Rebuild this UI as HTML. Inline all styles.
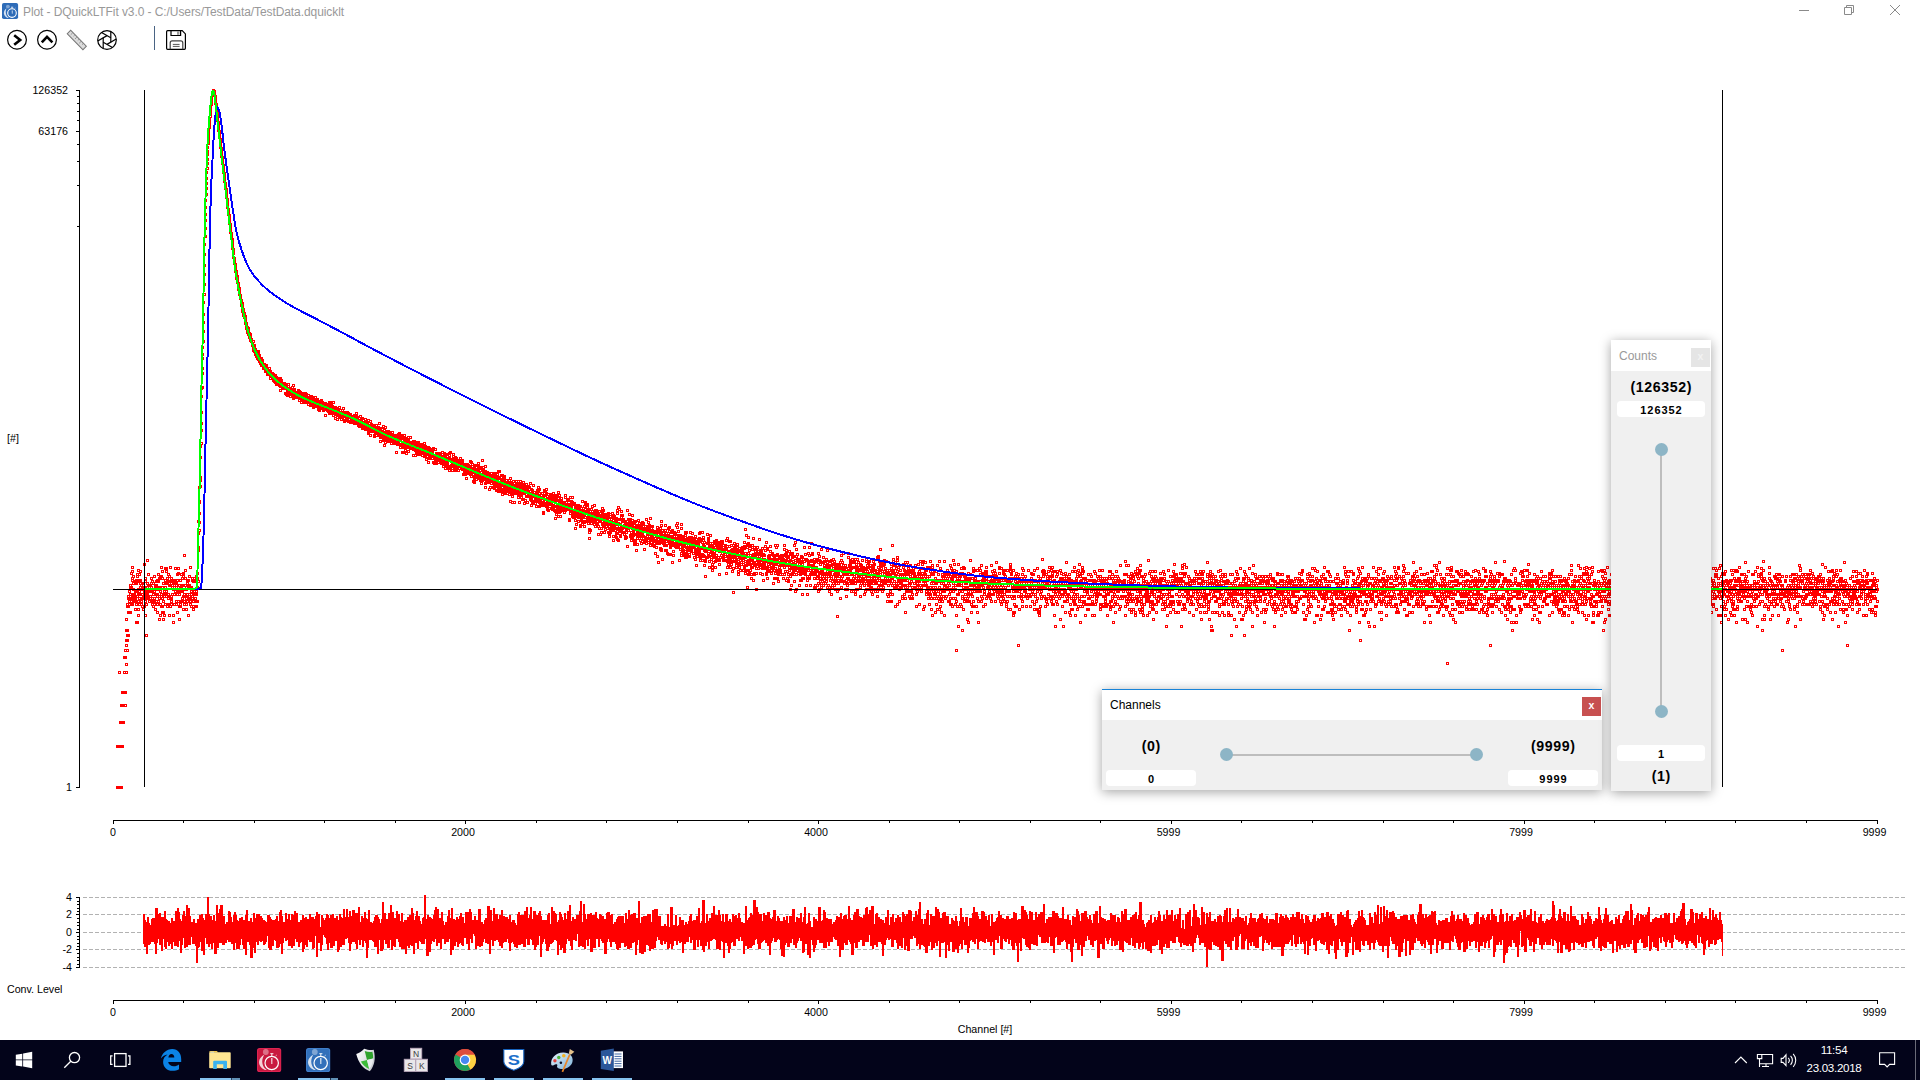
<!DOCTYPE html>
<html lang="en">
<head>
<meta charset="utf-8">
<title>Plot - DQuickLTFit v3.0</title>
<style>
*{box-sizing:border-box;margin:0;padding:0}
html,body{width:1920px;height:1080px;overflow:hidden;background:#fff}
body{position:relative;font-family:"Liberation Sans",sans-serif;color:#000}
.abs{position:absolute}
#title{left:23px;top:4px;font-size:12px;line-height:16px;color:#999;white-space:nowrap;letter-spacing:-0.08px}
#plot{left:0;top:0;width:1920px;height:1040px}
#plot text{font-family:"Liberation Sans",sans-serif;font-size:10.67px;fill:#000}
.panel{background:#f0f0f0;box-shadow:0 2px 11px rgba(0,0,0,.36)}
.ptitle{background:#fff;font-size:12px;white-space:nowrap}
.inp{background:#fff;border-radius:4px;font-weight:bold;font-size:11px;letter-spacing:.95px;text-indent:.95px;text-align:center;line-height:19.400px;height:16px;overflow:hidden}
.lab{font-weight:bold;font-size:14.200px;letter-spacing:.6px;text-indent:.6px;text-align:center;white-space:nowrap;line-height:17px}
.knob{width:13px;height:13px;border-radius:50%;background:#8db5c6}
#taskbar{left:0;top:1040px;width:1920px;height:40px;background:#03041a}
#taskbar .t{color:#fff;font-size:11.600px;letter-spacing:-.32px;white-space:nowrap;text-align:center;width:80px;left:1794px;line-height:14px}
.run{height:2px;background:#8fc1e8;top:38px}
</style>
</head>
<body>
<!-- window title bar -->
<svg class="abs" style="left:2px;top:3px" width="17" height="17" viewBox="0 0 17 17">
  <rect x="0" y="0" width="16.100" height="16.100" rx="1.800" fill="#2e6cb8"/>
  <circle cx="10" cy="10.100" r="4.300" fill="none" stroke="#fff" stroke-width="1.100"/>
  <path d="M9.800 7.400h.8l-.1 3.400h-.6z" fill="#fff"/>
  <path d="M9 4.200h2.200M10.100 4.200v1.600M12.600 5.800l.8-.7" stroke="#e8f0fa" stroke-width=".8" fill="none"/>
  <circle cx="5.900" cy="3.600" r="1.900" fill="#fff" opacity=".4"/>
  <path d="M4.600 5.300C.8 8 1.200 12 4.200 14.200C5.200 14.900 6.200 15.100 6.800 15C4.200 13.200 2.800 9.400 4.600 5.300Z" fill="#fff" opacity=".8"/>
</svg>
<div id="title" class="abs">Plot - DQuickLTFit v3.0 - C:/Users/TestData/TestData.dquicklt</div>
<svg class="abs" style="left:1790px;top:0" width="130" height="22" viewBox="0 0 130 22" fill="none" stroke="#8a8a8a" stroke-width="1">
  <path d="M9 10.5h10"/>
  <path d="M54.500 7.500h7v7h-7zM56.500 7.500v-2h7v7h-2"/>
  <path d="M100 5l10 10M110 5l-10 10"/>
</svg>

<!-- toolbar -->
<svg class="abs" style="left:0;top:22px" width="200" height="36" viewBox="0 22 200 36" fill="none">
  <circle cx="17" cy="39.8" r="9.4" stroke="#000" stroke-width="1.2"/>
  <path d="M14.2 35.2L20.2 39.9L14.2 44.8" stroke="#000" stroke-width="2.6"/>
  <circle cx="47" cy="39.8" r="9.4" stroke="#000" stroke-width="1.2"/>
  <path d="M41.8 42.4L47 36.9L52.4 42.4" stroke="#000" stroke-width="2.6"/>
  <g transform="translate(76.8 40) rotate(45.5)">
    <rect x="-11.2" y="-2.4" width="22.4" height="4.8" fill="#dcdcdc" stroke="#777" stroke-width="1"/>
    <path d="M-8 -2v2.6M-5 -2v1.6M-2 -2v2.6M1 -2v1.6M4 -2v2.6M7 -2v1.6" stroke="#888" stroke-width=".8"/>
  </g>
  <g stroke="#000" stroke-width="1.2">
    <circle cx="107" cy="40" r="9.300"/>
    <g transform="translate(107 40)"><path d="M3.800 2.200V-8.490" transform="rotate(0)"/><path d="M3.800 2.200V-8.490" transform="rotate(60)"/><path d="M3.800 2.200V-8.490" transform="rotate(120)"/><path d="M3.800 2.200V-8.490" transform="rotate(180)"/><path d="M3.800 2.200V-8.490" transform="rotate(240)"/><path d="M3.800 2.200V-8.490" transform="rotate(300)"/></g>
  </g>
  <path d="M154.5 26V50" stroke="#4a6484" stroke-width="1"/>
  <g stroke="#000" stroke-width="1.2">
    <path d="M167.6 30.7h14.6l3.2 3.2v14.4q0 1-1 1h-16.8q-1 0-1-1v-16.6q0-1 1-1z"/>
    <path d="M171 30.7v4.8h9.6v-4.8"/>
    <path d="M170.2 49.3v-6.4q0-2 2-2h8.6q2 0 2 2v6.4" stroke="#444"/>
    <path d="M172.8 44.4h6.8M172.8 46.4h6.8" stroke="#555" stroke-width="1"/>
  </g>
  <rect x="177" y="31.2" width="2.4" height="3.6" fill="#999"/>
</svg>

<!-- plot -->
<svg id="plot" class="abs" width="1920" height="1040" viewBox="0 0 1920 1040">
  <g shape-rendering="crispEdges" fill="none">
    <!-- scatter -->
    <g transform="translate(.5 .5)"><path stroke="#f00" stroke-width="1" d="M0 0m116 745h2v2h-2zm0 41h2v2h-2zm1 -41h2v2h-2zm0 41h2v2h-2zm1 -115h2v2h-2zm0 74h2v2h-2zm0 41h2v2h-2zm1 -65h2v2h-2zm0 24h2v2h-2zm0 41h2v2h-2zm1 -82h2v2h-2zm0 17h2v2h-2zm0 24h2v2h-2zm0 41h2v2h-2zm1 -95h2v2h-2zm0 13h2v2h-2zm0 17h2v2h-2zm0 24h2v2h-2zm1 -54h2v2h-2zm0 13h2v2h-2zm0 17h2v2h-2zm1 -65h2v2h-2zm0 15h2v2h-2zm0 20h2v2h-2zm1 -42h2v2h-2zm0 7h2v2h-2zm0 35h2v2h-2zm0 13h2v2h-2zm1 -86h2v2h-2zm0 11h2v2h-2zm0 10h2v2h-2zm0 5h2v2h-2zm0 19h2v2h-2zm0 8h2v2h-2zm1 -68h2v2h-2zm0 2h2v2h-2zm0 24h2v2h-2zm0 5h2v2h-2zm0 5h2v2h-2zm0 10h2v2h-2zm1 -54h2v2h-2zm0 2h2v2h-2zm0 8h2v2h-2zm0 6h2v2h-2zm0 23h2v2h-2zm1 -44h2v2h-2zm0 7h2v2h-2zm0 3h2v2h-2zm0 3h2v2h-2zm0 8h2v2h-2zm1 -27h2v2h-2zm0 2h2v2h-2zm0 7h2v2h-2zm0 2h2v2h-2zm0 2h2v2h-2zm0 14h2v2h-2zm1 -39h2v2h-2zm0 14h2v2h-2zm0 11h2v2h-2zm0 3h2v2h-2zm0 3h2v2h-2zm1 -37h2v2h-2zm0 4h2v2h-2zm0 7h2v2h-2zm0 2h2v2h-2zm0 24h2v2h-2zm1 -28h2v2h-2zm0 7h2v2h-2zm0 6h2v2h-2zm0 5h2v2h-2zm0 2h2v2h-2zm1 -2h2v2h-2zm0 2h2v2h-2zm0 2h2v2h-2zm0 3h2v2h-2zm1 -20h2v2h-2zm0 2h2v2h-2zm0 8h2v2h-2zm0 7h2v2h-2zm0 3h2v2h-2zm0 8h2v2h-2zm1 -29h2v2h-2zm0 1h2v2h-2zm0 2h2v2h-2zm0 8h2v2h-2zm0 13h2v2h-2zm0 18h2v2h-2zm1 -48h2v2h-2zm0 2h2v2h-2zm0 4h2v2h-2zm0 16h2v2h-2zm0 26h2v2h-2zm1 -52h2v2h-2zm0 19h2v2h-2zm0 5h2v2h-2zm0 7h2v2h-2zm0 8h2v2h-2zm0 6h2v2h-2zm1 -41h2v2h-2zm0 7h2v2h-2zm0 10h2v2h-2zm0 3h2v2h-2zm0 4h2v2h-2zm0 6h2v2h-2zm1 -33h2v2h-2zm0 9h2v2h-2zm0 3h2v2h-2zm0 4h2v2h-2zm0 2h2v2h-2zm1 -4h2v2h-2zm0 4h2v2h-2zm0 9h2v2h-2zm0 3h2v2h-2zm0 3h2v2h-2zm1 -21h2v2h-2zm0 4h2v2h-2zm0 7h2v2h-2zm0 4h2v2h-2zm0 8h2v2h-2zm1 -23h2v2h-2zm0 2h2v2h-2zm0 2h2v2h-2zm0 9h2v2h-2zm0 13h2v2h-2zm1 -45h2v2h-2zm0 23h2v2h-2zm0 4h2v2h-2zm0 3h2v2h-2zm0 2h2v2h-2zm0 10h2v2h-2zm1 -28h2v2h-2zm0 3h2v2h-2zm0 6h2v2h-2zm0 4h2v2h-2zm0 10h2v2h-2zm0 14h2v2h-2zm1 -21h2v2h-2zm0 2h2v2h-2zm0 2h2v2h-2zm0 6h2v2h-2zm0 31h2v2h-2zm1 -75h2v2h-2zm0 23h2v2h-2zm0 4h2v2h-2zm0 7h2v2h-2zm0 2h2v2h-2zm0 2h2v2h-2zm1 -24h2v2h-2zm0 11h2v2h-2zm0 4h2v2h-2zm0 2h2v2h-2zm0 7h2v2h-2zm1 -13h2v2h-2zm0 2h2v2h-2zm0 4h2v2h-2zm0 10h2v2h-2zm1 -16h2v2h-2zm0 6h2v2h-2zm0 5h2v2h-2zm0 2h2v2h-2zm1 -20h2v2h-2zm0 5h2v2h-2zm0 4h2v2h-2zm0 2h2v2h-2zm0 2h2v2h-2zm0 10h2v2h-2zm1 -20h2v2h-2zm0 17h2v2h-2zm0 3h2v2h-2zm0 3h2v2h-2zm1 -21h2v2h-2zm0 11h2v2h-2zm0 7h2v2h-2zm0 5h2v2h-2zm1 -30h2v2h-2zm0 15h2v2h-2zm0 7h2v2h-2zm0 3h2v2h-2zm0 3h2v2h-2zm1 -19h2v2h-2zm0 2h2v2h-2zm0 2h2v2h-2zm0 20h2v2h-2zm1 -28h2v2h-2zm0 4h2v2h-2zm0 2h2v2h-2zm0 2h2v2h-2zm0 5h2v2h-2zm0 7h2v2h-2zm1 -21h2v2h-2zm0 14h2v2h-2zm0 2h2v2h-2zm0 8h2v2h-2zm0 8h2v2h-2zm1 -38h2v2h-2zm0 7h2v2h-2zm0 6h2v2h-2zm0 14h2v2h-2zm1 -23h2v2h-2zm0 9h2v2h-2zm0 2h2v2h-2zm0 7h2v2h-2zm0 2h2v2h-2zm0 21h2v2h-2zm1 -43h2v2h-2zm0 2h2v2h-2zm0 11h2v2h-2zm0 2h2v2h-2zm0 13h2v2h-2zm0 11h2v2h-2zm1 -48h2v2h-2zm0 9h2v2h-2zm0 18h2v2h-2zm0 2h2v2h-2zm0 10h2v2h-2zm1 -35h2v2h-2zm0 7h2v2h-2zm0 9h2v2h-2zm0 11h2v2h-2zm0 8h2v2h-2zm0 6h2v2h-2zm1 -29h2v2h-2zm0 18h2v2h-2zm0 11h2v2h-2zm0 7h2v2h-2zm1 -28h2v2h-2zm0 3h2v2h-2zm0 2h2v2h-2zm0 19h2v2h-2zm1 -47h2v2h-2zm0 12h2v2h-2zm0 3h2v2h-2zm0 4h2v2h-2zm0 7h2v2h-2zm0 10h2v2h-2zm1 -36h2v2h-2zm0 3h2v2h-2zm0 12h2v2h-2zm0 8h2v2h-2zm0 5h2v2h-2zm1 -18h2v2h-2zm0 5h2v2h-2zm0 21h2v2h-2zm0 2h2v2h-2zm1 -32h2v2h-2zm0 7h2v2h-2zm0 13h2v2h-2zm0 2h2v2h-2zm0 2h2v2h-2zm0 6h2v2h-2zm1 -28h2v2h-2zm0 5h2v2h-2zm0 2h2v2h-2zm0 2h2v2h-2zm0 11h2v2h-2zm0 19h2v2h-2zm1 -48h2v2h-2zm0 18h2v2h-2zm0 13h2v2h-2zm0 8h2v2h-2zm1 -28h2v2h-2zm0 5h2v2h-2zm0 13h2v2h-2zm0 2h2v2h-2zm0 3h2v2h-2zm0 3h2v2h-2zm1 -24h2v2h-2zm0 1h2v2h-2zm0 4h2v2h-2zm0 2h2v2h-2zm0 7h2v2h-2zm1 -13h2v2h-2zm0 8h2v2h-2zm0 26h2v2h-2zm0 7h2v2h-2zm1 -39h2v2h-2zm0 2h2v2h-2zm0 2h2v2h-2zm0 7h2v2h-2zm0 10h2v2h-2zm1 -36h2v2h-2zm0 12h2v2h-2zm0 1h2v2h-2zm0 2h2v2h-2zm0 8h2v2h-2zm1 -8h2v2h-2zm0 2h2v2h-2zm0 2h2v2h-2zm0 14h2v2h-2zm0 3h2v2h-2zm1 -30h2v2h-2zm0 6h2v2h-2zm0 11h2v2h-2zm0 3h2v2h-2zm0 18h2v2h-2zm1 -44h2v2h-2zm0 5h2v2h-2zm0 16h2v2h-2zm0 2h2v2h-2zm0 10h2v2h-2zm1 -16h2v2h-2zm0 9h2v2h-2zm0 12h2v2h-2zm0 13h2v2h-2zm1 -39h2v2h-2zm0 7h2v2h-2zm0 14h2v2h-2zm0 3h2v2h-2zm0 2h2v2h-2zm1 -32h2v2h-2zm0 11h2v2h-2zm0 2h2v2h-2zm0 2h2v2h-2zm0 2h2v2h-2zm0 10h2v2h-2zm1 -23h2v2h-2zm0 7h2v2h-2zm0 6h2v2h-2zm0 7h2v2h-2zm1 -25h2v2h-2zm0 1h2v2h-2zm0 2h2v2h-2zm0 13h2v2h-2zm0 7h2v2h-2zm0 13h2v2h-2zm1 -54h2v2h-2zm0 39h2v2h-2zm0 2h2v2h-2zm0 5h2v2h-2zm0 3h2v2h-2zm1 -34h2v2h-2zm0 8h2v2h-2zm0 7h2v2h-2zm0 11h2v2h-2zm1 -9h2v2h-2zm0 2h2v2h-2zm0 7h2v2h-2zm0 2h2v2h-2zm0 6h2v2h-2zm0 5h2v2h-2zm1 -28h2v2h-2zm0 2h2v2h-2zm0 2h2v2h-2zm0 9h2v2h-2zm0 7h2v2h-2zm1 -21h2v2h-2zm0 5h2v2h-2zm0 2h2v2h-2zm0 11h2v2h-2zm0 17h2v2h-2zm1 -39h2v2h-2zm0 9h2v2h-2zm0 2h2v2h-2zm0 7h2v2h-2zm0 2h2v2h-2zm0 2h2v2h-2zm1 -31h2v2h-2zm0 20h2v2h-2zm0 11h2v2h-2zm0 3h2v2h-2zm0 3h2v2h-2zm1 -17h2v2h-2zm0 4h2v2h-2zm0 3h2v2h-2zm0 12h2v2h-2zm1 -28h2v2h-2zm0 2h2v2h-2zm0 16h2v2h-2zm0 2h2v2h-2zm1 -17h2v2h-2zm0 13h2v2h-2zm0 7h2v2h-2zm0 5h2v2h-2zm0 3h2v2h-2zm1 -31h2v2h-2zm0 2h2v2h-2zm0 11h2v2h-2zm0 3h2v2h-2zm1 -14h2v2h-2zm0 1h2v2h-2zm0 13h2v2h-2zm0 4h2v2h-2zm0 8h2v2h-2zm1 -30h2v2h-2zm0 13h2v2h-2zm0 2h2v2h-2zm0 3h2v2h-2zm0 7h2v2h-2zm0 5h2v2h-2zm1 -33h2v2h-2zm0 5h2v2h-2zm0 9h2v2h-2zm0 14h2v2h-2zm1 -80h2v2h-2zm0 12h2v2h-2zm0 14h2v2h-2zm0 1h2v2h-2zm0 2h2v2h-2zm0 31h2v2h-2zm1 -94h2v2h-2zm0 14h2v2h-2zm0 1h2v2h-2zm0 11h2v2h-2zm0 9h2v2h-2zm0 8h2v2h-2zm1 -84h2v2h-2zm0 11h2v2h-2zm0 20h2v2h-2zm0 3h2v2h-2zm0 6h2v2h-2zm1 -98h2v2h-2zm0 8h2v2h-2zm0 16h2v2h-2zm0 11h2v2h-2zm0 7h2v2h-2zm0 13h2v2h-2zm1 -96h2v2h-2zm0 7h2v2h-2zm0 4h2v2h-2zm0 10h2v2h-2zm0 5h2v2h-2zm0 14h2v2h-2zm1 -85h2v2h-2zm0 12h2v2h-2zm0 8h2v2h-2zm0 9h2v2h-2zm0 10h2v2h-2zm1 -97h2v2h-2zm0 10h2v2h-2zm0 11h2v2h-2zm0 9h2v2h-2zm0 10h2v2h-2zm0 10h2v2h-2zm1 -94h2v2h-2zm0 7h2v2h-2zm0 7h2v2h-2zm0 6h2v2h-2zm0 8h2v2h-2zm0 8h2v2h-2zm1 -64h2v2h-2zm0 6h2v2h-2zm0 5h2v2h-2zm0 5h2v2h-2zm0 6h2v2h-2zm1 -47h2v2h-2zm0 4h2v2h-2zm0 3h2v2h-2zm0 5h2v2h-2zm0 4h2v2h-2zm0 5h2v2h-2zm1 -38h2v2h-2zm0 2h2v2h-2zm0 2h2v2h-2zm0 3h2v2h-2zm0 3h2v2h-2zm0 3h2v2h-2zm1 -25h2v2h-2zm0 2h2v2h-2zm0 2h2v2h-2zm0 2h2v2h-2zm0 3h2v2h-2zm1 -21h2v2h-2zm0 2h2v2h-2zm0 2h2v2h-2zm0 2h2v2h-2zm0 1h2v2h-2zm0 3h2v2h-2zm1 -19h2v2h-2zm0 1h2v2h-2zm0 1h2v2h-2zm0 2h2v2h-2zm0 2h2v2h-2zm0 1h2v2h-2zm1 -12h2v2h-2zm0 1h2v2h-2zm0 1h2v2h-2zm0 1h2v2h-2zm1 -5h2v2h-2zm0 1h2v2h-2zm1 0h2v2h-2zm0 1h2v2h-2zm0 1h2v2h-2zm0 2h2v2h-2zm1 1h2v2h-2zm0 1h2v2h-2zm0 2h2v2h-2zm0 1h2v2h-2zm0 1h2v2h-2zm0 2h2v2h-2zm1 1h2v2h-2zm0 2h2v2h-2zm0 1h2v2h-2zm0 2h2v2h-2zm0 1h2v2h-2zm1 3h2v2h-2zm0 1h2v2h-2zm0 1h2v2h-2zm0 2h2v2h-2zm0 1h2v2h-2zm0 2h2v2h-2zm1 2h2v2h-2zm0 2h2v2h-2zm0 1h2v2h-2zm0 2h2v2h-2zm0 1h2v2h-2zm0 2h2v2h-2zm1 1h2v2h-2zm0 2h2v2h-2zm0 1h2v2h-2zm0 2h2v2h-2zm0 1h2v2h-2zm1 2h2v2h-2zm0 2h2v2h-2zm0 1h2v2h-2zm0 1h2v2h-2zm0 3h2v2h-2zm0 1h2v2h-2zm1 1h2v2h-2zm0 2h2v2h-2zm0 2h2v2h-2zm0 2h2v2h-2zm0 2h2v2h-2zm1 1h2v2h-2zm0 2h2v2h-2zm0 2h2v2h-2zm0 1h2v2h-2zm0 1h2v2h-2zm1 2h2v2h-2zm0 1h2v2h-2zm0 2h2v2h-2zm0 1h2v2h-2zm0 1h2v2h-2zm0 2h2v2h-2zm1 1h2v2h-2zm0 2h2v2h-2zm0 1h2v2h-2zm0 1h2v2h-2zm0 2h2v2h-2zm0 2h2v2h-2zm1 2h2v2h-2zm0 3h2v2h-2zm0 1h2v2h-2zm0 1h2v2h-2zm1 1h2v2h-2zm0 2h2v2h-2zm0 2h2v2h-2zm0 2h2v2h-2zm0 2h2v2h-2zm1 2h2v2h-2zm0 1h2v2h-2zm0 2h2v2h-2zm0 2h2v2h-2zm0 1h2v2h-2zm0 2h2v2h-2zm1 2h2v2h-2zm0 1h2v2h-2zm0 1h2v2h-2zm0 2h2v2h-2zm0 1h2v2h-2zm1 1h2v2h-2zm0 2h2v2h-2zm0 2h2v2h-2zm0 1h2v2h-2zm0 1h2v2h-2zm0 2h2v2h-2zm1 1h2v2h-2zm0 2h2v2h-2zm0 2h2v2h-2zm0 1h2v2h-2zm0 3h2v2h-2zm1 1h2v2h-2zm0 1h2v2h-2zm0 2h2v2h-2zm0 1h2v2h-2zm0 1h2v2h-2zm1 1h2v2h-2zm0 3h2v2h-2zm0 1h2v2h-2zm0 1h2v2h-2zm0 3h2v2h-2zm0 1h2v2h-2zm1 1h2v2h-2zm0 1h2v2h-2zm0 2h2v2h-2zm0 1h2v2h-2zm0 4h2v2h-2zm1 1h2v2h-2zm0 3h2v2h-2zm0 2h2v2h-2zm1 1h2v2h-2zm0 2h2v2h-2zm0 2h2v2h-2zm0 3h2v2h-2zm1 0h2v2h-2zm0 2h2v2h-2zm0 1h2v2h-2zm0 3h2v2h-2zm0 1h2v2h-2zm1 -2h2v2h-2zm0 2h2v2h-2zm0 1h2v2h-2zm0 1h2v2h-2zm0 2h2v2h-2zm1 1h2v2h-2zm0 1h2v2h-2zm0 1h2v2h-2zm0 3h2v2h-2zm0 1h2v2h-2zm1 -1h2v2h-2zm0 1h2v2h-2zm0 1h2v2h-2zm0 1h2v2h-2zm0 1h2v2h-2zm0 2h2v2h-2zm1 1h2v2h-2zm0 1h2v2h-2zm0 1h2v2h-2zm0 1h2v2h-2zm1 2h2v2h-2zm0 2h2v2h-2zm0 2h2v2h-2zm0 1h2v2h-2zm1 -2h2v2h-2zm0 1h2v2h-2zm0 1h2v2h-2zm0 3h2v2h-2zm0 3h2v2h-2zm1 -2h2v2h-2zm0 1h2v2h-2zm0 4h2v2h-2zm0 1h2v2h-2zm1 -2h2v2h-2zm0 1h2v2h-2zm0 2h2v2h-2zm0 1h2v2h-2zm1 -1h2v2h-2zm0 3h2v2h-2zm0 1h2v2h-2zm0 2h2v2h-2zm0 1h2v2h-2zm1 0h2v2h-2zm0 1h2v2h-2zm0 1h2v2h-2zm0 3h2v2h-2zm1 -1h2v2h-2zm0 1h2v2h-2zm0 1h2v2h-2zm0 1h2v2h-2zm0 2h2v2h-2zm1 -4h2v2h-2zm0 3h2v2h-2zm0 1h2v2h-2zm0 2h2v2h-2zm1 -1h2v2h-2zm0 1h2v2h-2zm0 1h2v2h-2zm0 1h2v2h-2zm0 1h2v2h-2zm1 -3h2v2h-2zm0 2h2v2h-2zm0 2h2v2h-2zm0 1h2v2h-2zm0 1h2v2h-2zm1 -1h2v2h-2zm0 1h2v2h-2zm0 1h2v2h-2zm1 2h2v2h-2zm0 1h2v2h-2zm0 1h2v2h-2zm1 -4h2v2h-2zm0 4h2v2h-2zm0 1h2v2h-2zm0 1h2v2h-2zm0 3h2v2h-2zm1 -5h2v2h-2zm0 2h2v2h-2zm0 1h2v2h-2zm0 1h2v2h-2zm0 2h2v2h-2zm1 -2h2v2h-2zm0 1h2v2h-2zm0 1h2v2h-2zm0 3h2v2h-2zm1 -3h2v2h-2zm0 3h2v2h-2zm0 1h2v2h-2zm0 1h2v2h-2zm1 -4h2v2h-2zm0 2h2v2h-2zm0 1h2v2h-2zm0 3h2v2h-2zm1 -7h2v2h-2zm0 2h2v2h-2zm0 3h2v2h-2zm0 3h2v2h-2zm1 -4h2v2h-2zm0 2h2v2h-2zm0 1h2v2h-2zm0 1h2v2h-2zm0 2h2v2h-2zm1 -3h2v2h-2zm0 2h2v2h-2zm0 1h2v2h-2zm0 1h2v2h-2zm0 1h2v2h-2zm1 -5h2v2h-2zm0 3h2v2h-2zm0 1h2v2h-2zm0 3h2v2h-2zm1 -5h2v2h-2zm0 3h2v2h-2zm0 1h2v2h-2zm1 1h2v2h-2zm0 1h2v2h-2zm0 2h2v2h-2zm1 -4h2v2h-2zm0 3h2v2h-2zm0 1h2v2h-2zm1 -3h2v2h-2zm0 2h2v2h-2zm0 1h2v2h-2zm0 1h2v2h-2zm0 2h2v2h-2zm1 -6h2v2h-2zm0 2h2v2h-2zm0 4h2v2h-2zm1 -3h2v2h-2zm0 2h2v2h-2zm0 4h2v2h-2zm1 -3h2v2h-2zm0 1h2v2h-2zm0 1h2v2h-2zm0 1h2v2h-2zm1 -6h2v2h-2zm0 3h2v2h-2zm0 2h2v2h-2zm0 1h2v2h-2zm1 -3h2v2h-2zm0 2h2v2h-2zm0 2h2v2h-2zm0 3h2v2h-2zm1 -5h2v2h-2zm0 1h2v2h-2zm0 2h2v2h-2zm1 -3h2v2h-2zm0 1h2v2h-2zm0 1h2v2h-2zm0 2h2v2h-2zm1 -3h2v2h-2zm0 1h2v2h-2zm0 1h2v2h-2zm0 4h2v2h-2zm1 -5h2v2h-2zm0 2h2v2h-2zm0 2h2v2h-2zm0 1h2v2h-2zm0 1h2v2h-2zm1 -6h2v2h-2zm0 3h2v2h-2zm0 1h2v2h-2zm0 2h2v2h-2zm0 1h2v2h-2zm1 -5h2v2h-2zm0 1h2v2h-2zm0 2h2v2h-2zm0 1h2v2h-2zm0 3h2v2h-2zm1 -4h2v2h-2zm0 1h2v2h-2zm0 1h2v2h-2zm0 2h2v2h-2zm1 -6h2v2h-2zm0 3h2v2h-2zm0 1h2v2h-2zm0 1h2v2h-2zm1 -5h2v2h-2zm0 2h2v2h-2zm0 1h2v2h-2zm0 4h2v2h-2zm1 -7h2v2h-2zm0 2h2v2h-2zm0 3h2v2h-2zm0 1h2v2h-2zm0 2h2v2h-2zm0 4h2v2h-2zm1 -10h2v2h-2zm0 1h2v2h-2zm0 2h2v2h-2zm0 2h2v2h-2zm1 -2h2v2h-2zm0 2h2v2h-2zm0 1h2v2h-2zm0 1h2v2h-2zm0 1h2v2h-2zm1 -5h2v2h-2zm0 2h2v2h-2zm0 2h2v2h-2zm0 1h2v2h-2zm1 -5h2v2h-2zm0 3h2v2h-2zm0 1h2v2h-2zm0 1h2v2h-2zm1 -4h2v2h-2zm0 3h2v2h-2zm0 1h2v2h-2zm0 5h2v2h-2zm1 -9h2v2h-2zm0 3h2v2h-2zm0 1h2v2h-2zm0 5h2v2h-2zm0 1h2v2h-2zm1 -6h2v2h-2zm0 1h2v2h-2zm0 1h2v2h-2zm0 2h2v2h-2zm0 3h2v2h-2zm1 -11h2v2h-2zm0 2h2v2h-2zm0 5h2v2h-2zm1 -3h2v2h-2zm0 1h2v2h-2zm0 3h2v2h-2zm0 1h2v2h-2zm1 -4h2v2h-2zm0 1h2v2h-2zm0 1h2v2h-2zm0 5h2v2h-2zm1 -7h2v2h-2zm0 1h2v2h-2zm0 2h2v2h-2zm0 1h2v2h-2zm0 1h2v2h-2zm1 -7h2v2h-2zm0 4h2v2h-2zm0 2h2v2h-2zm0 1h2v2h-2zm0 1h2v2h-2zm1 -10h2v2h-2zm0 5h2v2h-2zm0 2h2v2h-2zm0 3h2v2h-2zm0 2h2v2h-2zm0 1h2v2h-2zm1 -9h2v2h-2zm0 2h2v2h-2zm0 1h2v2h-2zm0 1h2v2h-2zm0 1h2v2h-2zm1 -2h2v2h-2zm0 2h2v2h-2zm0 1h2v2h-2zm1 -3h2v2h-2zm0 1h2v2h-2zm0 1h2v2h-2zm0 1h2v2h-2zm0 2h2v2h-2zm1 -5h2v2h-2zm0 2h2v2h-2zm0 2h2v2h-2zm1 -6h2v2h-2zm0 2h2v2h-2zm0 2h2v2h-2zm0 2h2v2h-2zm0 1h2v2h-2zm1 -6h2v2h-2zm0 3h2v2h-2zm0 1h2v2h-2zm0 1h2v2h-2zm0 4h2v2h-2zm1 -8h2v2h-2zm0 3h2v2h-2zm0 1h2v2h-2zm0 1h2v2h-2zm1 -3h2v2h-2zm0 2h2v2h-2zm0 1h2v2h-2zm0 1h2v2h-2zm0 4h2v2h-2zm1 -9h2v2h-2zm0 1h2v2h-2zm0 3h2v2h-2zm0 2h2v2h-2zm1 -4h2v2h-2zm0 2h2v2h-2zm0 1h2v2h-2zm0 1h2v2h-2zm0 2h2v2h-2zm1 -6h2v2h-2zm0 3h2v2h-2zm0 2h2v2h-2zm0 1h2v2h-2zm0 1h2v2h-2zm1 -9h2v2h-2zm0 2h2v2h-2zm0 3h2v2h-2zm0 1h2v2h-2zm0 1h2v2h-2zm1 -6h2v2h-2zm0 4h2v2h-2zm0 1h2v2h-2zm0 2h2v2h-2zm0 1h2v2h-2zm1 -5h2v2h-2zm0 1h2v2h-2zm1 -3h2v2h-2zm0 4h2v2h-2zm0 1h2v2h-2zm0 2h2v2h-2zm0 2h2v2h-2zm1 -5h2v2h-2zm0 1h2v2h-2zm0 1h2v2h-2zm0 1h2v2h-2zm1 -4h2v2h-2zm0 2h2v2h-2zm0 1h2v2h-2zm0 3h2v2h-2zm0 1h2v2h-2zm1 -9h2v2h-2zm0 2h2v2h-2zm0 2h2v2h-2zm0 2h2v2h-2zm0 1h2v2h-2zm1 -6h2v2h-2zm0 4h2v2h-2zm0 1h2v2h-2zm0 1h2v2h-2zm1 -4h2v2h-2zm0 3h2v2h-2zm0 1h2v2h-2zm0 1h2v2h-2zm0 2h2v2h-2zm0 1h2v2h-2zm1 -8h2v2h-2zm0 1h2v2h-2zm0 2h2v2h-2zm0 1h2v2h-2zm1 -6h2v2h-2zm0 2h2v2h-2zm0 5h2v2h-2zm1 -4h2v2h-2zm0 1h2v2h-2zm0 2h2v2h-2zm0 3h2v2h-2zm1 -7h2v2h-2zm0 1h2v2h-2zm0 1h2v2h-2zm0 2h2v2h-2zm0 2h2v2h-2zm0 1h2v2h-2zm1 -5h2v2h-2zm0 1h2v2h-2zm0 2h2v2h-2zm0 4h2v2h-2zm0 1h2v2h-2zm1 -7h2v2h-2zm0 1h2v2h-2zm0 2h2v2h-2zm0 2h2v2h-2zm0 3h2v2h-2zm1 -9h2v2h-2zm0 3h2v2h-2zm0 1h2v2h-2zm0 1h2v2h-2zm1 -6h2v2h-2zm0 4h2v2h-2zm0 1h2v2h-2zm0 2h2v2h-2zm0 1h2v2h-2zm1 -6h2v2h-2zm0 2h2v2h-2zm0 1h2v2h-2zm0 1h2v2h-2zm0 1h2v2h-2zm1 -4h2v2h-2zm0 2h2v2h-2zm0 2h2v2h-2zm0 3h2v2h-2zm1 -7h2v2h-2zm0 1h2v2h-2zm0 1h2v2h-2zm0 4h2v2h-2zm1 -6h2v2h-2zm0 3h2v2h-2zm0 1h2v2h-2zm0 8h2v2h-2zm1 -11h2v2h-2zm0 2h2v2h-2zm0 1h2v2h-2zm0 1h2v2h-2zm0 1h2v2h-2zm1 -2h2v2h-2zm0 1h2v2h-2zm0 2h2v2h-2zm1 -6h2v2h-2zm0 1h2v2h-2zm0 4h2v2h-2zm0 1h2v2h-2zm0 1h2v2h-2zm1 -9h2v2h-2zm0 5h2v2h-2zm0 2h2v2h-2zm0 1h2v2h-2zm0 2h2v2h-2zm0 1h2v2h-2zm1 -11h2v2h-2zm0 2h2v2h-2zm0 2h2v2h-2zm0 2h2v2h-2zm0 5h2v2h-2zm1 -10h2v2h-2zm0 4h2v2h-2zm0 1h2v2h-2zm0 4h2v2h-2zm0 1h2v2h-2zm1 -7h2v2h-2zm0 1h2v2h-2zm0 1h2v2h-2zm0 2h2v2h-2zm1 -8h2v2h-2zm0 6h2v2h-2zm0 2h2v2h-2zm0 1h2v2h-2zm0 4h2v2h-2zm1 -8h2v2h-2zm0 2h2v2h-2zm0 1h2v2h-2zm0 1h2v2h-2zm0 1h2v2h-2zm1 -5h2v2h-2zm0 2h2v2h-2zm0 2h2v2h-2zm0 3h2v2h-2zm0 2h2v2h-2zm0 2h2v2h-2zm1 -10h2v2h-2zm0 3h2v2h-2zm0 1h2v2h-2zm0 1h2v2h-2zm1 -5h2v2h-2zm0 1h2v2h-2zm0 1h2v2h-2zm0 2h2v2h-2zm0 2h2v2h-2zm0 5h2v2h-2zm1 -10h2v2h-2zm0 1h2v2h-2zm0 3h2v2h-2zm0 2h2v2h-2zm1 -8h2v2h-2zm0 5h2v2h-2zm0 1h2v2h-2zm0 3h2v2h-2zm1 -6h2v2h-2zm0 3h2v2h-2zm0 2h2v2h-2zm0 1h2v2h-2zm0 1h2v2h-2zm1 -4h2v2h-2zm0 1h2v2h-2zm0 3h2v2h-2zm0 2h2v2h-2zm1 -9h2v2h-2zm0 2h2v2h-2zm0 1h2v2h-2zm1 -5h2v2h-2zm0 4h2v2h-2zm0 2h2v2h-2zm0 1h2v2h-2zm0 1h2v2h-2zm1 -4h2v2h-2zm0 4h2v2h-2zm0 2h2v2h-2zm0 2h2v2h-2zm0 1h2v2h-2zm1 -9h2v2h-2zm0 1h2v2h-2zm0 3h2v2h-2zm1 -4h2v2h-2zm0 1h2v2h-2zm0 3h2v2h-2zm0 2h2v2h-2zm1 -6h2v2h-2zm0 2h2v2h-2zm0 4h2v2h-2zm0 1h2v2h-2zm0 1h2v2h-2zm1 -7h2v2h-2zm0 2h2v2h-2zm0 2h2v2h-2zm0 4h2v2h-2zm1 -7h2v2h-2zm0 1h2v2h-2zm0 1h2v2h-2zm0 1h2v2h-2zm1 -3h2v2h-2zm0 1h2v2h-2zm0 2h2v2h-2zm0 4h2v2h-2zm0 1h2v2h-2zm1 -6h2v2h-2zm0 1h2v2h-2zm0 1h2v2h-2zm0 3h2v2h-2zm1 -5h2v2h-2zm0 1h2v2h-2zm0 1h2v2h-2zm0 2h2v2h-2zm1 -1h2v2h-2zm0 1h2v2h-2zm0 1h2v2h-2zm0 1h2v2h-2zm1 -7h2v2h-2zm0 4h2v2h-2zm0 2h2v2h-2zm0 2h2v2h-2zm1 -7h2v2h-2zm0 1h2v2h-2zm0 1h2v2h-2zm0 1h2v2h-2zm0 3h2v2h-2zm1 -9h2v2h-2zm0 3h2v2h-2zm0 1h2v2h-2zm0 1h2v2h-2zm1 -1h2v2h-2zm0 1h2v2h-2zm0 3h2v2h-2zm0 2h2v2h-2zm1 -3h2v2h-2zm0 1h2v2h-2zm0 1h2v2h-2zm0 1h2v2h-2zm0 2h2v2h-2zm1 -7h2v2h-2zm0 3h2v2h-2zm0 1h2v2h-2zm0 2h2v2h-2zm0 2h2v2h-2zm1 -10h2v2h-2zm0 5h2v2h-2zm0 2h2v2h-2zm0 1h2v2h-2zm0 1h2v2h-2zm1 -7h2v2h-2zm0 1h2v2h-2zm0 1h2v2h-2zm0 1h2v2h-2zm1 -3h2v2h-2zm0 4h2v2h-2zm0 1h2v2h-2zm0 1h2v2h-2zm0 4h2v2h-2zm1 -5h2v2h-2zm0 1h2v2h-2zm0 1h2v2h-2zm0 2h2v2h-2zm1 -4h2v2h-2zm0 1h2v2h-2zm0 1h2v2h-2zm0 3h2v2h-2zm1 -9h2v2h-2zm0 3h2v2h-2zm0 1h2v2h-2zm0 5h2v2h-2zm0 1h2v2h-2zm1 -6h2v2h-2zm0 1h2v2h-2zm0 2h2v2h-2zm0 1h2v2h-2zm0 1h2v2h-2zm1 -6h2v2h-2zm0 2h2v2h-2zm0 1h2v2h-2zm0 1h2v2h-2zm1 -6h2v2h-2zm0 7h2v2h-2zm0 1h2v2h-2zm0 1h2v2h-2zm0 3h2v2h-2zm0 1h2v2h-2zm1 -8h2v2h-2zm0 2h2v2h-2zm0 1h2v2h-2zm0 3h2v2h-2zm1 -10h2v2h-2zm0 5h2v2h-2zm0 3h2v2h-2zm0 2h2v2h-2zm0 4h2v2h-2zm1 -11h2v2h-2zm0 1h2v2h-2zm0 1h2v2h-2zm0 1h2v2h-2zm0 2h2v2h-2zm0 1h2v2h-2zm1 -5h2v2h-2zm0 1h2v2h-2zm0 2h2v2h-2zm0 3h2v2h-2zm1 -5h2v2h-2zm0 1h2v2h-2zm0 2h2v2h-2zm0 2h2v2h-2zm1 -6h2v2h-2zm0 1h2v2h-2zm0 1h2v2h-2zm0 8h2v2h-2zm0 1h2v2h-2zm1 -9h2v2h-2zm0 1h2v2h-2zm0 1h2v2h-2zm0 3h2v2h-2zm0 1h2v2h-2zm1 -8h2v2h-2zm0 3h2v2h-2zm0 3h2v2h-2zm0 2h2v2h-2zm0 2h2v2h-2zm1 -8h2v2h-2zm0 1h2v2h-2zm0 2h2v2h-2zm1 -3h2v2h-2zm0 1h2v2h-2zm0 3h2v2h-2zm0 2h2v2h-2zm0 2h2v2h-2zm1 -12h2v2h-2zm0 6h2v2h-2zm0 1h2v2h-2zm0 4h2v2h-2zm0 1h2v2h-2zm1 -7h2v2h-2zm0 5h2v2h-2zm0 1h2v2h-2zm0 1h2v2h-2zm0 2h2v2h-2zm0 4h2v2h-2zm1 -9h2v2h-2zm0 1h2v2h-2zm0 1h2v2h-2zm0 2h2v2h-2zm1 -7h2v2h-2zm0 4h2v2h-2zm0 1h2v2h-2zm1 -8h2v2h-2zm0 7h2v2h-2zm0 3h2v2h-2zm0 2h2v2h-2zm0 1h2v2h-2zm0 1h2v2h-2zm1 -10h2v2h-2zm0 3h2v2h-2zm0 2h2v2h-2zm0 10h2v2h-2zm1 -18h2v2h-2zm0 7h2v2h-2zm0 4h2v2h-2zm0 4h2v2h-2zm1 -11h2v2h-2zm0 4h2v2h-2zm0 1h2v2h-2zm0 1h2v2h-2zm0 1h2v2h-2zm0 2h2v2h-2zm1 -9h2v2h-2zm0 2h2v2h-2zm0 3h2v2h-2zm0 1h2v2h-2zm0 4h2v2h-2zm1 -10h2v2h-2zm0 2h2v2h-2zm0 1h2v2h-2zm0 3h2v2h-2zm0 4h2v2h-2zm1 -8h2v2h-2zm0 1h2v2h-2zm0 3h2v2h-2zm0 1h2v2h-2zm0 3h2v2h-2zm1 -9h2v2h-2zm0 2h2v2h-2zm0 3h2v2h-2zm0 4h2v2h-2zm1 -6h2v2h-2zm0 1h2v2h-2zm0 2h2v2h-2zm0 1h2v2h-2zm0 4h2v2h-2zm1 -11h2v2h-2zm0 3h2v2h-2zm0 1h2v2h-2zm0 1h2v2h-2zm0 2h2v2h-2zm0 1h2v2h-2zm1 -4h2v2h-2zm0 1h2v2h-2zm0 1h2v2h-2zm0 1h2v2h-2zm1 -3h2v2h-2zm0 1h2v2h-2zm0 1h2v2h-2zm0 2h2v2h-2zm0 3h2v2h-2zm1 -8h2v2h-2zm0 2h2v2h-2zm0 2h2v2h-2zm0 2h2v2h-2zm0 1h2v2h-2zm1 -6h2v2h-2zm0 2h2v2h-2zm0 1h2v2h-2zm0 4h2v2h-2zm0 9h2v2h-2zm1 -15h2v2h-2zm0 2h2v2h-2zm0 3h2v2h-2zm0 2h2v2h-2zm1 -10h2v2h-2zm0 5h2v2h-2zm0 1h2v2h-2zm0 1h2v2h-2zm0 2h2v2h-2zm1 -10h2v2h-2zm0 3h2v2h-2zm0 2h2v2h-2zm0 6h2v2h-2zm1 -7h2v2h-2zm0 2h2v2h-2zm0 3h2v2h-2zm0 2h2v2h-2zm0 1h2v2h-2zm0 2h2v2h-2zm1 -12h2v2h-2zm0 2h2v2h-2zm0 1h2v2h-2zm0 6h2v2h-2zm1 -8h2v2h-2zm0 2h2v2h-2zm0 4h2v2h-2zm0 2h2v2h-2zm0 8h2v2h-2zm1 -9h2v2h-2zm0 1h2v2h-2zm0 1h2v2h-2zm0 2h2v2h-2zm0 5h2v2h-2zm1 -17h2v2h-2zm0 4h2v2h-2zm0 4h2v2h-2zm0 2h2v2h-2zm0 2h2v2h-2zm1 -9h2v2h-2zm0 3h2v2h-2zm0 7h2v2h-2zm0 2h2v2h-2zm1 -12h2v2h-2zm0 3h2v2h-2zm0 1h2v2h-2zm0 1h2v2h-2zm0 2h2v2h-2zm0 8h2v2h-2zm1 -13h2v2h-2zm0 3h2v2h-2zm0 2h2v2h-2zm0 2h2v2h-2zm1 -10h2v2h-2zm0 3h2v2h-2zm0 4h2v2h-2zm0 3h2v2h-2zm0 4h2v2h-2zm1 -7h2v2h-2zm0 1h2v2h-2zm1 -8h2v2h-2zm0 5h2v2h-2zm0 1h2v2h-2zm0 5h2v2h-2zm1 -3h2v2h-2zm0 1h2v2h-2zm0 1h2v2h-2zm0 1h2v2h-2zm1 -5h2v2h-2zm0 1h2v2h-2zm0 1h2v2h-2zm0 1h2v2h-2zm0 1h2v2h-2zm1 -6h2v2h-2zm0 1h2v2h-2zm0 2h2v2h-2zm0 4h2v2h-2zm0 1h2v2h-2zm0 6h2v2h-2zm1 -14h2v2h-2zm0 3h2v2h-2zm0 1h2v2h-2zm0 1h2v2h-2zm0 2h2v2h-2zm1 -2h2v2h-2zm0 1h2v2h-2zm0 2h2v2h-2zm0 1h2v2h-2zm0 5h2v2h-2zm1 -11h2v2h-2zm0 5h2v2h-2zm0 1h2v2h-2zm0 2h2v2h-2zm0 1h2v2h-2zm1 -11h2v2h-2zm0 2h2v2h-2zm0 1h2v2h-2zm0 5h2v2h-2zm0 4h2v2h-2zm1 -12h2v2h-2zm0 3h2v2h-2zm0 1h2v2h-2zm0 5h2v2h-2zm0 1h2v2h-2zm1 -8h2v2h-2zm0 3h2v2h-2zm0 1h2v2h-2zm0 1h2v2h-2zm0 4h2v2h-2zm0 1h2v2h-2zm1 -7h2v2h-2zm0 1h2v2h-2zm0 1h2v2h-2zm0 1h2v2h-2zm0 2h2v2h-2zm1 -8h2v2h-2zm0 2h2v2h-2zm0 1h2v2h-2zm0 4h2v2h-2zm0 1h2v2h-2zm1 -8h2v2h-2zm0 1h2v2h-2zm0 2h2v2h-2zm0 5h2v2h-2zm0 3h2v2h-2zm1 -7h2v2h-2zm0 1h2v2h-2zm0 3h2v2h-2zm1 -9h2v2h-2zm0 7h2v2h-2zm0 2h2v2h-2zm0 2h2v2h-2zm0 2h2v2h-2zm1 -10h2v2h-2zm0 2h2v2h-2zm0 3h2v2h-2zm0 1h2v2h-2zm0 2h2v2h-2zm0 1h2v2h-2zm1 -8h2v2h-2zm0 2h2v2h-2zm0 2h2v2h-2zm0 1h2v2h-2zm0 1h2v2h-2zm0 6h2v2h-2zm1 -10h2v2h-2zm0 1h2v2h-2zm0 1h2v2h-2zm0 3h2v2h-2zm0 2h2v2h-2zm1 -9h2v2h-2zm0 2h2v2h-2zm0 3h2v2h-2zm0 6h2v2h-2zm0 4h2v2h-2zm1 -14h2v2h-2zm0 6h2v2h-2zm0 1h2v2h-2zm0 1h2v2h-2zm0 1h2v2h-2zm1 -6h2v2h-2zm0 3h2v2h-2zm0 2h2v2h-2zm0 2h2v2h-2zm1 -9h2v2h-2zm0 1h2v2h-2zm0 1h2v2h-2zm0 1h2v2h-2zm0 2h2v2h-2zm1 -5h2v2h-2zm0 3h2v2h-2zm0 3h2v2h-2zm0 1h2v2h-2zm0 2h2v2h-2zm1 -10h2v2h-2zm0 8h2v2h-2zm0 6h2v2h-2zm1 -7h2v2h-2zm0 2h2v2h-2zm0 1h2v2h-2zm0 4h2v2h-2zm0 1h2v2h-2zm1 -14h2v2h-2zm0 6h2v2h-2zm0 4h2v2h-2zm0 3h2v2h-2zm1 -9h2v2h-2zm0 3h2v2h-2zm0 6h2v2h-2zm0 1h2v2h-2zm1 -10h2v2h-2zm0 1h2v2h-2zm0 1h2v2h-2zm0 1h2v2h-2zm0 1h2v2h-2zm0 1h2v2h-2zm1 -3h2v2h-2zm0 1h2v2h-2zm0 1h2v2h-2zm0 1h2v2h-2zm0 1h2v2h-2zm0 3h2v2h-2zm1 -8h2v2h-2zm0 2h2v2h-2zm0 3h2v2h-2zm1 -6h2v2h-2zm0 1h2v2h-2zm0 1h2v2h-2zm0 2h2v2h-2zm0 2h2v2h-2zm1 -3h2v2h-2zm0 1h2v2h-2zm0 3h2v2h-2zm0 2h2v2h-2zm0 1h2v2h-2zm1 -11h2v2h-2zm0 5h2v2h-2zm0 1h2v2h-2zm0 1h2v2h-2zm0 4h2v2h-2zm1 -7h2v2h-2zm0 1h2v2h-2zm0 1h2v2h-2zm0 3h2v2h-2zm0 2h2v2h-2zm0 3h2v2h-2zm1 -13h2v2h-2zm0 2h2v2h-2zm0 1h2v2h-2zm0 3h2v2h-2zm0 1h2v2h-2zm1 -6h2v2h-2zm0 2h2v2h-2zm0 7h2v2h-2zm0 1h2v2h-2zm0 4h2v2h-2zm1 -14h2v2h-2zm0 4h2v2h-2zm0 6h2v2h-2zm0 1h2v2h-2zm1 -6h2v2h-2zm0 2h2v2h-2zm0 2h2v2h-2zm0 2h2v2h-2zm0 1h2v2h-2zm0 1h2v2h-2zm1 -9h2v2h-2zm0 1h2v2h-2zm0 1h2v2h-2zm0 8h2v2h-2zm1 -15h2v2h-2zm0 2h2v2h-2zm0 3h2v2h-2zm0 9h2v2h-2zm0 3h2v2h-2zm1 -18h2v2h-2zm0 7h2v2h-2zm0 1h2v2h-2zm0 6h2v2h-2zm0 1h2v2h-2zm1 -8h2v2h-2zm0 2h2v2h-2zm0 4h2v2h-2zm0 1h2v2h-2zm1 -7h2v2h-2zm0 2h2v2h-2zm0 3h2v2h-2zm0 6h2v2h-2zm1 -16h2v2h-2zm0 2h2v2h-2zm0 2h2v2h-2zm0 1h2v2h-2zm0 6h2v2h-2zm1 -3h2v2h-2zm0 3h2v2h-2zm0 2h2v2h-2zm0 1h2v2h-2zm0 1h2v2h-2zm1 -12h2v2h-2zm0 4h2v2h-2zm0 6h2v2h-2zm0 1h2v2h-2zm0 2h2v2h-2zm1 -12h2v2h-2zm0 1h2v2h-2zm0 2h2v2h-2zm0 2h2v2h-2zm0 2h2v2h-2zm0 4h2v2h-2zm1 -7h2v2h-2zm0 3h2v2h-2zm0 2h2v2h-2zm0 1h2v2h-2zm1 -8h2v2h-2zm0 1h2v2h-2zm0 1h2v2h-2zm0 3h2v2h-2zm0 5h2v2h-2zm1 -10h2v2h-2zm0 2h2v2h-2zm0 2h2v2h-2zm0 1h2v2h-2zm0 3h2v2h-2zm1 -10h2v2h-2zm0 2h2v2h-2zm0 3h2v2h-2zm0 1h2v2h-2zm0 2h2v2h-2zm1 -5h2v2h-2zm0 2h2v2h-2zm0 1h2v2h-2zm0 2h2v2h-2zm0 2h2v2h-2zm1 -8h2v2h-2zm0 2h2v2h-2zm0 2h2v2h-2zm0 3h2v2h-2zm0 2h2v2h-2zm1 -5h2v2h-2zm0 1h2v2h-2zm0 3h2v2h-2zm0 1h2v2h-2zm0 5h2v2h-2zm1 -10h2v2h-2zm0 5h2v2h-2zm0 2h2v2h-2zm0 3h2v2h-2zm1 -10h2v2h-2zm0 4h2v2h-2zm0 3h2v2h-2zm0 2h2v2h-2zm0 1h2v2h-2zm1 -7h2v2h-2zm0 2h2v2h-2zm0 1h2v2h-2zm0 3h2v2h-2zm0 5h2v2h-2zm1 -14h2v2h-2zm0 1h2v2h-2zm0 1h2v2h-2zm0 4h2v2h-2zm0 1h2v2h-2zm1 -6h2v2h-2zm0 3h2v2h-2zm0 2h2v2h-2zm0 1h2v2h-2zm0 1h2v2h-2zm1 -6h2v2h-2zm0 5h2v2h-2zm0 1h2v2h-2zm0 1h2v2h-2zm1 -12h2v2h-2zm0 6h2v2h-2zm0 2h2v2h-2zm0 2h2v2h-2zm0 3h2v2h-2zm1 -12h2v2h-2zm0 7h2v2h-2zm0 1h2v2h-2zm0 1h2v2h-2zm0 2h2v2h-2zm0 3h2v2h-2zm1 -12h2v2h-2zm0 4h2v2h-2zm0 1h2v2h-2zm0 3h2v2h-2zm1 -4h2v2h-2zm0 3h2v2h-2zm0 3h2v2h-2zm0 2h2v2h-2zm0 5h2v2h-2zm1 -15h2v2h-2zm0 5h2v2h-2zm0 6h2v2h-2zm0 3h2v2h-2zm0 2h2v2h-2zm1 -17h2v2h-2zm0 6h2v2h-2zm0 1h2v2h-2zm0 2h2v2h-2zm0 1h2v2h-2zm1 -8h2v2h-2zm0 3h2v2h-2zm0 3h2v2h-2zm0 1h2v2h-2zm0 5h2v2h-2zm1 -14h2v2h-2zm0 4h2v2h-2zm0 3h2v2h-2zm0 2h2v2h-2zm0 1h2v2h-2zm0 1h2v2h-2zm1 -13h2v2h-2zm0 2h2v2h-2zm0 2h2v2h-2zm0 2h2v2h-2zm0 6h2v2h-2zm1 -7h2v2h-2zm0 4h2v2h-2zm0 1h2v2h-2zm0 5h2v2h-2zm1 -11h2v2h-2zm0 3h2v2h-2zm0 4h2v2h-2zm0 4h2v2h-2zm0 2h2v2h-2zm1 -13h2v2h-2zm0 1h2v2h-2zm0 9h2v2h-2zm0 3h2v2h-2zm0 3h2v2h-2zm1 -23h2v2h-2zm0 15h2v2h-2zm0 1h2v2h-2zm0 2h2v2h-2zm0 2h2v2h-2zm1 -13h2v2h-2zm0 3h2v2h-2zm0 1h2v2h-2zm0 3h2v2h-2zm0 5h2v2h-2zm1 -8h2v2h-2zm0 1h2v2h-2zm0 3h2v2h-2zm0 2h2v2h-2zm1 -11h2v2h-2zm0 5h2v2h-2zm0 3h2v2h-2zm0 4h2v2h-2zm0 5h2v2h-2zm0 4h2v2h-2zm1 -14h2v2h-2zm0 3h2v2h-2zm0 3h2v2h-2zm0 1h2v2h-2zm0 2h2v2h-2zm1 -10h2v2h-2zm0 5h2v2h-2zm0 4h2v2h-2zm0 1h2v2h-2zm1 -8h2v2h-2zm0 1h2v2h-2zm0 2h2v2h-2zm0 3h2v2h-2zm0 1h2v2h-2zm0 1h2v2h-2zm1 -9h2v2h-2zm0 1h2v2h-2zm0 4h2v2h-2zm0 4h2v2h-2zm0 7h2v2h-2zm1 -13h2v2h-2zm0 2h2v2h-2zm0 9h2v2h-2zm1 -14h2v2h-2zm0 4h2v2h-2zm0 1h2v2h-2zm0 1h2v2h-2zm0 4h2v2h-2zm1 -7h2v2h-2zm0 1h2v2h-2zm0 1h2v2h-2zm0 1h2v2h-2zm0 1h2v2h-2zm1 -1h2v2h-2zm0 4h2v2h-2zm0 4h2v2h-2zm1 -14h2v2h-2zm0 4h2v2h-2zm0 6h2v2h-2zm0 2h2v2h-2zm0 3h2v2h-2zm1 -15h2v2h-2zm0 3h2v2h-2zm0 4h2v2h-2zm0 3h2v2h-2zm0 1h2v2h-2zm0 1h2v2h-2zm1 -9h2v2h-2zm0 2h2v2h-2zm0 6h2v2h-2zm0 1h2v2h-2zm0 5h2v2h-2zm1 -16h2v2h-2zm0 5h2v2h-2zm0 4h2v2h-2zm0 2h2v2h-2zm0 1h2v2h-2zm0 4h2v2h-2zm1 -19h2v2h-2zm0 6h2v2h-2zm0 6h2v2h-2zm0 4h2v2h-2zm0 4h2v2h-2zm1 -20h2v2h-2zm0 7h2v2h-2zm0 2h2v2h-2zm0 7h2v2h-2zm0 1h2v2h-2zm1 -4h2v2h-2zm0 1h2v2h-2zm0 2h2v2h-2zm0 2h2v2h-2zm1 -14h2v2h-2zm0 7h2v2h-2zm0 1h2v2h-2zm0 8h2v2h-2zm1 -16h2v2h-2zm0 4h2v2h-2zm0 11h2v2h-2zm0 4h2v2h-2zm1 -17h2v2h-2zm0 3h2v2h-2zm0 1h2v2h-2zm0 4h2v2h-2zm0 4h2v2h-2zm0 2h2v2h-2zm1 -15h2v2h-2zm0 1h2v2h-2zm0 8h2v2h-2zm0 3h2v2h-2zm0 3h2v2h-2zm0 2h2v2h-2zm1 -10h2v2h-2zm0 1h2v2h-2zm0 2h2v2h-2zm0 4h2v2h-2zm0 2h2v2h-2zm1 -12h2v2h-2zm0 2h2v2h-2zm0 2h2v2h-2zm0 3h2v2h-2zm0 1h2v2h-2zm1 -4h2v2h-2zm0 1h2v2h-2zm0 1h2v2h-2zm0 2h2v2h-2zm0 1h2v2h-2zm0 4h2v2h-2zm1 -11h2v2h-2zm0 1h2v2h-2zm0 1h2v2h-2zm0 4h2v2h-2zm0 2h2v2h-2zm1 -10h2v2h-2zm0 5h2v2h-2zm0 2h2v2h-2zm0 5h2v2h-2zm0 2h2v2h-2zm1 -16h2v2h-2zm0 4h2v2h-2zm0 4h2v2h-2zm0 5h2v2h-2zm0 10h2v2h-2zm1 -19h2v2h-2zm0 3h2v2h-2zm0 4h2v2h-2zm0 3h2v2h-2zm1 -8h2v2h-2zm0 3h2v2h-2zm0 1h2v2h-2zm0 5h2v2h-2zm0 3h2v2h-2zm0 6h2v2h-2zm1 -21h2v2h-2zm0 5h2v2h-2zm0 1h2v2h-2zm0 2h2v2h-2zm0 1h2v2h-2zm0 1h2v2h-2zm1 -6h2v2h-2zm0 1h2v2h-2zm0 1h2v2h-2zm0 2h2v2h-2zm0 13h2v2h-2zm1 -17h2v2h-2zm0 3h2v2h-2zm0 1h2v2h-2zm0 4h2v2h-2zm1 -12h2v2h-2zm0 3h2v2h-2zm0 4h2v2h-2zm0 2h2v2h-2zm0 1h2v2h-2zm0 1h2v2h-2zm1 -8h2v2h-2zm0 2h2v2h-2zm0 1h2v2h-2zm0 3h2v2h-2zm0 2h2v2h-2zm1 -11h2v2h-2zm0 2h2v2h-2zm0 3h2v2h-2zm0 4h2v2h-2zm0 4h2v2h-2zm0 3h2v2h-2zm1 -13h2v2h-2zm0 1h2v2h-2zm0 3h2v2h-2zm0 4h2v2h-2zm0 1h2v2h-2zm0 9h2v2h-2zm1 -21h2v2h-2zm0 3h2v2h-2zm0 1h2v2h-2zm0 4h2v2h-2zm0 5h2v2h-2zm1 -8h2v2h-2zm0 2h2v2h-2zm0 4h2v2h-2zm0 1h2v2h-2zm0 2h2v2h-2zm0 2h2v2h-2zm1 -12h2v2h-2zm0 1h2v2h-2zm0 2h2v2h-2zm0 1h2v2h-2zm0 1h2v2h-2zm0 9h2v2h-2zm1 -17h2v2h-2zm0 2h2v2h-2zm0 6h2v2h-2zm0 2h2v2h-2zm0 7h2v2h-2zm1 -13h2v2h-2zm0 2h2v2h-2zm0 4h2v2h-2zm0 1h2v2h-2zm0 10h2v2h-2zm1 -17h2v2h-2zm0 1h2v2h-2zm0 1h2v2h-2zm0 4h2v2h-2zm0 8h2v2h-2zm1 -16h2v2h-2zm0 7h2v2h-2zm0 1h2v2h-2zm0 4h2v2h-2zm1 -7h2v2h-2zm0 1h2v2h-2zm0 1h2v2h-2zm0 5h2v2h-2zm0 6h2v2h-2zm1 -16h2v2h-2zm0 1h2v2h-2zm0 4h2v2h-2zm0 1h2v2h-2zm0 1h2v2h-2zm0 3h2v2h-2zm1 -9h2v2h-2zm0 7h2v2h-2zm0 2h2v2h-2zm1 -13h2v2h-2zm0 10h2v2h-2zm0 2h2v2h-2zm0 3h2v2h-2zm0 1h2v2h-2zm1 -10h2v2h-2zm0 4h2v2h-2zm0 5h2v2h-2zm0 2h2v2h-2zm0 5h2v2h-2zm1 -15h2v2h-2zm0 2h2v2h-2zm0 4h2v2h-2zm0 5h2v2h-2zm0 2h2v2h-2zm1 -18h2v2h-2zm0 10h2v2h-2zm0 1h2v2h-2zm0 5h2v2h-2zm0 1h2v2h-2zm0 1h2v2h-2zm1 -11h2v2h-2zm0 4h2v2h-2zm0 5h2v2h-2zm1 -7h2v2h-2zm0 4h2v2h-2zm0 1h2v2h-2zm0 4h2v2h-2zm1 -10h2v2h-2zm0 4h2v2h-2zm0 1h2v2h-2zm0 1h2v2h-2zm0 7h2v2h-2zm1 -16h2v2h-2zm0 6h2v2h-2zm0 2h2v2h-2zm0 2h2v2h-2zm0 1h2v2h-2zm1 -14h2v2h-2zm0 3h2v2h-2zm0 6h2v2h-2zm0 2h2v2h-2zm1 -9h2v2h-2zm0 4h2v2h-2zm0 2h2v2h-2zm0 3h2v2h-2zm0 4h2v2h-2zm0 4h2v2h-2zm1 -9h2v2h-2zm0 1h2v2h-2zm0 1h2v2h-2zm0 3h2v2h-2zm0 2h2v2h-2zm0 1h2v2h-2zm1 -7h2v2h-2zm0 4h2v2h-2zm0 2h2v2h-2zm0 1h2v2h-2zm1 -12h2v2h-2zm0 4h2v2h-2zm0 3h2v2h-2zm0 2h2v2h-2zm0 3h2v2h-2zm1 -9h2v2h-2zm0 1h2v2h-2zm0 5h2v2h-2zm0 10h2v2h-2zm0 1h2v2h-2zm1 -23h2v2h-2zm0 3h2v2h-2zm0 6h2v2h-2zm0 5h2v2h-2zm1 -13h2v2h-2zm0 6h2v2h-2zm0 2h2v2h-2zm0 4h2v2h-2zm0 2h2v2h-2zm1 -16h2v2h-2zm0 4h2v2h-2zm0 1h2v2h-2zm0 9h2v2h-2zm0 2h2v2h-2zm0 1h2v2h-2zm1 -10h2v2h-2zm0 3h2v2h-2zm0 3h2v2h-2zm0 5h2v2h-2zm0 2h2v2h-2zm1 -15h2v2h-2zm0 7h2v2h-2zm0 1h2v2h-2zm0 2h2v2h-2zm0 6h2v2h-2zm1 -14h2v2h-2zm0 3h2v2h-2zm0 1h2v2h-2zm0 2h2v2h-2zm0 2h2v2h-2zm0 4h2v2h-2zm1 -14h2v2h-2zm0 2h2v2h-2zm0 3h2v2h-2zm0 3h2v2h-2zm0 2h2v2h-2zm1 -10h2v2h-2zm0 2h2v2h-2zm0 1h2v2h-2zm0 1h2v2h-2zm0 4h2v2h-2zm0 1h2v2h-2zm1 -4h2v2h-2zm0 2h2v2h-2zm0 5h2v2h-2zm0 3h2v2h-2zm1 -16h2v2h-2zm0 8h2v2h-2zm0 4h2v2h-2zm0 1h2v2h-2zm0 2h2v2h-2zm1 -12h2v2h-2zm0 1h2v2h-2zm0 1h2v2h-2zm0 1h2v2h-2zm0 1h2v2h-2zm0 10h2v2h-2zm1 -11h2v2h-2zm0 1h2v2h-2zm0 8h2v2h-2zm0 3h2v2h-2zm0 7h2v2h-2zm1 -23h2v2h-2zm0 3h2v2h-2zm0 1h2v2h-2zm0 7h2v2h-2zm0 8h2v2h-2zm1 -18h2v2h-2zm0 4h2v2h-2zm0 2h2v2h-2zm0 2h2v2h-2zm0 2h2v2h-2zm0 3h2v2h-2zm1 -17h2v2h-2zm0 6h2v2h-2zm0 7h2v2h-2zm0 3h2v2h-2zm0 3h2v2h-2zm0 5h2v2h-2zm1 -21h2v2h-2zm0 8h2v2h-2zm0 5h2v2h-2zm0 1h2v2h-2zm0 3h2v2h-2zm1 -11h2v2h-2zm0 1h2v2h-2zm0 7h2v2h-2zm0 2h2v2h-2zm0 5h2v2h-2zm1 -18h2v2h-2zm0 2h2v2h-2zm0 3h2v2h-2zm0 2h2v2h-2zm0 5h2v2h-2zm1 -8h2v2h-2zm0 2h2v2h-2zm0 3h2v2h-2zm0 2h2v2h-2zm1 -6h2v2h-2zm0 2h2v2h-2zm0 3h2v2h-2zm0 1h2v2h-2zm1 -7h2v2h-2zm0 2h2v2h-2zm0 1h2v2h-2zm0 1h2v2h-2zm0 4h2v2h-2zm0 2h2v2h-2zm1 -17h2v2h-2zm0 2h2v2h-2zm0 9h2v2h-2zm0 3h2v2h-2zm0 1h2v2h-2zm1 -8h2v2h-2zm0 2h2v2h-2zm0 1h2v2h-2zm0 2h2v2h-2zm0 1h2v2h-2zm0 1h2v2h-2zm1 -10h2v2h-2zm0 1h2v2h-2zm0 5h2v2h-2zm0 1h2v2h-2zm1 -6h2v2h-2zm0 4h2v2h-2zm0 4h2v2h-2zm0 1h2v2h-2zm1 -5h2v2h-2zm0 1h2v2h-2zm0 3h2v2h-2zm0 11h2v2h-2zm0 1h2v2h-2zm1 -23h2v2h-2zm0 9h2v2h-2zm0 4h2v2h-2zm0 1h2v2h-2zm0 2h2v2h-2zm1 -12h2v2h-2zm0 2h2v2h-2zm0 4h2v2h-2zm0 2h2v2h-2zm1 -12h2v2h-2zm0 5h2v2h-2zm0 2h2v2h-2zm0 6h2v2h-2zm0 2h2v2h-2zm0 4h2v2h-2zm1 -12h2v2h-2zm0 6h2v2h-2zm0 1h2v2h-2zm0 4h2v2h-2zm0 2h2v2h-2zm1 -14h2v2h-2zm0 10h2v2h-2zm0 2h2v2h-2zm0 2h2v2h-2zm1 -12h2v2h-2zm0 2h2v2h-2zm0 7h2v2h-2zm0 6h2v2h-2zm0 8h2v2h-2zm1 -22h2v2h-2zm0 3h2v2h-2zm0 1h2v2h-2zm0 1h2v2h-2zm0 3h2v2h-2zm0 10h2v2h-2zm1 -14h2v2h-2zm0 3h2v2h-2zm0 2h2v2h-2zm0 1h2v2h-2zm1 -11h2v2h-2zm0 2h2v2h-2zm0 5h2v2h-2zm0 1h2v2h-2zm0 4h2v2h-2zm0 4h2v2h-2zm1 -15h2v2h-2zm0 3h2v2h-2zm0 4h2v2h-2zm0 2h2v2h-2zm0 2h2v2h-2zm1 -11h2v2h-2zm0 4h2v2h-2zm0 4h2v2h-2zm0 11h2v2h-2zm0 1h2v2h-2zm1 -16h2v2h-2zm0 2h2v2h-2zm0 1h2v2h-2zm0 1h2v2h-2zm0 2h2v2h-2zm0 4h2v2h-2zm1 -19h2v2h-2zm0 15h2v2h-2zm0 1h2v2h-2zm0 4h2v2h-2zm0 1h2v2h-2zm0 2h2v2h-2zm1 -16h2v2h-2zm0 2h2v2h-2zm0 2h2v2h-2zm0 3h2v2h-2zm0 2h2v2h-2zm1 -11h2v2h-2zm0 5h2v2h-2zm0 2h2v2h-2zm0 8h2v2h-2zm0 1h2v2h-2zm0 4h2v2h-2zm1 -24h2v2h-2zm0 1h2v2h-2zm0 6h2v2h-2zm0 8h2v2h-2zm0 4h2v2h-2zm1 -16h2v2h-2zm0 6h2v2h-2zm0 2h2v2h-2zm0 2h2v2h-2zm1 -11h2v2h-2zm0 3h2v2h-2zm0 4h2v2h-2zm0 8h2v2h-2zm0 1h2v2h-2zm0 1h2v2h-2zm1 -12h2v2h-2zm0 1h2v2h-2zm0 5h2v2h-2zm0 1h2v2h-2zm0 1h2v2h-2zm0 6h2v2h-2zm1 -10h2v2h-2zm0 3h2v2h-2zm0 13h2v2h-2zm0 3h2v2h-2zm0 6h2v2h-2zm1 -25h2v2h-2zm0 2h2v2h-2zm0 2h2v2h-2zm0 2h2v2h-2zm0 1h2v2h-2zm0 10h2v2h-2zm1 -21h2v2h-2zm0 7h2v2h-2zm0 2h2v2h-2zm0 1h2v2h-2zm0 4h2v2h-2zm1 -17h2v2h-2zm0 5h2v2h-2zm0 3h2v2h-2zm0 4h2v2h-2zm0 2h2v2h-2zm1 -7h2v2h-2zm0 1h2v2h-2zm0 3h2v2h-2zm0 2h2v2h-2zm0 2h2v2h-2zm1 -16h2v2h-2zm0 11h2v2h-2zm0 3h2v2h-2zm0 5h2v2h-2zm1 -14h2v2h-2zm0 6h2v2h-2zm0 1h2v2h-2zm0 3h2v2h-2zm0 6h2v2h-2zm1 -16h2v2h-2zm0 1h2v2h-2zm0 2h2v2h-2zm0 1h2v2h-2zm0 4h2v2h-2zm0 5h2v2h-2zm1 -10h2v2h-2zm0 4h2v2h-2zm0 4h2v2h-2zm0 2h2v2h-2zm0 1h2v2h-2zm1 -10h2v2h-2zm0 1h2v2h-2zm0 4h2v2h-2zm0 7h2v2h-2zm0 8h2v2h-2zm1 -23h2v2h-2zm0 6h2v2h-2zm0 2h2v2h-2zm0 1h2v2h-2zm0 1h2v2h-2zm0 7h2v2h-2zm1 -15h2v2h-2zm0 2h2v2h-2zm0 2h2v2h-2zm0 2h2v2h-2zm0 2h2v2h-2zm0 13h2v2h-2zm1 -19h2v2h-2zm0 4h2v2h-2zm0 9h2v2h-2zm0 4h2v2h-2zm1 -24h2v2h-2zm0 3h2v2h-2zm0 2h2v2h-2zm0 4h2v2h-2zm0 6h2v2h-2zm0 1h2v2h-2zm1 -14h2v2h-2zm0 4h2v2h-2zm0 1h2v2h-2zm0 3h2v2h-2zm0 7h2v2h-2zm0 1h2v2h-2zm1 -10h2v2h-2zm0 2h2v2h-2zm0 1h2v2h-2zm0 2h2v2h-2zm0 1h2v2h-2zm0 10h2v2h-2zm1 -16h2v2h-2zm0 1h2v2h-2zm0 2h2v2h-2zm0 1h2v2h-2zm0 9h2v2h-2zm1 -15h2v2h-2zm0 1h2v2h-2zm0 4h2v2h-2zm0 2h2v2h-2zm0 2h2v2h-2zm0 3h2v2h-2zm1 -12h2v2h-2zm0 3h2v2h-2zm0 2h2v2h-2zm0 4h2v2h-2zm0 5h2v2h-2zm1 -15h2v2h-2zm0 1h2v2h-2zm0 2h2v2h-2zm0 8h2v2h-2zm0 8h2v2h-2zm1 -13h2v2h-2zm0 2h2v2h-2zm0 5h2v2h-2zm0 7h2v2h-2zm0 3h2v2h-2zm1 -22h2v2h-2zm0 2h2v2h-2zm0 6h2v2h-2zm0 1h2v2h-2zm0 6h2v2h-2zm0 3h2v2h-2zm1 -13h2v2h-2zm0 2h2v2h-2zm0 7h2v2h-2zm0 1h2v2h-2zm1 -16h2v2h-2zm0 3h2v2h-2zm0 1h2v2h-2zm0 7h2v2h-2zm0 1h2v2h-2zm0 5h2v2h-2zm1 -15h2v2h-2zm0 2h2v2h-2zm0 3h2v2h-2zm0 16h2v2h-2zm0 4h2v2h-2zm1 -24h2v2h-2zm0 7h2v2h-2zm0 1h2v2h-2zm0 3h2v2h-2zm0 1h2v2h-2zm1 -7h2v2h-2zm0 2h2v2h-2zm0 5h2v2h-2zm0 2h2v2h-2zm0 6h2v2h-2zm1 -18h2v2h-2zm0 3h2v2h-2zm0 1h2v2h-2zm0 2h2v2h-2zm0 9h2v2h-2zm0 4h2v2h-2zm1 -27h2v2h-2zm0 3h2v2h-2zm0 6h2v2h-2zm0 14h2v2h-2zm0 6h2v2h-2zm1 -32h2v2h-2zm0 12h2v2h-2zm0 4h2v2h-2zm0 5h2v2h-2zm0 1h2v2h-2zm0 11h2v2h-2zm1 -31h2v2h-2zm0 17h2v2h-2zm0 2h2v2h-2zm0 2h2v2h-2zm1 -6h2v2h-2zm0 4h2v2h-2zm0 3h2v2h-2zm0 4h2v2h-2zm0 1h2v2h-2zm1 -25h2v2h-2zm0 4h2v2h-2zm0 2h2v2h-2zm0 2h2v2h-2zm0 8h2v2h-2zm0 2h2v2h-2zm1 -14h2v2h-2zm0 5h2v2h-2zm0 1h2v2h-2zm0 7h2v2h-2zm0 4h2v2h-2zm1 -13h2v2h-2zm0 2h2v2h-2zm0 5h2v2h-2zm0 6h2v2h-2zm1 -11h2v2h-2zm0 4h2v2h-2zm0 2h2v2h-2zm0 5h2v2h-2zm0 2h2v2h-2zm1 -13h2v2h-2zm0 1h2v2h-2zm0 2h2v2h-2zm0 12h2v2h-2zm0 2h2v2h-2zm1 -12h2v2h-2zm0 3h2v2h-2zm0 3h2v2h-2zm0 5h2v2h-2zm1 -27h2v2h-2zm0 13h2v2h-2zm0 3h2v2h-2zm0 2h2v2h-2zm0 18h2v2h-2zm1 -27h2v2h-2zm0 4h2v2h-2zm0 5h2v2h-2zm0 2h2v2h-2zm1 -16h2v2h-2zm0 6h2v2h-2zm0 1h2v2h-2zm0 2h2v2h-2zm0 2h2v2h-2zm1 -6h2v2h-2zm0 4h2v2h-2zm0 3h2v2h-2zm0 9h2v2h-2zm0 1h2v2h-2zm1 -10h2v2h-2zm0 6h2v2h-2zm0 3h2v2h-2zm0 2h2v2h-2zm0 1h2v2h-2zm0 2h2v2h-2zm1 -25h2v2h-2zm0 5h2v2h-2zm0 4h2v2h-2zm0 4h2v2h-2zm0 10h2v2h-2zm1 -15h2v2h-2zm0 4h2v2h-2zm0 1h2v2h-2zm0 2h2v2h-2zm0 1h2v2h-2zm0 4h2v2h-2zm1 -13h2v2h-2zm0 1h2v2h-2zm0 11h2v2h-2zm0 6h2v2h-2zm0 1h2v2h-2zm0 3h2v2h-2zm1 -23h2v2h-2zm0 6h2v2h-2zm0 1h2v2h-2zm0 13h2v2h-2zm0 2h2v2h-2zm1 -18h2v2h-2zm0 1h2v2h-2zm0 1h2v2h-2zm0 7h2v2h-2zm0 16h2v2h-2zm1 -22h2v2h-2zm0 4h2v2h-2zm0 3h2v2h-2zm0 1h2v2h-2zm0 2h2v2h-2zm0 6h2v2h-2zm1 -24h2v2h-2zm0 7h2v2h-2zm0 5h2v2h-2zm1 -9h2v2h-2zm0 3h2v2h-2zm0 7h2v2h-2zm0 1h2v2h-2zm0 4h2v2h-2zm1 -13h2v2h-2zm0 3h2v2h-2zm0 2h2v2h-2zm0 4h2v2h-2zm0 1h2v2h-2zm0 5h2v2h-2zm1 -12h2v2h-2zm0 6h2v2h-2zm0 2h2v2h-2zm0 2h2v2h-2zm0 5h2v2h-2zm1 -21h2v2h-2zm0 9h2v2h-2zm0 2h2v2h-2zm0 1h2v2h-2zm0 2h2v2h-2zm0 5h2v2h-2zm1 -18h2v2h-2zm0 3h2v2h-2zm0 3h2v2h-2zm0 1h2v2h-2zm0 6h2v2h-2zm1 -7h2v2h-2zm0 11h2v2h-2zm0 1h2v2h-2zm0 1h2v2h-2zm0 7h2v2h-2zm1 -23h2v2h-2zm0 3h2v2h-2zm0 1h2v2h-2zm0 7h2v2h-2zm0 1h2v2h-2zm0 3h2v2h-2zm1 -22h2v2h-2zm0 9h2v2h-2zm0 2h2v2h-2zm0 8h2v2h-2zm0 3h2v2h-2zm0 2h2v2h-2zm1 -17h2v2h-2zm0 6h2v2h-2zm0 2h2v2h-2zm0 2h2v2h-2zm1 -14h2v2h-2zm0 4h2v2h-2zm0 8h2v2h-2zm0 6h2v2h-2zm0 2h2v2h-2zm1 -17h2v2h-2zm0 2h2v2h-2zm0 1h2v2h-2zm0 2h2v2h-2zm0 8h2v2h-2zm1 -20h2v2h-2zm0 13h2v2h-2zm0 1h2v2h-2zm0 7h2v2h-2zm0 6h2v2h-2zm1 -19h2v2h-2zm0 2h2v2h-2zm0 2h2v2h-2zm0 2h2v2h-2zm0 4h2v2h-2zm0 6h2v2h-2zm1 -16h2v2h-2zm0 4h2v2h-2zm0 1h2v2h-2zm0 4h2v2h-2zm0 4h2v2h-2zm0 5h2v2h-2zm1 -12h2v2h-2zm0 1h2v2h-2zm0 5h2v2h-2zm0 7h2v2h-2zm1 -13h2v2h-2zm0 8h2v2h-2zm0 1h2v2h-2zm0 5h2v2h-2zm1 -15h2v2h-2zm0 1h2v2h-2zm0 6h2v2h-2zm0 2h2v2h-2zm0 13h2v2h-2zm1 -18h2v2h-2zm0 1h2v2h-2zm0 5h2v2h-2zm0 2h2v2h-2zm0 4h2v2h-2zm1 -20h2v2h-2zm0 3h2v2h-2zm0 1h2v2h-2zm0 1h2v2h-2zm0 10h2v2h-2zm0 14h2v2h-2zm1 -22h2v2h-2zm0 5h2v2h-2zm0 2h2v2h-2zm0 2h2v2h-2zm0 19h2v2h-2zm1 -32h2v2h-2zm0 1h2v2h-2zm0 5h2v2h-2zm0 5h2v2h-2zm0 2h2v2h-2zm1 -15h2v2h-2zm0 5h2v2h-2zm0 1h2v2h-2zm0 6h2v2h-2zm0 8h2v2h-2zm0 1h2v2h-2zm1 -28h2v2h-2zm0 4h2v2h-2zm0 12h2v2h-2zm0 2h2v2h-2zm0 10h2v2h-2zm0 1h2v2h-2zm1 -20h2v2h-2zm0 8h2v2h-2zm0 2h2v2h-2zm0 2h2v2h-2zm0 17h2v2h-2zm1 -26h2v2h-2zm0 2h2v2h-2zm0 1h2v2h-2zm0 1h2v2h-2zm0 3h2v2h-2zm0 3h2v2h-2zm1 -7h2v2h-2zm0 1h2v2h-2zm0 4h2v2h-2zm0 1h2v2h-2zm0 3h2v2h-2zm1 -20h2v2h-2zm0 5h2v2h-2zm0 5h2v2h-2zm0 10h2v2h-2zm0 5h2v2h-2zm1 -17h2v2h-2zm0 5h2v2h-2zm0 3h2v2h-2zm0 4h2v2h-2zm0 5h2v2h-2zm1 -15h2v2h-2zm0 2h2v2h-2zm0 1h2v2h-2zm0 1h2v2h-2zm0 14h2v2h-2zm1 -25h2v2h-2zm0 5h2v2h-2zm0 2h2v2h-2zm0 19h2v2h-2zm1 -27h2v2h-2zm0 4h2v2h-2zm0 5h2v2h-2zm0 5h2v2h-2zm0 2h2v2h-2zm0 11h2v2h-2zm1 -15h2v2h-2zm0 3h2v2h-2zm0 4h2v2h-2zm0 1h2v2h-2zm0 7h2v2h-2zm1 -23h2v2h-2zm0 1h2v2h-2zm0 4h2v2h-2zm0 4h2v2h-2zm0 4h2v2h-2zm1 -14h2v2h-2zm0 7h2v2h-2zm0 2h2v2h-2zm0 2h2v2h-2zm0 2h2v2h-2zm0 19h2v2h-2zm1 -24h2v2h-2zm0 7h2v2h-2zm0 6h2v2h-2zm0 4h2v2h-2zm1 -23h2v2h-2zm0 1h2v2h-2zm0 3h2v2h-2zm0 7h2v2h-2zm0 2h2v2h-2zm1 -12h2v2h-2zm0 5h2v2h-2zm0 5h2v2h-2zm0 1h2v2h-2zm0 2h2v2h-2zm1 -21h2v2h-2zm0 11h2v2h-2zm0 2h2v2h-2zm0 5h2v2h-2zm0 1h2v2h-2zm0 3h2v2h-2zm1 -24h2v2h-2zm0 4h2v2h-2zm0 11h2v2h-2zm1 -7h2v2h-2zm0 4h2v2h-2zm0 1h2v2h-2zm0 2h2v2h-2zm0 8h2v2h-2zm0 1h2v2h-2zm1 -11h2v2h-2zm0 2h2v2h-2zm0 1h2v2h-2zm0 1h2v2h-2zm0 4h2v2h-2zm0 16h2v2h-2zm1 -25h2v2h-2zm0 4h2v2h-2zm0 4h2v2h-2zm0 6h2v2h-2zm1 -25h2v2h-2zm0 4h2v2h-2zm0 12h2v2h-2zm0 1h2v2h-2zm0 12h2v2h-2zm0 2h2v2h-2zm1 -18h2v2h-2zm0 7h2v2h-2zm0 1h2v2h-2zm0 1h2v2h-2zm0 1h2v2h-2zm0 4h2v2h-2zm1 -15h2v2h-2zm0 2h2v2h-2zm0 1h2v2h-2zm0 3h2v2h-2zm0 8h2v2h-2zm1 -11h2v2h-2zm0 1h2v2h-2zm0 5h2v2h-2zm0 1h2v2h-2zm0 7h2v2h-2zm0 2h2v2h-2zm1 -23h2v2h-2zm0 3h2v2h-2zm0 16h2v2h-2zm0 2h2v2h-2zm0 2h2v2h-2zm0 2h2v2h-2zm1 -25h2v2h-2zm0 10h2v2h-2zm0 5h2v2h-2zm0 6h2v2h-2zm0 4h2v2h-2zm1 -19h2v2h-2zm0 3h2v2h-2zm0 7h2v2h-2zm0 1h2v2h-2zm0 1h2v2h-2zm0 5h2v2h-2zm1 -17h2v2h-2zm0 4h2v2h-2zm0 1h2v2h-2zm0 2h2v2h-2zm0 2h2v2h-2zm0 9h2v2h-2zm1 -19h2v2h-2zm0 1h2v2h-2zm0 4h2v2h-2zm0 12h2v2h-2zm0 2h2v2h-2zm1 -24h2v2h-2zm0 6h2v2h-2zm0 1h2v2h-2zm0 2h2v2h-2zm0 4h2v2h-2zm0 5h2v2h-2zm1 -13h2v2h-2zm0 8h2v2h-2zm0 3h2v2h-2zm0 2h2v2h-2zm0 1h2v2h-2zm1 -18h2v2h-2zm0 5h2v2h-2zm0 5h2v2h-2zm0 3h2v2h-2zm0 1h2v2h-2zm1 -9h2v2h-2zm0 3h2v2h-2zm0 1h2v2h-2zm0 4h2v2h-2zm0 1h2v2h-2zm0 6h2v2h-2zm1 -14h2v2h-2zm0 2h2v2h-2zm0 1h2v2h-2zm0 4h2v2h-2zm0 1h2v2h-2zm0 10h2v2h-2zm1 -21h2v2h-2zm0 13h2v2h-2zm0 2h2v2h-2zm0 8h2v2h-2zm1 -20h2v2h-2zm0 4h2v2h-2zm0 6h2v2h-2zm0 1h2v2h-2zm0 4h2v2h-2zm0 11h2v2h-2zm1 -23h2v2h-2zm0 1h2v2h-2zm0 2h2v2h-2zm0 8h2v2h-2zm0 1h2v2h-2zm0 2h2v2h-2zm1 -13h2v2h-2zm0 3h2v2h-2zm0 2h2v2h-2zm0 1h2v2h-2zm0 1h2v2h-2zm1 -17h2v2h-2zm0 5h2v2h-2zm0 3h2v2h-2zm0 9h2v2h-2zm0 3h2v2h-2zm0 1h2v2h-2zm1 -22h2v2h-2zm0 7h2v2h-2zm0 1h2v2h-2zm0 17h2v2h-2zm0 3h2v2h-2zm1 -13h2v2h-2zm0 1h2v2h-2zm0 6h2v2h-2zm0 2h2v2h-2zm1 -24h2v2h-2zm0 10h2v2h-2zm0 5h2v2h-2zm0 7h2v2h-2zm0 1h2v2h-2zm0 5h2v2h-2zm1 -23h2v2h-2zm0 3h2v2h-2zm0 5h2v2h-2zm0 3h2v2h-2zm0 7h2v2h-2zm1 -13h2v2h-2zm0 4h2v2h-2zm0 4h2v2h-2zm0 6h2v2h-2zm0 9h2v2h-2zm1 -17h2v2h-2zm0 1h2v2h-2zm0 2h2v2h-2zm0 9h2v2h-2zm0 1h2v2h-2zm0 15h2v2h-2zm1 -28h2v2h-2zm0 3h2v2h-2zm0 6h2v2h-2zm1 -23h2v2h-2zm0 9h2v2h-2zm0 5h2v2h-2zm0 9h2v2h-2zm1 -19h2v2h-2zm0 1h2v2h-2zm0 1h2v2h-2zm0 2h2v2h-2zm0 11h2v2h-2zm0 3h2v2h-2zm1 -10h2v2h-2zm0 2h2v2h-2zm0 1h2v2h-2zm0 12h2v2h-2zm0 6h2v2h-2zm1 -32h2v2h-2zm0 8h2v2h-2zm0 3h2v2h-2zm0 8h2v2h-2zm1 -8h2v2h-2zm0 3h2v2h-2zm0 1h2v2h-2zm0 1h2v2h-2zm0 6h2v2h-2zm0 2h2v2h-2zm1 -16h2v2h-2zm0 3h2v2h-2zm0 8h2v2h-2zm0 10h2v2h-2zm0 3h2v2h-2zm0 3h2v2h-2zm1 -23h2v2h-2zm0 6h2v2h-2zm0 4h2v2h-2zm0 5h2v2h-2zm1 -21h2v2h-2zm0 4h2v2h-2zm0 6h2v2h-2zm0 3h2v2h-2zm0 2h2v2h-2zm1 -15h2v2h-2zm0 2h2v2h-2zm0 4h2v2h-2zm0 10h2v2h-2zm0 4h2v2h-2zm0 6h2v2h-2zm1 -27h2v2h-2zm0 2h2v2h-2zm0 13h2v2h-2zm0 2h2v2h-2zm0 3h2v2h-2zm1 -15h2v2h-2zm0 1h2v2h-2zm0 1h2v2h-2zm0 2h2v2h-2zm0 1h2v2h-2zm1 -8h2v2h-2zm0 4h2v2h-2zm0 3h2v2h-2zm0 8h2v2h-2zm0 2h2v2h-2zm1 -16h2v2h-2zm0 8h2v2h-2zm0 9h2v2h-2zm0 4h2v2h-2zm0 10h2v2h-2zm1 -31h2v2h-2zm0 4h2v2h-2zm0 1h2v2h-2zm0 2h2v2h-2zm0 7h2v2h-2zm1 -16h2v2h-2zm0 5h2v2h-2zm0 1h2v2h-2zm0 2h2v2h-2zm0 1h2v2h-2zm0 5h2v2h-2zm1 -14h2v2h-2zm0 1h2v2h-2zm0 1h2v2h-2zm0 10h2v2h-2zm0 4h2v2h-2zm1 -10h2v2h-2zm0 8h2v2h-2zm0 1h2v2h-2zm0 1h2v2h-2zm0 3h2v2h-2zm1 -10h2v2h-2zm0 1h2v2h-2zm0 9h2v2h-2zm1 -15h2v2h-2zm0 1h2v2h-2zm0 1h2v2h-2zm0 7h2v2h-2zm0 2h2v2h-2zm1 -16h2v2h-2zm0 8h2v2h-2zm0 1h2v2h-2zm0 11h2v2h-2zm0 13h2v2h-2zm1 -35h2v2h-2zm0 8h2v2h-2zm0 14h2v2h-2zm0 1h2v2h-2zm0 6h2v2h-2zm1 -16h2v2h-2zm0 5h2v2h-2zm0 1h2v2h-2zm0 5h2v2h-2zm0 2h2v2h-2zm1 -23h2v2h-2zm0 5h2v2h-2zm0 5h2v2h-2zm0 3h2v2h-2zm0 6h2v2h-2zm1 -19h2v2h-2zm0 12h2v2h-2zm0 6h2v2h-2zm0 3h2v2h-2zm0 5h2v2h-2zm1 -22h2v2h-2zm0 5h2v2h-2zm0 6h2v2h-2zm0 5h2v2h-2zm0 3h2v2h-2zm1 -15h2v2h-2zm0 8h2v2h-2zm0 2h2v2h-2zm0 2h2v2h-2zm0 10h2v2h-2zm1 -26h2v2h-2zm0 8h2v2h-2zm0 3h2v2h-2zm0 1h2v2h-2zm0 11h2v2h-2zm0 24h2v2h-2zm1 -49h2v2h-2zm0 4h2v2h-2zm0 4h2v2h-2zm0 5h2v2h-2zm0 5h2v2h-2zm1 -15h2v2h-2zm0 2h2v2h-2zm0 3h2v2h-2zm0 6h2v2h-2zm0 4h2v2h-2zm1 -8h2v2h-2zm0 7h2v2h-2zm0 2h2v2h-2zm0 3h2v2h-2zm0 2h2v2h-2zm1 -23h2v2h-2zm0 3h2v2h-2zm0 2h2v2h-2zm0 5h2v2h-2zm0 3h2v2h-2zm1 -7h2v2h-2zm0 5h2v2h-2zm0 6h2v2h-2zm0 4h2v2h-2zm0 6h2v2h-2zm0 3h2v2h-2zm1 -26h2v2h-2zm0 3h2v2h-2zm0 2h2v2h-2zm0 11h2v2h-2zm0 3h2v2h-2zm1 -12h2v2h-2zm0 2h2v2h-2zm0 3h2v2h-2zm0 10h2v2h-2zm1 -19h2v2h-2zm0 3h2v2h-2zm0 2h2v2h-2zm0 6h2v2h-2zm0 2h2v2h-2zm1 -17h2v2h-2zm0 2h2v2h-2zm0 1h2v2h-2zm0 3h2v2h-2zm0 4h2v2h-2zm1 -9h2v2h-2zm0 12h2v2h-2zm0 4h2v2h-2zm0 6h2v2h-2zm1 -28h2v2h-2zm0 4h2v2h-2zm0 1h2v2h-2zm0 1h2v2h-2zm0 19h2v2h-2zm0 1h2v2h-2zm1 -39h2v2h-2zm0 24h2v2h-2zm0 4h2v2h-2zm0 4h2v2h-2zm0 10h2v2h-2zm0 2h2v2h-2zm1 -38h2v2h-2zm0 20h2v2h-2zm0 1h2v2h-2zm0 9h2v2h-2zm0 5h2v2h-2zm1 -26h2v2h-2zm0 3h2v2h-2zm0 14h2v2h-2zm0 3h2v2h-2zm0 6h2v2h-2zm0 17h2v2h-2zm1 -50h2v2h-2zm0 6h2v2h-2zm0 10h2v2h-2zm0 7h2v2h-2zm0 1h2v2h-2zm0 13h2v2h-2zm1 -28h2v2h-2zm0 4h2v2h-2zm0 10h2v2h-2zm0 4h2v2h-2zm0 9h2v2h-2zm1 -28h2v2h-2zm0 1h2v2h-2zm0 9h2v2h-2zm0 2h2v2h-2zm0 7h2v2h-2zm0 6h2v2h-2zm1 -10h2v2h-2zm0 2h2v2h-2zm0 5h2v2h-2zm0 7h2v2h-2zm0 4h2v2h-2zm1 -33h2v2h-2zm0 4h2v2h-2zm0 11h2v2h-2zm0 5h2v2h-2zm0 2h2v2h-2zm1 -29h2v2h-2zm0 16h2v2h-2zm0 3h2v2h-2zm0 5h2v2h-2zm0 18h2v2h-2zm1 -33h2v2h-2zm0 8h2v2h-2zm0 7h2v2h-2zm0 3h2v2h-2zm0 8h2v2h-2zm0 1h2v2h-2zm1 -25h2v2h-2zm0 2h2v2h-2zm0 2h2v2h-2zm0 12h2v2h-2zm1 -16h2v2h-2zm0 4h2v2h-2zm0 9h2v2h-2zm0 6h2v2h-2zm0 5h2v2h-2zm0 16h2v2h-2zm1 -42h2v2h-2zm0 9h2v2h-2zm0 3h2v2h-2zm0 1h2v2h-2zm1 -9h2v2h-2zm0 3h2v2h-2zm0 7h2v2h-2zm0 3h2v2h-2zm0 4h2v2h-2zm1 -29h2v2h-2zm0 15h2v2h-2zm0 2h2v2h-2zm0 5h2v2h-2zm0 3h2v2h-2zm0 1h2v2h-2zm1 -15h2v2h-2zm0 4h2v2h-2zm0 5h2v2h-2zm0 5h2v2h-2zm0 3h2v2h-2zm0 6h2v2h-2zm1 -22h2v2h-2zm0 3h2v2h-2zm0 3h2v2h-2zm0 5h2v2h-2zm1 -14h2v2h-2zm0 16h2v2h-2zm0 1h2v2h-2zm0 2h2v2h-2zm0 1h2v2h-2zm0 6h2v2h-2zm1 -20h2v2h-2zm0 6h2v2h-2zm0 1h2v2h-2zm0 1h2v2h-2zm0 2h2v2h-2zm0 16h2v2h-2zm1 -25h2v2h-2zm0 4h2v2h-2zm0 3h2v2h-2zm0 3h2v2h-2zm0 3h2v2h-2zm1 -22h2v2h-2zm0 4h2v2h-2zm0 10h2v2h-2zm0 1h2v2h-2zm0 7h2v2h-2zm1 -26h2v2h-2zm0 18h2v2h-2zm0 7h2v2h-2zm0 6h2v2h-2zm0 1h2v2h-2zm1 -26h2v2h-2zm0 1h2v2h-2zm0 18h2v2h-2zm0 3h2v2h-2zm0 8h2v2h-2zm1 -22h2v2h-2zm0 3h2v2h-2zm0 2h2v2h-2zm0 3h2v2h-2zm0 7h2v2h-2zm1 -16h2v2h-2zm0 2h2v2h-2zm0 2h2v2h-2zm0 9h2v2h-2zm0 2h2v2h-2zm0 1h2v2h-2zm1 -25h2v2h-2zm0 5h2v2h-2zm0 9h2v2h-2zm0 2h2v2h-2zm1 -3h2v2h-2zm0 2h2v2h-2zm0 4h2v2h-2zm0 5h2v2h-2zm0 3h2v2h-2zm1 -20h2v2h-2zm0 1h2v2h-2zm0 7h2v2h-2zm0 6h2v2h-2zm0 1h2v2h-2zm1 -13h2v2h-2zm0 4h2v2h-2zm0 3h2v2h-2zm0 3h2v2h-2zm0 18h2v2h-2zm1 -27h2v2h-2zm0 3h2v2h-2zm0 5h2v2h-2zm0 6h2v2h-2zm0 8h2v2h-2zm1 -33h2v2h-2zm0 10h2v2h-2zm0 9h2v2h-2zm0 4h2v2h-2zm0 5h2v2h-2zm0 5h2v2h-2zm1 -31h2v2h-2zm0 12h2v2h-2zm0 11h2v2h-2zm0 1h2v2h-2zm0 7h2v2h-2zm1 -33h2v2h-2zm0 9h2v2h-2zm0 1h2v2h-2zm0 5h2v2h-2zm0 10h2v2h-2zm0 8h2v2h-2zm1 -16h2v2h-2zm0 2h2v2h-2zm0 9h2v2h-2zm0 1h2v2h-2zm0 7h2v2h-2zm1 -24h2v2h-2zm0 3h2v2h-2zm0 7h2v2h-2zm0 3h2v2h-2zm1 -14h2v2h-2zm0 9h2v2h-2zm0 5h2v2h-2zm0 1h2v2h-2zm0 3h2v2h-2zm1 -19h2v2h-2zm0 4h2v2h-2zm0 1h2v2h-2zm0 2h2v2h-2zm0 3h2v2h-2zm1 -9h2v2h-2zm0 3h2v2h-2zm0 2h2v2h-2zm0 4h2v2h-2zm0 9h2v2h-2zm1 -15h2v2h-2zm0 1h2v2h-2zm0 1h2v2h-2zm0 3h2v2h-2zm0 1h2v2h-2zm0 13h2v2h-2zm1 -33h2v2h-2zm0 4h2v2h-2zm0 6h2v2h-2zm0 12h2v2h-2zm0 7h2v2h-2zm1 -20h2v2h-2zm0 7h2v2h-2zm0 3h2v2h-2zm0 7h2v2h-2zm1 -21h2v2h-2zm0 3h2v2h-2zm0 3h2v2h-2zm0 4h2v2h-2zm0 5h2v2h-2zm0 15h2v2h-2zm1 -24h2v2h-2zm0 1h2v2h-2zm0 8h2v2h-2zm0 6h2v2h-2zm0 7h2v2h-2zm1 -21h2v2h-2zm0 17h2v2h-2zm0 6h2v2h-2zm0 1h2v2h-2zm1 -30h2v2h-2zm0 10h2v2h-2zm0 1h2v2h-2zm0 5h2v2h-2zm0 3h2v2h-2zm1 -16h2v2h-2zm0 6h2v2h-2zm0 4h2v2h-2zm0 12h2v2h-2zm0 13h2v2h-2zm1 -35h2v2h-2zm0 8h2v2h-2zm0 3h2v2h-2zm0 9h2v2h-2zm0 11h2v2h-2zm1 -32h2v2h-2zm0 3h2v2h-2zm0 1h2v2h-2zm0 10h2v2h-2zm0 1h2v2h-2zm0 5h2v2h-2zm1 -17h2v2h-2zm0 5h2v2h-2zm0 3h2v2h-2zm0 6h2v2h-2zm0 1h2v2h-2zm1 -26h2v2h-2zm0 23h2v2h-2zm0 2h2v2h-2zm0 4h2v2h-2zm0 7h2v2h-2zm1 -39h2v2h-2zm0 18h2v2h-2zm0 4h2v2h-2zm0 3h2v2h-2zm0 24h2v2h-2zm1 -42h2v2h-2zm0 7h2v2h-2zm0 18h2v2h-2zm0 15h2v2h-2zm1 -35h2v2h-2zm0 5h2v2h-2zm0 2h2v2h-2zm0 7h2v2h-2zm0 2h2v2h-2zm1 -11h2v2h-2zm0 2h2v2h-2zm0 6h2v2h-2zm0 1h2v2h-2zm0 5h2v2h-2zm1 -14h2v2h-2zm0 1h2v2h-2zm0 4h2v2h-2zm0 3h2v2h-2zm0 3h2v2h-2zm0 15h2v2h-2zm1 -18h2v2h-2zm0 4h2v2h-2zm0 3h2v2h-2zm0 6h2v2h-2zm1 -24h2v2h-2zm0 5h2v2h-2zm0 1h2v2h-2zm0 11h2v2h-2zm0 7h2v2h-2zm1 -23h2v2h-2zm0 7h2v2h-2zm0 4h2v2h-2zm0 10h2v2h-2zm0 16h2v2h-2zm1 -35h2v2h-2zm0 8h2v2h-2zm0 1h2v2h-2zm0 2h2v2h-2zm0 8h2v2h-2zm1 -31h2v2h-2zm0 14h2v2h-2zm0 9h2v2h-2zm0 3h2v2h-2zm1 -19h2v2h-2zm0 14h2v2h-2zm0 2h2v2h-2zm0 1h2v2h-2zm0 2h2v2h-2zm0 1h2v2h-2zm1 -15h2v2h-2zm0 9h2v2h-2zm0 2h2v2h-2zm0 15h2v2h-2zm1 -25h2v2h-2zm0 16h2v2h-2zm0 2h2v2h-2zm0 2h2v2h-2zm0 14h2v2h-2zm1 -41h2v2h-2zm0 8h2v2h-2zm0 3h2v2h-2zm0 3h2v2h-2zm0 3h2v2h-2zm0 8h2v2h-2zm1 -31h2v2h-2zm0 8h2v2h-2zm0 10h2v2h-2zm0 11h2v2h-2zm0 2h2v2h-2zm1 -8h2v2h-2zm0 4h2v2h-2zm0 11h2v2h-2zm1 -42h2v2h-2zm0 17h2v2h-2zm0 1h2v2h-2zm0 12h2v2h-2zm0 1h2v2h-2zm1 -21h2v2h-2zm0 1h2v2h-2zm0 11h2v2h-2zm0 2h2v2h-2zm0 1h2v2h-2zm0 5h2v2h-2zm1 -12h2v2h-2zm0 4h2v2h-2zm0 5h2v2h-2zm0 4h2v2h-2zm1 -15h2v2h-2zm0 3h2v2h-2zm0 6h2v2h-2zm0 6h2v2h-2zm0 4h2v2h-2zm0 9h2v2h-2zm1 -26h2v2h-2zm0 9h2v2h-2zm0 3h2v2h-2zm0 12h2v2h-2zm0 2h2v2h-2zm1 -26h2v2h-2zm0 6h2v2h-2zm0 3h2v2h-2zm0 1h2v2h-2zm1 -12h2v2h-2zm0 1h2v2h-2zm0 16h2v2h-2zm0 2h2v2h-2zm0 7h2v2h-2zm1 -32h2v2h-2zm0 9h2v2h-2zm0 14h2v2h-2zm0 7h2v2h-2zm0 8h2v2h-2zm1 -35h2v2h-2zm0 4h2v2h-2zm0 10h2v2h-2zm0 3h2v2h-2zm0 16h2v2h-2zm1 -28h2v2h-2zm0 1h2v2h-2zm0 2h2v2h-2zm0 9h2v2h-2zm0 5h2v2h-2zm0 3h2v2h-2zm1 -32h2v2h-2zm0 22h2v2h-2zm0 12h2v2h-2zm0 2h2v2h-2zm0 2h2v2h-2zm1 -16h2v2h-2zm0 2h2v2h-2zm0 3h2v2h-2zm0 5h2v2h-2zm1 -24h2v2h-2zm0 5h2v2h-2zm0 12h2v2h-2zm0 4h2v2h-2zm0 7h2v2h-2zm1 -24h2v2h-2zm0 4h2v2h-2zm0 2h2v2h-2zm0 1h2v2h-2zm0 8h2v2h-2zm0 4h2v2h-2zm1 -13h2v2h-2zm0 1h2v2h-2zm0 5h2v2h-2zm0 10h2v2h-2zm1 -24h2v2h-2zm0 6h2v2h-2zm0 3h2v2h-2zm0 6h2v2h-2zm0 4h2v2h-2zm0 3h2v2h-2zm1 -31h2v2h-2zm0 12h2v2h-2zm0 2h2v2h-2zm0 7h2v2h-2zm0 2h2v2h-2zm0 14h2v2h-2zm1 -22h2v2h-2zm0 3h2v2h-2zm0 5h2v2h-2zm0 3h2v2h-2zm0 9h2v2h-2zm1 -24h2v2h-2zm0 6h2v2h-2zm0 3h2v2h-2zm0 17h2v2h-2zm0 4h2v2h-2zm1 -30h2v2h-2zm0 12h2v2h-2zm0 1h2v2h-2zm0 6h2v2h-2zm1 -20h2v2h-2zm0 5h2v2h-2zm0 11h2v2h-2zm0 2h2v2h-2zm0 16h2v2h-2zm1 -32h2v2h-2zm0 2h2v2h-2zm0 6h2v2h-2zm0 11h2v2h-2zm0 4h2v2h-2zm0 2h2v2h-2zm1 -28h2v2h-2zm0 5h2v2h-2zm0 4h2v2h-2zm0 2h2v2h-2zm0 13h2v2h-2zm1 -22h2v2h-2zm0 9h2v2h-2zm0 4h2v2h-2zm0 6h2v2h-2zm0 5h2v2h-2zm1 -20h2v2h-2zm0 8h2v2h-2zm0 3h2v2h-2zm0 2h2v2h-2zm0 2h2v2h-2zm0 9h2v2h-2zm1 -25h2v2h-2zm0 1h2v2h-2zm0 3h2v2h-2zm0 8h2v2h-2zm0 7h2v2h-2zm1 -15h2v2h-2zm0 3h2v2h-2zm0 2h2v2h-2zm0 16h2v2h-2zm0 2h2v2h-2zm0 25h2v2h-2zm1 -43h2v2h-2zm0 1h2v2h-2zm0 6h2v2h-2zm0 3h2v2h-2zm0 6h2v2h-2zm1 -25h2v2h-2zm0 1h2v2h-2zm0 2h2v2h-2zm0 3h2v2h-2zm0 6h2v2h-2zm1 -14h2v2h-2zm0 6h2v2h-2zm0 2h2v2h-2zm0 11h2v2h-2zm0 17h2v2h-2zm1 -43h2v2h-2zm0 5h2v2h-2zm0 18h2v2h-2zm0 2h2v2h-2zm0 1h2v2h-2zm0 6h2v2h-2zm1 -25h2v2h-2zm0 5h2v2h-2zm0 3h2v2h-2zm0 1h2v2h-2zm0 5h2v2h-2zm1 -23h2v2h-2zm0 12h2v2h-2zm0 3h2v2h-2zm0 6h2v2h-2zm0 7h2v2h-2zm1 -13h2v2h-2zm0 2h2v2h-2zm0 3h2v2h-2zm0 8h2v2h-2zm0 2h2v2h-2zm1 -18h2v2h-2zm0 2h2v2h-2zm0 4h2v2h-2zm0 3h2v2h-2zm0 15h2v2h-2zm1 -15h2v2h-2zm0 6h2v2h-2zm0 3h2v2h-2zm0 13h2v2h-2zm1 -22h2v2h-2zm0 4h2v2h-2zm0 5h2v2h-2zm0 2h2v2h-2zm0 4h2v2h-2zm1 -36h2v2h-2zm0 4h2v2h-2zm0 11h2v2h-2zm0 2h2v2h-2zm0 8h2v2h-2zm0 3h2v2h-2zm1 -16h2v2h-2zm0 6h2v2h-2zm0 3h2v2h-2zm0 9h2v2h-2zm1 -23h2v2h-2zm0 1h2v2h-2zm0 3h2v2h-2zm0 1h2v2h-2zm0 6h2v2h-2zm0 10h2v2h-2zm1 -19h2v2h-2zm0 5h2v2h-2zm0 1h2v2h-2zm0 6h2v2h-2zm0 6h2v2h-2zm0 11h2v2h-2zm1 -32h2v2h-2zm0 2h2v2h-2zm0 12h2v2h-2zm0 8h2v2h-2zm0 2h2v2h-2zm1 -21h2v2h-2zm0 5h2v2h-2zm0 11h2v2h-2zm0 5h2v2h-2zm0 8h2v2h-2zm1 -29h2v2h-2zm0 5h2v2h-2zm0 7h2v2h-2zm0 2h2v2h-2zm1 -17h2v2h-2zm0 21h2v2h-2zm0 3h2v2h-2zm0 8h2v2h-2zm0 3h2v2h-2zm1 -30h2v2h-2zm0 4h2v2h-2zm0 2h2v2h-2zm0 1h2v2h-2zm0 7h2v2h-2zm0 11h2v2h-2zm1 -30h2v2h-2zm0 8h2v2h-2zm0 6h2v2h-2zm0 7h2v2h-2zm0 1h2v2h-2zm0 8h2v2h-2zm1 -27h2v2h-2zm0 8h2v2h-2zm0 6h2v2h-2zm0 2h2v2h-2zm1 -11h2v2h-2zm0 3h2v2h-2zm0 6h2v2h-2zm0 4h2v2h-2zm0 1h2v2h-2zm1 -17h2v2h-2zm0 17h2v2h-2zm0 4h2v2h-2zm0 2h2v2h-2zm0 9h2v2h-2zm1 -31h2v2h-2zm0 5h2v2h-2zm0 6h2v2h-2zm0 7h2v2h-2zm1 -23h2v2h-2zm0 8h2v2h-2zm0 2h2v2h-2zm0 4h2v2h-2zm0 4h2v2h-2zm0 2h2v2h-2zm1 -13h2v2h-2zm0 1h2v2h-2zm0 3h2v2h-2zm0 3h2v2h-2zm0 4h2v2h-2zm0 2h2v2h-2zm1 -7h2v2h-2zm0 10h2v2h-2zm0 2h2v2h-2zm0 9h2v2h-2zm1 -23h2v2h-2zm0 3h2v2h-2zm0 4h2v2h-2zm0 3h2v2h-2zm0 10h2v2h-2zm1 -32h2v2h-2zm0 2h2v2h-2zm0 7h2v2h-2zm0 8h2v2h-2zm0 7h2v2h-2zm0 6h2v2h-2zm1 -24h2v2h-2zm0 2h2v2h-2zm0 4h2v2h-2zm0 5h2v2h-2zm0 4h2v2h-2zm1 -18h2v2h-2zm0 11h2v2h-2zm0 1h2v2h-2zm0 2h2v2h-2zm0 4h2v2h-2zm0 5h2v2h-2zm1 -24h2v2h-2zm0 15h2v2h-2zm0 5h2v2h-2zm0 2h2v2h-2zm0 2h2v2h-2zm0 4h2v2h-2zm1 -24h2v2h-2zm0 3h2v2h-2zm0 5h2v2h-2zm0 10h2v2h-2zm0 4h2v2h-2zm1 -17h2v2h-2zm0 8h2v2h-2zm0 3h2v2h-2zm0 2h2v2h-2zm0 4h2v2h-2zm0 4h2v2h-2zm1 -23h2v2h-2zm0 3h2v2h-2zm0 2h2v2h-2zm0 8h2v2h-2zm0 13h2v2h-2zm1 -33h2v2h-2zm0 4h2v2h-2zm0 3h2v2h-2zm0 8h2v2h-2zm0 7h2v2h-2zm1 -19h2v2h-2zm0 6h2v2h-2zm0 4h2v2h-2zm0 2h2v2h-2zm0 2h2v2h-2zm0 11h2v2h-2zm1 -19h2v2h-2zm0 4h2v2h-2zm0 6h2v2h-2zm0 1h2v2h-2zm0 2h2v2h-2zm0 8h2v2h-2zm1 -18h2v2h-2zm0 5h2v2h-2zm0 5h2v2h-2zm0 6h2v2h-2zm1 -32h2v2h-2zm0 14h2v2h-2zm0 3h2v2h-2zm0 6h2v2h-2zm0 11h2v2h-2zm0 5h2v2h-2zm1 -40h2v2h-2zm0 1h2v2h-2zm0 10h2v2h-2zm0 6h2v2h-2zm0 14h2v2h-2zm1 -26h2v2h-2zm0 9h2v2h-2zm0 8h2v2h-2zm0 2h2v2h-2zm0 5h2v2h-2zm1 -36h2v2h-2zm0 15h2v2h-2zm0 6h2v2h-2zm0 4h2v2h-2zm0 11h2v2h-2zm0 4h2v2h-2zm1 -27h2v2h-2zm0 2h2v2h-2zm0 1h2v2h-2zm0 3h2v2h-2zm0 15h2v2h-2zm0 2h2v2h-2zm1 -24h2v2h-2zm0 10h2v2h-2zm0 9h2v2h-2zm0 5h2v2h-2zm0 6h2v2h-2zm1 -26h2v2h-2zm0 16h2v2h-2zm0 6h2v2h-2zm0 2h2v2h-2zm1 -29h2v2h-2zm0 4h2v2h-2zm0 7h2v2h-2zm0 3h2v2h-2zm0 7h2v2h-2zm0 2h2v2h-2zm1 -15h2v2h-2zm0 8h2v2h-2zm0 2h2v2h-2zm0 3h2v2h-2zm0 2h2v2h-2zm1 -22h2v2h-2zm0 13h2v2h-2zm0 2h2v2h-2zm0 5h2v2h-2zm1 -11h2v2h-2zm0 3h2v2h-2zm0 5h2v2h-2zm0 2h2v2h-2zm0 14h2v2h-2zm0 7h2v2h-2zm1 -28h2v2h-2zm0 7h2v2h-2zm0 5h2v2h-2zm0 11h2v2h-2zm1 -26h2v2h-2zm0 4h2v2h-2zm0 2h2v2h-2zm0 2h2v2h-2zm0 3h2v2h-2zm1 -7h2v2h-2zm0 6h2v2h-2zm0 1h2v2h-2zm0 10h2v2h-2zm0 3h2v2h-2zm0 7h2v2h-2zm1 -37h2v2h-2zm0 4h2v2h-2zm0 10h2v2h-2zm0 5h2v2h-2zm0 18h2v2h-2zm1 -56h2v2h-2zm0 25h2v2h-2zm0 3h2v2h-2zm0 5h2v2h-2zm0 7h2v2h-2zm0 9h2v2h-2zm1 -35h2v2h-2zm0 2h2v2h-2zm0 4h2v2h-2zm0 5h2v2h-2zm0 3h2v2h-2zm1 -8h2v2h-2zm0 8h2v2h-2zm0 8h2v2h-2zm0 4h2v2h-2zm0 2h2v2h-2zm1 -25h2v2h-2zm0 3h2v2h-2zm0 11h2v2h-2zm0 11h2v2h-2zm0 19h2v2h-2zm1 -38h2v2h-2zm0 5h2v2h-2zm0 10h2v2h-2zm0 2h2v2h-2zm0 2h2v2h-2zm1 -30h2v2h-2zm0 3h2v2h-2zm0 11h2v2h-2zm0 14h2v2h-2zm0 19h2v2h-2zm1 -37h2v2h-2zm0 7h2v2h-2zm0 4h2v2h-2zm0 2h2v2h-2zm1 -15h2v2h-2zm0 16h2v2h-2zm0 8h2v2h-2zm0 12h2v2h-2zm1 -31h2v2h-2zm0 6h2v2h-2zm0 5h2v2h-2zm0 2h2v2h-2zm0 4h2v2h-2zm1 -13h2v2h-2zm0 4h2v2h-2zm0 2h2v2h-2zm0 3h2v2h-2zm0 4h2v2h-2zm1 -13h2v2h-2zm0 2h2v2h-2zm0 2h2v2h-2zm0 7h2v2h-2zm0 11h2v2h-2zm0 2h2v2h-2zm1 -34h2v2h-2zm0 3h2v2h-2zm0 7h2v2h-2zm0 6h2v2h-2zm0 5h2v2h-2zm1 -15h2v2h-2zm0 6h2v2h-2zm0 4h2v2h-2zm0 5h2v2h-2zm0 9h2v2h-2zm1 -32h2v2h-2zm0 9h2v2h-2zm0 3h2v2h-2zm0 13h2v2h-2zm0 11h2v2h-2zm0 14h2v2h-2zm1 -48h2v2h-2zm0 10h2v2h-2zm0 4h2v2h-2zm0 13h2v2h-2zm1 -29h2v2h-2zm0 11h2v2h-2zm0 7h2v2h-2zm0 5h2v2h-2zm0 2h2v2h-2zm0 4h2v2h-2zm1 -23h2v2h-2zm0 2h2v2h-2zm0 1h2v2h-2zm0 3h2v2h-2zm0 17h2v2h-2zm1 -20h2v2h-2zm0 12h2v2h-2zm0 2h2v2h-2zm0 11h2v2h-2zm1 -31h2v2h-2zm0 9h2v2h-2zm0 2h2v2h-2zm0 7h2v2h-2zm0 8h2v2h-2zm0 7h2v2h-2zm1 -28h2v2h-2zm0 1h2v2h-2zm0 10h2v2h-2zm0 10h2v2h-2zm0 5h2v2h-2zm0 2h2v2h-2zm1 -28h2v2h-2zm0 17h2v2h-2zm0 7h2v2h-2zm0 4h2v2h-2zm1 -30h2v2h-2zm0 3h2v2h-2zm0 2h2v2h-2zm0 5h2v2h-2zm1 -5h2v2h-2zm0 3h2v2h-2zm0 2h2v2h-2zm0 5h2v2h-2zm0 4h2v2h-2zm1 -22h2v2h-2zm0 2h2v2h-2zm0 9h2v2h-2zm0 2h2v2h-2zm0 9h2v2h-2zm1 -7h2v2h-2zm0 1h2v2h-2zm0 8h2v2h-2zm0 5h2v2h-2zm0 12h2v2h-2zm1 -30h2v2h-2zm0 7h2v2h-2zm0 2h2v2h-2zm0 2h2v2h-2zm0 4h2v2h-2zm1 -27h2v2h-2zm0 9h2v2h-2zm0 1h2v2h-2zm0 7h2v2h-2zm0 4h2v2h-2zm1 -14h2v2h-2zm0 2h2v2h-2zm0 3h2v2h-2zm0 5h2v2h-2zm0 8h2v2h-2zm0 15h2v2h-2zm1 -43h2v2h-2zm0 7h2v2h-2zm0 6h2v2h-2zm0 4h2v2h-2zm0 7h2v2h-2zm1 -7h2v2h-2zm0 9h2v2h-2zm0 2h2v2h-2zm0 2h2v2h-2zm1 -30h2v2h-2zm0 1h2v2h-2zm0 2h2v2h-2zm0 9h2v2h-2zm0 5h2v2h-2zm0 7h2v2h-2zm1 -24h2v2h-2zm0 7h2v2h-2zm0 8h2v2h-2zm0 5h2v2h-2zm0 4h2v2h-2zm0 24h2v2h-2zm1 -36h2v2h-2zm0 1h2v2h-2zm0 4h2v2h-2zm0 3h2v2h-2zm0 25h2v2h-2zm1 -44h2v2h-2zm0 8h2v2h-2zm0 4h2v2h-2zm0 9h2v2h-2zm0 2h2v2h-2zm1 -15h2v2h-2zm0 15h2v2h-2zm0 6h2v2h-2zm0 3h2v2h-2zm1 -27h2v2h-2zm0 9h2v2h-2zm0 2h2v2h-2zm0 2h2v2h-2zm0 7h2v2h-2zm1 -19h2v2h-2zm0 19h2v2h-2zm0 2h2v2h-2zm0 9h2v2h-2zm1 -31h2v2h-2zm0 9h2v2h-2zm0 15h2v2h-2zm0 3h2v2h-2zm0 10h2v2h-2zm1 -43h2v2h-2zm0 10h2v2h-2zm0 16h2v2h-2zm0 7h2v2h-2zm0 2h2v2h-2zm1 -23h2v2h-2zm0 10h2v2h-2zm0 15h2v2h-2zm0 11h2v2h-2zm1 -44h2v2h-2zm0 2h2v2h-2zm0 7h2v2h-2zm0 6h2v2h-2zm0 9h2v2h-2zm0 26h2v2h-2zm1 -41h2v2h-2zm0 9h2v2h-2zm0 4h2v2h-2zm0 2h2v2h-2zm0 2h2v2h-2zm1 -21h2v2h-2zm0 1h2v2h-2zm0 9h2v2h-2zm0 9h2v2h-2zm0 5h2v2h-2zm0 4h2v2h-2zm1 -20h2v2h-2zm0 3h2v2h-2zm0 2h2v2h-2zm0 4h2v2h-2zm0 7h2v2h-2zm0 18h2v2h-2zm1 -41h2v2h-2zm0 12h2v2h-2zm0 8h2v2h-2zm0 7h2v2h-2zm0 6h2v2h-2zm1 -39h2v2h-2zm0 16h2v2h-2zm0 15h2v2h-2zm0 13h2v2h-2zm1 -35h2v2h-2zm0 6h2v2h-2zm0 1h2v2h-2zm0 8h2v2h-2zm0 2h2v2h-2zm0 7h2v2h-2zm1 -37h2v2h-2zm0 26h2v2h-2zm0 9h2v2h-2zm0 5h2v2h-2zm0 8h2v2h-2zm1 -41h2v2h-2zm0 21h2v2h-2zm0 5h2v2h-2zm0 4h2v2h-2zm0 8h2v2h-2zm1 -26h2v2h-2zm0 3h2v2h-2zm0 13h2v2h-2zm0 2h2v2h-2zm0 14h2v2h-2zm1 -38h2v2h-2zm0 2h2v2h-2zm0 13h2v2h-2zm0 2h2v2h-2zm0 10h2v2h-2zm1 -25h2v2h-2zm0 2h2v2h-2zm0 2h2v2h-2zm0 3h2v2h-2zm0 8h2v2h-2zm0 5h2v2h-2zm1 -35h2v2h-2zm0 24h2v2h-2zm0 2h2v2h-2zm0 4h2v2h-2zm0 24h2v2h-2zm1 -42h2v2h-2zm0 5h2v2h-2zm0 7h2v2h-2zm0 4h2v2h-2zm0 9h2v2h-2zm1 -25h2v2h-2zm0 1h2v2h-2zm0 2h2v2h-2zm0 11h2v2h-2zm0 9h2v2h-2zm1 -26h2v2h-2zm0 3h2v2h-2zm0 5h2v2h-2zm0 2h2v2h-2zm0 7h2v2h-2zm0 2h2v2h-2zm1 -15h2v2h-2zm0 2h2v2h-2zm0 5h2v2h-2zm0 2h2v2h-2zm0 18h2v2h-2zm1 -20h2v2h-2zm0 4h2v2h-2zm0 4h2v2h-2zm0 5h2v2h-2zm0 7h2v2h-2zm1 -36h2v2h-2zm0 24h2v2h-2zm0 2h2v2h-2zm0 7h2v2h-2zm0 6h2v2h-2zm1 -36h2v2h-2zm0 6h2v2h-2zm0 4h2v2h-2zm0 26h2v2h-2zm1 -34h2v2h-2zm0 1h2v2h-2zm0 5h2v2h-2zm0 2h2v2h-2zm0 3h2v2h-2zm0 25h2v2h-2zm1 -46h2v2h-2zm0 16h2v2h-2zm0 7h2v2h-2zm0 4h2v2h-2zm0 4h2v2h-2zm0 7h2v2h-2zm1 -34h2v2h-2zm0 6h2v2h-2zm0 3h2v2h-2zm0 3h2v2h-2zm0 13h2v2h-2zm1 -16h2v2h-2zm0 3h2v2h-2zm0 9h2v2h-2zm0 4h2v2h-2zm0 9h2v2h-2zm0 6h2v2h-2zm1 -33h2v2h-2zm0 10h2v2h-2zm0 20h2v2h-2zm0 14h2v2h-2zm0 35h2v2h-2zm1 -74h2v2h-2zm0 2h2v2h-2zm0 2h2v2h-2zm0 14h2v2h-2zm0 12h2v2h-2zm1 -42h2v2h-2zm0 10h2v2h-2zm0 9h2v2h-2zm0 2h2v2h-2zm0 9h2v2h-2zm0 32h2v2h-2zm1 -50h2v2h-2zm0 2h2v2h-2zm0 5h2v2h-2zm0 2h2v2h-2zm0 6h2v2h-2zm0 15h2v2h-2zm1 -33h2v2h-2zm0 3h2v2h-2zm0 5h2v2h-2zm0 23h2v2h-2zm1 -36h2v2h-2zm0 13h2v2h-2zm0 2h2v2h-2zm0 2h2v2h-2zm0 21h2v2h-2zm1 -33h2v2h-2zm0 8h2v2h-2zm0 10h2v2h-2zm0 5h2v2h-2zm0 2h2v2h-2zm0 32h2v2h-2zm1 -63h2v2h-2zm0 7h2v2h-2zm0 13h2v2h-2zm0 22h2v2h-2zm1 -41h2v2h-2zm0 6h2v2h-2zm0 2h2v2h-2zm0 13h2v2h-2zm0 12h2v2h-2zm1 -25h2v2h-2zm0 2h2v2h-2zm0 2h2v2h-2zm0 3h2v2h-2zm0 11h2v2h-2zm0 4h2v2h-2zm1 -20h2v2h-2zm0 3h2v2h-2zm0 2h2v2h-2zm0 4h2v2h-2zm0 2h2v2h-2zm1 -11h2v2h-2zm0 2h2v2h-2zm0 7h2v2h-2zm0 11h2v2h-2zm0 3h2v2h-2zm0 18h2v2h-2zm1 -46h2v2h-2zm0 7h2v2h-2zm0 11h2v2h-2zm0 3h2v2h-2zm0 2h2v2h-2zm0 5h2v2h-2zm0 21h2v2h-2zm1 -44h2v2h-2zm0 3h2v2h-2zm0 8h2v2h-2zm0 5h2v2h-2zm0 7h2v2h-2zm1 -41h2v2h-2zm0 14h2v2h-2zm0 4h2v2h-2zm0 7h2v2h-2zm0 9h2v2h-2zm1 -9h2v2h-2zm0 4h2v2h-2zm0 5h2v2h-2zm0 10h2v2h-2zm0 8h2v2h-2zm1 -34h2v2h-2zm0 13h2v2h-2zm0 5h2v2h-2zm0 10h2v2h-2zm1 -38h2v2h-2zm0 3h2v2h-2zm0 14h2v2h-2zm0 4h2v2h-2zm0 12h2v2h-2zm0 5h2v2h-2zm1 -36h2v2h-2zm0 11h2v2h-2zm0 2h2v2h-2zm0 2h2v2h-2zm0 2h2v2h-2zm0 4h2v2h-2zm1 -21h2v2h-2zm0 8h2v2h-2zm0 2h2v2h-2zm0 3h2v2h-2zm1 2h2v2h-2zm0 2h2v2h-2zm0 2h2v2h-2zm0 2h2v2h-2zm0 15h2v2h-2zm1 -36h2v2h-2zm0 11h2v2h-2zm0 6h2v2h-2zm0 4h2v2h-2zm0 7h2v2h-2zm0 14h2v2h-2zm1 -31h2v2h-2zm0 4h2v2h-2zm0 2h2v2h-2zm0 14h2v2h-2zm0 21h2v2h-2zm1 -54h2v2h-2zm0 17h2v2h-2zm0 2h2v2h-2zm0 2h2v2h-2zm0 2h2v2h-2zm1 -21h2v2h-2zm0 4h2v2h-2zm0 7h2v2h-2zm0 2h2v2h-2zm0 8h2v2h-2zm1 -26h2v2h-2zm0 18h2v2h-2zm0 2h2v2h-2zm0 11h2v2h-2zm0 5h2v2h-2zm1 -28h2v2h-2zm0 1h2v2h-2zm0 6h2v2h-2zm0 5h2v2h-2zm0 13h2v2h-2zm1 -22h2v2h-2zm0 2h2v2h-2zm0 3h2v2h-2zm0 6h2v2h-2zm0 19h2v2h-2zm1 -28h2v2h-2zm0 2h2v2h-2zm0 3h2v2h-2zm0 8h2v2h-2zm0 3h2v2h-2zm1 -23h2v2h-2zm0 2h2v2h-2zm0 10h2v2h-2zm0 21h2v2h-2zm1 -37h2v2h-2zm0 4h2v2h-2zm0 3h2v2h-2zm0 4h2v2h-2zm0 3h2v2h-2zm0 17h2v2h-2zm1 -11h2v2h-2zm0 9h2v2h-2zm1 -15h2v2h-2zm0 4h2v2h-2zm0 2h2v2h-2zm0 7h2v2h-2zm0 2h2v2h-2zm1 -20h2v2h-2zm0 9h2v2h-2zm0 4h2v2h-2zm0 2h2v2h-2zm0 3h2v2h-2zm0 2h2v2h-2zm1 -13h2v2h-2zm0 4h2v2h-2zm0 7h2v2h-2zm0 4h2v2h-2zm1 -33h2v2h-2zm0 15h2v2h-2zm0 1h2v2h-2zm0 4h2v2h-2zm0 16h2v2h-2zm1 -30h2v2h-2zm0 5h2v2h-2zm0 2h2v2h-2zm0 5h2v2h-2zm0 11h2v2h-2zm1 -21h2v2h-2zm0 14h2v2h-2zm0 2h2v2h-2zm0 5h2v2h-2zm1 -24h2v2h-2zm0 10h2v2h-2zm0 1h2v2h-2zm0 4h2v2h-2zm0 4h2v2h-2zm0 2h2v2h-2zm1 -18h2v2h-2zm0 3h2v2h-2zm0 2h2v2h-2zm0 9h2v2h-2zm0 14h2v2h-2zm1 -39h2v2h-2zm0 14h2v2h-2zm0 5h2v2h-2zm0 2h2v2h-2zm0 6h2v2h-2zm0 2h2v2h-2zm1 -6h2v2h-2zm0 6h2v2h-2zm0 3h2v2h-2zm0 2h2v2h-2zm1 -16h2v2h-2zm0 1h2v2h-2zm0 6h2v2h-2zm0 4h2v2h-2zm0 7h2v2h-2zm1 -31h2v2h-2zm0 1h2v2h-2zm0 5h2v2h-2zm0 7h2v2h-2zm0 1h2v2h-2zm0 4h2v2h-2zm1 4h2v2h-2zm0 2h2v2h-2zm0 3h2v2h-2zm0 7h2v2h-2zm1 -33h2v2h-2zm0 12h2v2h-2zm0 9h2v2h-2zm0 2h2v2h-2zm0 5h2v2h-2zm0 8h2v2h-2zm1 -19h2v2h-2zm0 6h2v2h-2zm0 3h2v2h-2zm0 2h2v2h-2zm0 5h2v2h-2zm1 -30h2v2h-2zm0 2h2v2h-2zm0 7h2v2h-2zm0 7h2v2h-2zm0 11h2v2h-2zm1 -28h2v2h-2zm0 4h2v2h-2zm0 20h2v2h-2zm0 7h2v2h-2zm1 -31h2v2h-2zm0 6h2v2h-2zm0 2h2v2h-2zm0 2h2v2h-2zm0 7h2v2h-2zm1 -7h2v2h-2zm0 11h2v2h-2zm0 13h2v2h-2zm0 2h2v2h-2zm1 -36h2v2h-2zm0 11h2v2h-2zm0 10h2v2h-2zm0 5h2v2h-2zm0 5h2v2h-2zm1 -20h2v2h-2zm0 2h2v2h-2zm0 2h2v2h-2zm0 6h2v2h-2zm0 18h2v2h-2zm1 -31h2v2h-2zm0 2h2v2h-2zm0 11h2v2h-2zm0 5h2v2h-2zm1 -32h2v2h-2zm0 3h2v2h-2zm0 1h2v2h-2zm0 3h2v2h-2zm0 12h2v2h-2zm0 26h2v2h-2zm1 -36h2v2h-2zm0 1h2v2h-2zm0 6h2v2h-2zm0 16h2v2h-2zm1 -18h2v2h-2zm0 7h2v2h-2zm0 2h2v2h-2zm0 11h2v2h-2zm1 -28h2v2h-2zm0 17h2v2h-2zm0 4h2v2h-2zm0 5h2v2h-2zm0 16h2v2h-2zm0 3h2v2h-2zm1 -30h2v2h-2zm0 2h2v2h-2zm0 9h2v2h-2zm0 2h2v2h-2zm0 6h2v2h-2zm0 8h2v2h-2zm1 -36h2v2h-2zm0 5h2v2h-2zm0 4h2v2h-2zm0 4h2v2h-2zm0 17h2v2h-2zm1 -33h2v2h-2zm0 5h2v2h-2zm0 5h2v2h-2zm0 4h2v2h-2zm0 4h2v2h-2zm0 15h2v2h-2zm1 -30h2v2h-2zm0 4h2v2h-2zm0 3h2v2h-2zm0 4h2v2h-2zm0 4h2v2h-2zm1 -17h2v2h-2zm0 11h2v2h-2zm0 2h2v2h-2zm0 9h2v2h-2zm0 49h2v2h-2zm1 -67h2v2h-2zm0 9h2v2h-2zm0 2h2v2h-2zm0 2h2v2h-2zm0 18h2v2h-2zm1 -29h2v2h-2zm0 1h2v2h-2zm0 4h2v2h-2zm0 2h2v2h-2zm0 2h2v2h-2zm0 7h2v2h-2zm1 -18h2v2h-2zm0 5h2v2h-2zm0 11h2v2h-2zm0 2h2v2h-2zm0 2h2v2h-2zm1 -30h2v2h-2zm0 6h2v2h-2zm0 6h2v2h-2zm0 1h2v2h-2zm0 20h2v2h-2zm0 5h2v2h-2zm1 -36h2v2h-2zm0 10h2v2h-2zm0 5h2v2h-2zm0 2h2v2h-2zm0 9h2v2h-2zm1 -18h2v2h-2zm0 3h2v2h-2zm0 6h2v2h-2zm0 2h2v2h-2zm0 2h2v2h-2zm1 -15h2v2h-2zm0 9h2v2h-2zm0 4h2v2h-2zm0 2h2v2h-2zm0 5h2v2h-2zm1 -15h2v2h-2zm0 2h2v2h-2zm0 2h2v2h-2zm0 9h2v2h-2zm0 2h2v2h-2zm0 10h2v2h-2zm1 -26h2v2h-2zm0 1h2v2h-2zm0 15h2v2h-2zm0 2h2v2h-2zm1 -28h2v2h-2zm0 10h2v2h-2zm0 1h2v2h-2zm0 13h2v2h-2zm0 2h2v2h-2zm1 -16h2v2h-2zm0 1h2v2h-2zm0 6h2v2h-2zm0 2h2v2h-2zm0 7h2v2h-2zm1 -16h2v2h-2zm0 5h2v2h-2zm0 2h2v2h-2zm0 9h2v2h-2zm0 10h2v2h-2zm1 -33h2v2h-2zm0 5h2v2h-2zm0 3h2v2h-2zm0 2h2v2h-2zm0 6h2v2h-2zm0 5h2v2h-2zm1 -20h2v2h-2zm0 11h2v2h-2zm0 4h2v2h-2zm0 2h2v2h-2zm0 10h2v2h-2zm1 -27h2v2h-2zm0 11h2v2h-2zm0 4h2v2h-2zm0 5h2v2h-2zm1 -24h2v2h-2zm0 11h2v2h-2zm0 4h2v2h-2zm0 2h2v2h-2zm0 17h2v2h-2zm0 5h2v2h-2zm1 -29h2v2h-2zm0 5h2v2h-2zm0 9h2v2h-2zm0 2h2v2h-2zm1 -15h2v2h-2zm0 20h2v2h-2zm0 8h2v2h-2zm1 -41h2v2h-2zm0 21h2v2h-2zm0 2h2v2h-2zm0 7h2v2h-2zm0 11h2v2h-2zm1 -33h2v2h-2zm0 7h2v2h-2zm0 2h2v2h-2zm0 2h2v2h-2zm0 25h2v2h-2zm1 -32h2v2h-2zm0 7h2v2h-2zm0 22h2v2h-2zm0 3h2v2h-2zm0 3h2v2h-2zm1 -37h2v2h-2zm0 9h2v2h-2zm0 2h2v2h-2zm0 5h2v2h-2zm0 12h2v2h-2zm1 -21h2v2h-2zm0 2h2v2h-2zm0 4h2v2h-2zm0 5h2v2h-2zm0 2h2v2h-2zm1 -39h2v2h-2zm0 12h2v2h-2zm0 12h2v2h-2zm0 4h2v2h-2zm1 -17h2v2h-2zm0 4h2v2h-2zm0 2h2v2h-2zm0 11h2v2h-2zm1 -16h2v2h-2zm0 3h2v2h-2zm0 7h2v2h-2zm0 4h2v2h-2zm0 2h2v2h-2zm0 9h2v2h-2zm1 -9h2v2h-2zm0 11h2v2h-2zm0 8h2v2h-2zm1 -32h2v2h-2zm0 7h2v2h-2zm0 2h2v2h-2zm0 15h2v2h-2zm0 3h2v2h-2zm1 -25h2v2h-2zm0 2h2v2h-2zm0 2h2v2h-2zm0 3h2v2h-2zm0 4h2v2h-2zm0 17h2v2h-2zm1 -33h2v2h-2zm0 10h2v2h-2zm0 13h2v2h-2zm0 4h2v2h-2zm1 -31h2v2h-2zm0 16h2v2h-2zm0 2h2v2h-2zm0 2h2v2h-2zm0 2h2v2h-2zm1 -13h2v2h-2zm0 2h2v2h-2zm0 11h2v2h-2zm0 7h2v2h-2zm0 2h2v2h-2zm1 -28h2v2h-2zm0 6h2v2h-2zm0 13h2v2h-2zm0 7h2v2h-2zm0 5h2v2h-2zm1 -34h2v2h-2zm0 6h2v2h-2zm0 3h2v2h-2zm0 5h2v2h-2zm0 15h2v2h-2zm0 8h2v2h-2zm1 -19h2v2h-2zm0 4h2v2h-2zm0 2h2v2h-2zm0 7h2v2h-2zm0 6h2v2h-2zm1 -33h2v2h-2zm0 9h2v2h-2zm0 1h2v2h-2zm0 2h2v2h-2zm0 32h2v2h-2zm1 -44h2v2h-2zm0 14h2v2h-2zm0 2h2v2h-2zm0 2h2v2h-2zm0 5h2v2h-2zm0 32h2v2h-2zm1 -50h2v2h-2zm0 11h2v2h-2zm0 4h2v2h-2zm0 5h2v2h-2zm0 5h2v2h-2zm1 -30h2v2h-2zm0 3h2v2h-2zm0 30h2v2h-2zm1 -21h2v2h-2zm0 2h2v2h-2zm0 2h2v2h-2zm0 4h2v2h-2zm0 5h2v2h-2zm1 -15h2v2h-2zm0 4h2v2h-2zm0 4h2v2h-2zm0 2h2v2h-2zm0 3h2v2h-2zm0 4h2v2h-2zm1 -28h2v2h-2zm0 8h2v2h-2zm0 5h2v2h-2zm0 36h2v2h-2zm1 -46h2v2h-2zm0 5h2v2h-2zm0 2h2v2h-2zm0 5h2v2h-2zm0 4h2v2h-2zm0 5h2v2h-2zm1 -16h2v2h-2zm0 3h2v2h-2zm0 4h2v2h-2zm0 9h2v2h-2zm0 2h2v2h-2zm0 10h2v2h-2zm1 -32h2v2h-2zm0 6h2v2h-2zm0 3h2v2h-2zm0 43h2v2h-2zm1 -48h2v2h-2zm0 7h2v2h-2zm0 4h2v2h-2zm0 2h2v2h-2zm0 10h2v2h-2zm1 -28h2v2h-2zm0 12h2v2h-2zm0 6h2v2h-2zm0 3h2v2h-2zm0 7h2v2h-2zm0 11h2v2h-2zm1 -50h2v2h-2zm0 14h2v2h-2zm0 4h2v2h-2zm0 16h2v2h-2zm1 -15h2v2h-2zm0 2h2v2h-2zm0 2h2v2h-2zm0 9h2v2h-2zm0 4h2v2h-2zm0 3h2v2h-2zm1 -23h2v2h-2zm0 7h2v2h-2zm0 2h2v2h-2zm0 7h2v2h-2zm1 -20h2v2h-2zm0 4h2v2h-2zm0 9h2v2h-2zm0 9h2v2h-2zm0 16h2v2h-2zm1 -31h2v2h-2zm0 6h2v2h-2zm0 2h2v2h-2zm0 15h2v2h-2zm0 11h2v2h-2zm1 -35h2v2h-2zm0 3h2v2h-2zm0 6h2v2h-2zm0 2h2v2h-2zm0 7h2v2h-2zm0 11h2v2h-2zm1 -38h2v2h-2zm0 10h2v2h-2zm0 4h2v2h-2zm0 24h2v2h-2zm1 -26h2v2h-2zm0 6h2v2h-2zm0 2h2v2h-2zm0 5h2v2h-2zm0 2h2v2h-2zm0 3h2v2h-2zm1 -34h2v2h-2zm0 18h2v2h-2zm0 9h2v2h-2zm0 7h2v2h-2zm0 3h2v2h-2zm1 -33h2v2h-2zm0 10h2v2h-2zm0 17h2v2h-2zm0 6h2v2h-2zm0 11h2v2h-2zm1 -37h2v2h-2zm0 3h2v2h-2zm0 2h2v2h-2zm0 2h2v2h-2zm0 4h2v2h-2zm1 -15h2v2h-2zm0 2h2v2h-2zm0 7h2v2h-2zm0 11h2v2h-2zm0 2h2v2h-2zm0 13h2v2h-2zm1 -39h2v2h-2zm0 15h2v2h-2zm0 2h2v2h-2zm0 19h2v2h-2zm1 -42h2v2h-2zm0 9h2v2h-2zm0 12h2v2h-2zm0 13h2v2h-2zm0 3h2v2h-2zm1 -25h2v2h-2zm0 5h2v2h-2zm0 4h2v2h-2zm0 2h2v2h-2zm0 19h2v2h-2zm0 16h2v2h-2zm1 -42h2v2h-2zm0 7h2v2h-2zm0 9h2v2h-2zm0 5h2v2h-2zm1 -34h2v2h-2zm0 3h2v2h-2zm0 3h2v2h-2zm0 10h2v2h-2zm0 23h2v2h-2zm1 -35h2v2h-2zm0 7h2v2h-2zm0 9h2v2h-2zm0 14h2v2h-2zm0 3h2v2h-2zm1 -26h2v2h-2zm0 11h2v2h-2zm0 2h2v2h-2zm0 5h2v2h-2zm0 5h2v2h-2zm1 -23h2v2h-2zm0 3h2v2h-2zm0 2h2v2h-2zm0 6h2v2h-2zm0 15h2v2h-2zm0 11h2v2h-2zm1 -30h2v2h-2zm0 4h2v2h-2zm0 2h2v2h-2zm0 13h2v2h-2zm1 -24h2v2h-2zm0 11h2v2h-2zm0 3h2v2h-2zm0 10h2v2h-2zm0 5h2v2h-2zm1 -35h2v2h-2zm0 24h2v2h-2zm0 6h2v2h-2zm0 5h2v2h-2zm1 -29h2v2h-2zm0 7h2v2h-2zm0 11h2v2h-2zm0 6h2v2h-2zm1 -30h2v2h-2zm0 6h2v2h-2zm0 5h2v2h-2zm0 11h2v2h-2zm1 -20h2v2h-2zm0 4h2v2h-2zm0 9h2v2h-2zm0 2h2v2h-2zm1 -6h2v2h-2zm0 11h2v2h-2zm0 5h2v2h-2zm0 3h2v2h-2zm0 11h2v2h-2zm1 -35h2v2h-2zm0 3h2v2h-2zm0 21h2v2h-2zm1 -33h2v2h-2zm0 9h2v2h-2zm0 3h2v2h-2zm0 6h2v2h-2zm0 5h2v2h-2zm0 21h2v2h-2zm1 -42h2v2h-2zm0 8h2v2h-2zm0 2h2v2h-2zm0 6h2v2h-2zm0 2h2v2h-2zm0 13h2v2h-2zm1 -17h2v2h-2zm0 9h2v2h-2zm0 2h2v2h-2zm0 3h2v2h-2zm1 -25h2v2h-2zm0 9h2v2h-2zm0 9h2v2h-2zm0 2h2v2h-2zm1 -18h2v2h-2zm0 2h2v2h-2zm0 7h2v2h-2zm0 2h2v2h-2zm0 2h2v2h-2zm0 3h2v2h-2zm1 -24h2v2h-2zm0 15h2v2h-2zm0 4h2v2h-2zm0 5h2v2h-2zm1 -18h2v2h-2zm0 2h2v2h-2zm0 16h2v2h-2zm0 10h2v2h-2zm0 2h2v2h-2zm0 3h2v2h-2zm1 -29h2v2h-2zm0 1h2v2h-2zm0 4h2v2h-2zm0 2h2v2h-2zm0 17h2v2h-2zm1 -34h2v2h-2zm0 8h2v2h-2zm0 2h2v2h-2zm0 1h2v2h-2zm0 8h2v2h-2zm1 -8h2v2h-2zm0 4h2v2h-2zm0 4h2v2h-2zm0 7h2v2h-2zm0 8h2v2h-2zm0 2h2v2h-2zm1 -28h2v2h-2zm0 2h2v2h-2zm0 11h2v2h-2zm0 5h2v2h-2zm0 10h2v2h-2zm1 -19h2v2h-2zm0 9h2v2h-2zm0 2h2v2h-2zm0 3h2v2h-2zm0 5h2v2h-2zm1 -28h2v2h-2zm0 3h2v2h-2zm0 6h2v2h-2zm0 7h2v2h-2zm0 10h2v2h-2zm0 2h2v2h-2zm1 -23h2v2h-2zm0 6h2v2h-2zm0 5h2v2h-2zm0 10h2v2h-2zm0 11h2v2h-2zm1 -30h2v2h-2zm0 2h2v2h-2zm0 4h2v2h-2zm0 3h2v2h-2zm1 -23h2v2h-2zm0 5h2v2h-2zm0 2h2v2h-2zm0 11h2v2h-2zm0 15h2v2h-2zm1 -33h2v2h-2zm0 20h2v2h-2zm0 10h2v2h-2zm0 5h2v2h-2zm0 3h2v2h-2zm1 -24h2v2h-2zm0 6h2v2h-2zm0 10h2v2h-2zm0 5h2v2h-2zm1 -32h2v2h-2zm0 4h2v2h-2zm0 7h2v2h-2zm0 4h2v2h-2zm0 7h2v2h-2zm0 2h2v2h-2zm1 -18h2v2h-2zm0 3h2v2h-2zm0 6h2v2h-2zm0 2h2v2h-2zm0 15h2v2h-2zm0 16h2v2h-2zm1 -39h2v2h-2zm0 4h2v2h-2zm0 2h2v2h-2zm0 5h2v2h-2zm0 10h2v2h-2zm1 -28h2v2h-2zm0 4h2v2h-2zm0 16h2v2h-2zm0 5h2v2h-2zm0 11h2v2h-2zm1 -41h2v2h-2zm0 14h2v2h-2zm0 2h2v2h-2zm0 2h2v2h-2zm1 -13h2v2h-2zm0 7h2v2h-2zm0 8h2v2h-2zm0 5h2v2h-2zm0 8h2v2h-2zm1 -26h2v2h-2zm0 3h2v2h-2zm0 4h2v2h-2zm0 4h2v2h-2zm0 2h2v2h-2zm0 7h2v2h-2zm1 -18h2v2h-2zm0 1h2v2h-2zm0 6h2v2h-2zm0 2h2v2h-2zm0 20h2v2h-2zm1 -44h2v2h-2zm0 16h2v2h-2zm0 2h2v2h-2zm0 15h2v2h-2zm0 8h2v2h-2zm1 -25h2v2h-2zm0 4h2v2h-2zm0 2h2v2h-2zm0 9h2v2h-2zm1 -13h2v2h-2zm0 4h2v2h-2zm0 2h2v2h-2zm0 7h2v2h-2zm0 2h2v2h-2zm1 -17h2v2h-2zm0 2h2v2h-2zm0 6h2v2h-2zm0 2h2v2h-2zm1 -17h2v2h-2zm0 6h2v2h-2zm0 3h2v2h-2zm0 6h2v2h-2zm0 7h2v2h-2zm1 -35h2v2h-2zm0 13h2v2h-2zm0 13h2v2h-2zm0 9h2v2h-2zm0 10h2v2h-2zm0 9h2v2h-2zm1 -50h2v2h-2zm0 9h2v2h-2zm0 15h2v2h-2zm0 9h2v2h-2zm0 3h2v2h-2zm1 -12h2v2h-2zm0 2h2v2h-2zm0 5h2v2h-2zm0 8h2v2h-2zm1 -39h2v2h-2zm0 11h2v2h-2zm0 5h2v2h-2zm0 2h2v2h-2zm0 11h2v2h-2zm0 7h2v2h-2zm1 -12h2v2h-2zm0 2h2v2h-2zm0 3h2v2h-2zm0 4h2v2h-2zm0 11h2v2h-2zm1 -33h2v2h-2zm0 2h2v2h-2zm0 2h2v2h-2zm0 9h2v2h-2zm0 7h2v2h-2zm0 5h2v2h-2zm1 -28h2v2h-2zm0 5h2v2h-2zm0 5h2v2h-2zm0 6h2v2h-2zm0 20h2v2h-2zm0 3h2v2h-2zm1 -36h2v2h-2zm0 7h2v2h-2zm0 2h2v2h-2zm0 9h2v2h-2zm0 4h2v2h-2zm1 -22h2v2h-2zm0 2h2v2h-2zm0 9h2v2h-2zm0 2h2v2h-2zm0 12h2v2h-2zm0 8h2v2h-2zm1 -35h2v2h-2zm0 7h2v2h-2zm0 6h2v2h-2zm0 2h2v2h-2zm0 9h2v2h-2zm1 -27h2v2h-2zm0 18h2v2h-2zm0 23h2v2h-2zm0 3h2v2h-2zm1 -42h2v2h-2zm0 1h2v2h-2zm0 15h2v2h-2zm0 7h2v2h-2zm0 2h2v2h-2zm0 6h2v2h-2zm1 -36h2v2h-2zm0 8h2v2h-2zm0 13h2v2h-2zm0 2h2v2h-2zm0 7h2v2h-2zm0 3h2v2h-2zm1 -28h2v2h-2zm0 5h2v2h-2zm0 5h2v2h-2zm0 13h2v2h-2zm0 5h2v2h-2zm1 -30h2v2h-2zm0 2h2v2h-2zm0 12h2v2h-2zm0 4h2v2h-2zm0 2h2v2h-2zm0 18h2v2h-2zm1 -44h2v2h-2zm0 5h2v2h-2zm0 15h2v2h-2zm0 6h2v2h-2zm0 3h2v2h-2zm0 18h2v2h-2zm1 -36h2v2h-2zm0 13h2v2h-2zm0 9h2v2h-2zm0 3h2v2h-2zm0 3h2v2h-2zm1 -28h2v2h-2zm0 13h2v2h-2zm0 17h2v2h-2zm0 3h2v2h-2zm0 3h2v2h-2zm1 -34h2v2h-2zm0 2h2v2h-2zm0 3h2v2h-2zm0 6h2v2h-2zm0 7h2v2h-2zm0 19h2v2h-2zm1 -39h2v2h-2zm0 13h2v2h-2zm0 7h2v2h-2zm0 8h2v2h-2zm1 -30h2v2h-2zm0 9h2v2h-2zm0 6h2v2h-2zm0 5h2v2h-2zm0 2h2v2h-2zm1 -15h2v2h-2zm0 8h2v2h-2zm0 2h2v2h-2zm0 3h2v2h-2zm0 4h2v2h-2zm0 3h2v2h-2zm1 -18h2v2h-2zm0 8h2v2h-2zm0 7h2v2h-2zm0 3h2v2h-2zm0 14h2v2h-2zm1 -55h2v2h-2zm0 23h2v2h-2zm0 2h2v2h-2zm0 11h2v2h-2zm0 2h2v2h-2zm1 -25h2v2h-2zm0 12h2v2h-2zm0 9h2v2h-2zm0 2h2v2h-2zm0 16h2v2h-2zm1 -41h2v2h-2zm0 12h2v2h-2zm0 18h2v2h-2zm0 3h2v2h-2zm0 2h2v2h-2zm1 -30h2v2h-2zm0 5h2v2h-2zm0 10h2v2h-2zm0 3h2v2h-2zm0 7h2v2h-2zm1 -30h2v2h-2zm0 7h2v2h-2zm0 13h2v2h-2zm0 10h2v2h-2zm0 5h2v2h-2zm0 3h2v2h-2zm1 -31h2v2h-2zm0 11h2v2h-2zm0 15h2v2h-2zm0 5h2v2h-2zm0 10h2v2h-2zm1 -38h2v2h-2zm0 4h2v2h-2zm0 9h2v2h-2zm0 2h2v2h-2zm0 8h2v2h-2zm1 -33h2v2h-2zm0 5h2v2h-2zm0 5h2v2h-2zm0 2h2v2h-2zm0 4h2v2h-2zm0 2h2v2h-2zm1 -11h2v2h-2zm0 20h2v2h-2zm0 6h2v2h-2zm0 8h2v2h-2zm1 -31h2v2h-2zm0 6h2v2h-2zm0 4h2v2h-2zm0 10h2v2h-2zm1 -21h2v2h-2zm0 1h2v2h-2zm0 15h2v2h-2zm0 5h2v2h-2zm1 -20h2v2h-2zm0 2h2v2h-2zm0 8h2v2h-2zm0 5h2v2h-2zm1 -23h2v2h-2zm0 5h2v2h-2zm0 3h2v2h-2zm0 2h2v2h-2zm0 8h2v2h-2zm0 7h2v2h-2zm1 -20h2v2h-2zm0 2h2v2h-2zm0 7h2v2h-2zm0 7h2v2h-2zm0 2h2v2h-2zm0 2h2v2h-2zm1 -13h2v2h-2zm0 4h2v2h-2zm0 15h2v2h-2zm0 5h2v2h-2zm1 -38h2v2h-2zm0 9h2v2h-2zm0 9h2v2h-2zm0 7h2v2h-2zm0 5h2v2h-2zm1 -27h2v2h-2zm0 4h2v2h-2zm0 9h2v2h-2zm0 7h2v2h-2zm0 15h2v2h-2zm1 -24h2v2h-2zm0 2h2v2h-2zm0 14h2v2h-2zm0 3h2v2h-2zm0 2h2v2h-2zm1 -25h2v2h-2zm0 4h2v2h-2zm0 2h2v2h-2zm0 7h2v2h-2zm0 32h2v2h-2zm1 -43h2v2h-2zm0 2h2v2h-2zm0 4h2v2h-2zm0 9h2v2h-2zm0 17h2v2h-2zm1 -45h2v2h-2zm0 11h2v2h-2zm0 6h2v2h-2zm0 2h2v2h-2zm0 17h2v2h-2zm1 -19h2v2h-2zm0 4h2v2h-2zm0 3h2v2h-2zm0 2h2v2h-2zm0 8h2v2h-2zm1 -28h2v2h-2zm0 13h2v2h-2zm0 12h2v2h-2zm0 3h2v2h-2zm0 2h2v2h-2zm0 6h2v2h-2zm1 -29h2v2h-2zm0 2h2v2h-2zm0 11h2v2h-2zm0 5h2v2h-2zm1 -25h2v2h-2zm0 4h2v2h-2zm0 7h2v2h-2zm0 2h2v2h-2zm0 7h2v2h-2zm0 5h2v2h-2zm1 -30h2v2h-2zm0 5h2v2h-2zm0 7h2v2h-2zm0 18h2v2h-2zm0 3h2v2h-2zm0 5h2v2h-2zm1 -45h2v2h-2zm0 10h2v2h-2zm0 7h2v2h-2zm0 4h2v2h-2zm1 -11h2v2h-2zm0 4h2v2h-2zm0 2h2v2h-2zm0 1h2v2h-2zm0 6h2v2h-2zm0 25h2v2h-2zm1 -38h2v2h-2zm0 2h2v2h-2zm0 2h2v2h-2zm0 7h2v2h-2zm0 9h2v2h-2zm1 -14h2v2h-2zm0 5h2v2h-2zm0 2h2v2h-2zm0 14h2v2h-2zm1 -23h2v2h-2zm0 3h2v2h-2zm0 2h2v2h-2zm0 21h2v2h-2zm0 8h2v2h-2zm1 -34h2v2h-2zm0 2h2v2h-2zm0 5h2v2h-2zm0 6h2v2h-2zm0 5h2v2h-2zm0 8h2v2h-2zm1 -31h2v2h-2zm0 5h2v2h-2zm0 5h2v2h-2zm0 4h2v2h-2zm0 14h2v2h-2zm1 -23h2v2h-2zm0 7h2v2h-2zm0 2h2v2h-2zm0 39h2v2h-2zm1 -61h2v2h-2zm0 3h2v2h-2zm0 13h2v2h-2zm0 8h2v2h-2zm0 5h2v2h-2zm0 15h2v2h-2zm1 -36h2v2h-2zm0 8h2v2h-2zm0 6h2v2h-2zm0 9h2v2h-2zm0 8h2v2h-2zm1 -40h2v2h-2zm0 9h2v2h-2zm0 3h2v2h-2zm0 28h2v2h-2zm0 2h2v2h-2zm1 -33h2v2h-2zm0 10h2v2h-2zm0 2h2v2h-2zm0 4h2v2h-2zm0 2h2v2h-2zm0 18h2v2h-2zm1 -42h2v2h-2zm0 16h2v2h-2zm0 4h2v2h-2zm0 4h2v2h-2zm0 5h2v2h-2zm1 -13h2v2h-2zm0 8h2v2h-2zm0 3h2v2h-2zm0 4h2v2h-2zm0 3h2v2h-2zm1 -25h2v2h-2zm0 7h2v2h-2zm0 8h2v2h-2zm0 3h2v2h-2zm0 4h2v2h-2zm1 -20h2v2h-2zm0 2h2v2h-2zm0 5h2v2h-2zm0 4h2v2h-2zm0 23h2v2h-2zm1 -29h2v2h-2zm0 2h2v2h-2zm0 4h2v2h-2zm0 7h2v2h-2zm0 2h2v2h-2zm0 6h2v2h-2zm1 -23h2v2h-2zm0 6h2v2h-2zm0 2h2v2h-2zm0 7h2v2h-2zm0 5h2v2h-2zm1 -21h2v2h-2zm0 1h2v2h-2zm0 2h2v2h-2zm0 6h2v2h-2zm0 7h2v2h-2zm1 -15h2v2h-2zm0 10h2v2h-2zm0 3h2v2h-2zm0 10h2v2h-2zm0 11h2v2h-2zm1 -37h2v2h-2zm0 5h2v2h-2zm0 4h2v2h-2zm1 -16h2v2h-2zm0 16h2v2h-2zm0 2h2v2h-2zm0 2h2v2h-2zm0 7h2v2h-2zm1 -24h2v2h-2zm0 4h2v2h-2zm0 2h2v2h-2zm0 7h2v2h-2zm0 22h2v2h-2zm1 -20h2v2h-2zm0 5h2v2h-2zm0 4h2v2h-2zm0 3h2v2h-2zm1 -23h2v2h-2zm0 5h2v2h-2zm0 8h2v2h-2zm0 5h2v2h-2zm0 8h2v2h-2zm1 -30h2v2h-2zm0 4h2v2h-2zm0 5h2v2h-2zm0 4h2v2h-2zm0 19h2v2h-2zm1 -35h2v2h-2zm0 7h2v2h-2zm0 5h2v2h-2zm0 8h2v2h-2zm0 7h2v2h-2zm0 14h2v2h-2zm1 -38h2v2h-2zm0 11h2v2h-2zm0 9h2v2h-2zm0 10h2v2h-2zm0 2h2v2h-2zm0 13h2v2h-2zm1 -46h2v2h-2zm0 1h2v2h-2zm0 4h2v2h-2zm0 2h2v2h-2zm0 16h2v2h-2zm1 -25h2v2h-2zm0 10h2v2h-2zm0 2h2v2h-2zm0 11h2v2h-2zm0 2h2v2h-2zm1 -5h2v2h-2zm0 7h2v2h-2zm0 3h2v2h-2zm0 5h2v2h-2zm0 6h2v2h-2zm1 -31h2v2h-2zm0 13h2v2h-2zm0 2h2v2h-2zm0 2h2v2h-2zm1 -4h2v2h-2zm0 2h2v2h-2zm0 2h2v2h-2zm0 6h2v2h-2zm0 8h2v2h-2zm1 -50h2v2h-2zm0 12h2v2h-2zm0 2h2v2h-2zm0 5h2v2h-2zm0 2h2v2h-2zm0 2h2v2h-2zm1 9h2v2h-2zm0 7h2v2h-2zm0 3h2v2h-2zm0 2h2v2h-2zm0 3h2v2h-2zm1 -31h2v2h-2zm0 5h2v2h-2zm0 11h2v2h-2zm0 7h2v2h-2zm0 18h2v2h-2zm1 -48h2v2h-2zm0 2h2v2h-2zm0 3h2v2h-2zm0 7h2v2h-2zm0 6h2v2h-2zm0 2h2v2h-2zm1 -15h2v2h-2zm0 4h2v2h-2zm0 18h2v2h-2zm0 28h2v2h-2zm0 4h2v2h-2zm1 -56h2v2h-2zm0 9h2v2h-2zm0 2h2v2h-2zm0 4h2v2h-2zm0 23h2v2h-2zm0 18h2v2h-2zm1 -54h2v2h-2zm0 2h2v2h-2zm0 5h2v2h-2zm0 4h2v2h-2zm0 7h2v2h-2zm0 2h2v2h-2zm1 -11h2v2h-2zm0 2h2v2h-2zm0 4h2v2h-2zm0 5h2v2h-2zm0 16h2v2h-2zm1 -36h2v2h-2zm0 4h2v2h-2zm0 11h2v2h-2zm0 5h2v2h-2zm0 5h2v2h-2zm1 -21h2v2h-2zm0 3h2v2h-2zm0 2h2v2h-2zm0 2h2v2h-2zm0 4h2v2h-2zm0 10h2v2h-2zm1 -16h2v2h-2zm0 2h2v2h-2zm0 2h2v2h-2zm0 9h2v2h-2zm0 14h2v2h-2zm1 -41h2v2h-2zm0 10h2v2h-2zm0 6h2v2h-2zm0 2h2v2h-2zm0 2h2v2h-2zm0 7h2v2h-2zm1 -15h2v2h-2zm0 2h2v2h-2zm0 6h2v2h-2zm0 13h2v2h-2zm0 2h2v2h-2zm0 9h2v2h-2zm1 -45h2v2h-2zm0 6h2v2h-2zm0 9h2v2h-2zm0 9h2v2h-2zm0 2h2v2h-2zm1 -18h2v2h-2zm0 2h2v2h-2zm0 9h2v2h-2zm0 5h2v2h-2zm0 4h2v2h-2zm0 6h2v2h-2zm1 -30h2v2h-2zm0 2h2v2h-2zm0 11h2v2h-2zm0 9h2v2h-2zm0 16h2v2h-2zm1 -31h2v2h-2zm0 4h2v2h-2zm0 9h2v2h-2zm0 7h2v2h-2zm0 3h2v2h-2zm1 -23h2v2h-2zm0 6h2v2h-2zm0 17h2v2h-2zm0 11h2v2h-2zm1 -41h2v2h-2zm0 2h2v2h-2zm0 7h2v2h-2zm0 4h2v2h-2zm0 2h2v2h-2zm0 2h2v2h-2zm1 -8h2v2h-2zm0 4h2v2h-2zm0 11h2v2h-2zm0 3h2v2h-2zm1 -21h2v2h-2zm0 3h2v2h-2zm0 4h2v2h-2zm0 2h2v2h-2zm0 2h2v2h-2zm1 -10h2v2h-2zm0 6h2v2h-2zm0 7h2v2h-2zm0 10h2v2h-2zm0 8h2v2h-2zm0 3h2v2h-2zm1 -32h2v2h-2zm0 8h2v2h-2zm0 3h2v2h-2zm0 4h2v2h-2zm1 -24h2v2h-2zm0 13h2v2h-2zm0 2h2v2h-2zm0 5h2v2h-2zm0 2h2v2h-2zm1 -5h2v2h-2zm0 5h2v2h-2zm0 5h2v2h-2zm0 14h2v2h-2zm0 20h2v2h-2zm1 -61h2v2h-2zm0 9h2v2h-2zm0 4h2v2h-2zm0 2h2v2h-2zm0 15h2v2h-2zm1 -19h2v2h-2zm0 4h2v2h-2zm0 2h2v2h-2zm0 3h2v2h-2zm0 4h2v2h-2zm0 8h2v2h-2zm1 -25h2v2h-2zm0 8h2v2h-2zm0 2h2v2h-2zm0 3h2v2h-2zm0 7h2v2h-2zm0 18h2v2h-2zm1 -41h2v2h-2zm0 7h2v2h-2zm0 2h2v2h-2zm0 11h2v2h-2zm1 -27h2v2h-2zm0 9h2v2h-2zm0 7h2v2h-2zm0 7h2v2h-2zm0 32h2v2h-2zm1 -52h2v2h-2zm0 4h2v2h-2zm0 13h2v2h-2zm0 3h2v2h-2zm0 7h2v2h-2zm0 5h2v2h-2zm1 -28h2v2h-2zm0 9h2v2h-2zm0 2h2v2h-2zm0 15h2v2h-2zm1 -19h2v2h-2zm0 4h2v2h-2zm0 5h2v2h-2zm0 18h2v2h-2zm1 -44h2v2h-2zm0 15h2v2h-2zm0 2h2v2h-2zm0 2h2v2h-2zm0 7h2v2h-2zm0 10h2v2h-2zm1 -19h2v2h-2zm0 6h2v2h-2zm0 3h2v2h-2zm0 4h2v2h-2zm0 21h2v2h-2zm1 -34h2v2h-2zm0 4h2v2h-2zm0 17h2v2h-2zm0 13h2v2h-2zm1 -41h2v2h-2zm0 3h2v2h-2zm0 15h2v2h-2zm0 19h2v2h-2zm1 -44h2v2h-2zm0 7h2v2h-2zm0 7h2v2h-2zm0 9h2v2h-2zm0 41h2v2h-2zm1 -61h2v2h-2zm0 9h2v2h-2zm0 2h2v2h-2zm0 11h2v2h-2zm0 5h2v2h-2zm0 11h2v2h-2zm1 -36h2v2h-2zm0 7h2v2h-2zm0 8h2v2h-2zm0 15h2v2h-2zm0 3h2v2h-2zm1 -20h2v2h-2zm0 2h2v2h-2zm0 3h2v2h-2zm0 4h2v2h-2zm1 -20h2v2h-2zm0 2h2v2h-2zm0 5h2v2h-2zm0 16h2v2h-2zm0 3h2v2h-2zm0 2h2v2h-2zm1 -38h2v2h-2zm0 17h2v2h-2zm0 6h2v2h-2zm0 3h2v2h-2zm0 12h2v2h-2zm1 -19h2v2h-2zm0 2h2v2h-2zm0 12h2v2h-2zm0 3h2v2h-2zm0 5h2v2h-2zm1 -29h2v2h-2zm0 3h2v2h-2zm0 6h2v2h-2zm0 5h2v2h-2zm0 2h2v2h-2zm1 -23h2v2h-2zm0 14h2v2h-2zm0 2h2v2h-2zm0 12h2v2h-2zm0 11h2v2h-2zm0 14h2v2h-2zm1 -61h2v2h-2zm0 20h2v2h-2zm0 2h2v2h-2zm0 7h2v2h-2zm0 2h2v2h-2zm1 -15h2v2h-2zm0 15h2v2h-2zm0 5h2v2h-2zm0 3h2v2h-2zm1 -30h2v2h-2zm0 2h2v2h-2zm0 7h2v2h-2zm0 8h2v2h-2zm0 7h2v2h-2zm0 3h2v2h-2zm1 -23h2v2h-2zm0 7h2v2h-2zm0 11h2v2h-2zm0 10h2v2h-2zm1 -28h2v2h-2zm0 5h2v2h-2zm0 6h2v2h-2zm0 2h2v2h-2zm0 18h2v2h-2zm0 6h2v2h-2zm1 -26h2v2h-2zm0 2h2v2h-2zm0 3h2v2h-2zm0 2h2v2h-2zm0 5h2v2h-2zm1 -25h2v2h-2zm0 7h2v2h-2zm0 4h2v2h-2zm0 4h2v2h-2zm0 5h2v2h-2zm1 -16h2v2h-2zm0 3h2v2h-2zm0 4h2v2h-2zm0 9h2v2h-2zm0 2h2v2h-2zm0 3h2v2h-2zm1 -20h2v2h-2zm0 6h2v2h-2zm0 2h2v2h-2zm0 23h2v2h-2zm1 -36h2v2h-2zm0 7h2v2h-2zm0 4h2v2h-2zm0 2h2v2h-2zm0 2h2v2h-2zm1 -13h2v2h-2zm0 9h2v2h-2zm0 2h2v2h-2zm0 2h2v2h-2zm0 3h2v2h-2zm0 15h2v2h-2zm1 -28h2v2h-2zm0 6h2v2h-2zm0 2h2v2h-2zm0 5h2v2h-2zm0 7h2v2h-2zm0 21h2v2h-2zm1 -46h2v2h-2zm0 5h2v2h-2zm0 17h2v2h-2zm0 14h2v2h-2zm1 -31h2v2h-2zm0 2h2v2h-2zm0 4h2v2h-2zm0 2h2v2h-2zm0 20h2v2h-2zm1 -29h2v2h-2zm0 3h2v2h-2zm0 2h2v2h-2zm0 4h2v2h-2zm0 5h2v2h-2zm0 10h2v2h-2zm1 -28h2v2h-2zm0 5h2v2h-2zm0 2h2v2h-2zm0 8h2v2h-2zm1 -13h2v2h-2zm0 7h2v2h-2zm0 4h2v2h-2zm0 12h2v2h-2zm1 -27h2v2h-2zm0 2h2v2h-2zm0 11h2v2h-2zm0 7h2v2h-2zm0 2h2v2h-2zm1 -5h2v2h-2zm0 5h2v2h-2zm0 2h2v2h-2zm0 6h2v2h-2zm1 -26h2v2h-2zm0 2h2v2h-2zm0 5h2v2h-2zm0 2h2v2h-2zm0 19h2v2h-2zm1 -28h2v2h-2zm0 2h2v2h-2zm0 16h2v2h-2zm0 8h2v2h-2zm0 5h2v2h-2zm1 -28h2v2h-2zm0 6h2v2h-2zm0 14h2v2h-2zm0 3h2v2h-2zm0 22h2v2h-2zm1 -45h2v2h-2zm0 2h2v2h-2zm0 2h2v2h-2zm0 4h2v2h-2zm0 5h2v2h-2zm0 18h2v2h-2zm1 -25h2v2h-2zm0 2h2v2h-2zm0 5h2v2h-2zm0 2h2v2h-2zm0 8h2v2h-2zm0 5h2v2h-2zm1 -36h2v2h-2zm0 1h2v2h-2zm0 9h2v2h-2zm0 8h2v2h-2zm0 15h2v2h-2zm1 -23h2v2h-2zm0 4h2v2h-2zm0 2h2v2h-2zm0 2h2v2h-2zm0 5h2v2h-2zm0 13h2v2h-2zm1 -35h2v2h-2zm0 13h2v2h-2zm0 2h2v2h-2zm0 2h2v2h-2zm0 3h2v2h-2zm0 4h2v2h-2zm1 -18h2v2h-2zm0 1h2v2h-2zm0 6h2v2h-2zm0 17h2v2h-2zm1 -23h2v2h-2zm0 4h2v2h-2zm0 6h2v2h-2zm0 3h2v2h-2zm0 7h2v2h-2zm0 14h2v2h-2zm1 -41h2v2h-2zm0 6h2v2h-2zm0 9h2v2h-2zm0 2h2v2h-2zm0 3h2v2h-2zm0 15h2v2h-2zm1 -13h2v2h-2zm0 2h2v2h-2zm0 3h2v2h-2zm0 5h2v2h-2zm1 -25h2v2h-2zm0 2h2v2h-2zm0 2h2v2h-2zm0 2h2v2h-2zm0 17h2v2h-2zm1 -17h2v2h-2zm0 2h2v2h-2zm0 2h2v2h-2zm0 5h2v2h-2zm0 10h2v2h-2zm0 6h2v2h-2zm1 -29h2v2h-2zm0 2h2v2h-2zm0 4h2v2h-2zm0 9h2v2h-2zm0 8h2v2h-2zm1 -30h2v2h-2zm0 4h2v2h-2zm0 7h2v2h-2zm0 2h2v2h-2zm1 -13h2v2h-2zm0 2h2v2h-2zm0 13h2v2h-2zm0 3h2v2h-2zm0 7h2v2h-2zm0 3h2v2h-2zm1 -24h2v2h-2zm0 3h2v2h-2zm0 6h2v2h-2zm0 9h2v2h-2zm0 3h2v2h-2zm1 -20h2v2h-2zm0 2h2v2h-2zm0 4h2v2h-2zm0 2h2v2h-2zm0 15h2v2h-2zm0 2h2v2h-2zm1 -26h2v2h-2zm0 5h2v2h-2zm0 2h2v2h-2zm0 9h2v2h-2zm0 8h2v2h-2zm0 5h2v2h-2zm1 -26h2v2h-2zm0 8h2v2h-2zm0 3h2v2h-2zm0 12h2v2h-2zm0 6h2v2h-2zm1 -27h2v2h-2zm0 2h2v2h-2zm0 2h2v2h-2zm0 2h2v2h-2zm0 3h2v2h-2zm0 2h2v2h-2zm1 -15h2v2h-2zm0 4h2v2h-2zm0 4h2v2h-2zm0 7h2v2h-2zm0 16h2v2h-2zm1 -34h2v2h-2zm0 7h2v2h-2zm0 6h2v2h-2zm0 15h2v2h-2zm0 6h2v2h-2zm1 -27h2v2h-2zm0 4h2v2h-2zm0 2h2v2h-2zm0 10h2v2h-2zm0 3h2v2h-2zm0 2h2v2h-2zm1 -28h2v2h-2zm0 11h2v2h-2zm0 2h2v2h-2zm0 5h2v2h-2zm0 13h2v2h-2zm1 -28h2v2h-2zm0 4h2v2h-2zm0 4h2v2h-2zm0 2h2v2h-2zm0 10h2v2h-2zm1 -28h2v2h-2zm0 5h2v2h-2zm0 5h2v2h-2zm0 15h2v2h-2zm1 -17h2v2h-2zm0 4h2v2h-2zm0 2h2v2h-2zm0 2h2v2h-2zm0 9h2v2h-2zm1 -24h2v2h-2zm0 6h2v2h-2zm0 5h2v2h-2zm0 2h2v2h-2zm0 9h2v2h-2zm1 -26h2v2h-2zm0 1h2v2h-2zm0 9h2v2h-2zm0 7h2v2h-2zm0 2h2v2h-2zm1 -4h2v2h-2zm0 4h2v2h-2zm0 7h2v2h-2zm0 8h2v2h-2zm0 8h2v2h-2zm1 -29h2v2h-2zm0 6h2v2h-2zm0 2h2v2h-2zm0 5h2v2h-2zm0 23h2v2h-2zm1 -34h2v2h-2zm0 6h2v2h-2zm0 5h2v2h-2zm0 23h2v2h-2zm1 -36h2v2h-2zm0 11h2v2h-2zm0 2h2v2h-2zm0 19h2v2h-2zm1 -41h2v2h-2zm0 4h2v2h-2zm0 9h2v2h-2zm0 9h2v2h-2zm0 13h2v2h-2zm1 -29h2v2h-2zm0 7h2v2h-2zm0 2h2v2h-2zm0 9h2v2h-2zm0 3h2v2h-2zm0 5h2v2h-2zm1 -33h2v2h-2zm0 16h2v2h-2zm0 2h2v2h-2zm0 3h2v2h-2zm0 18h2v2h-2zm1 -36h2v2h-2zm0 5h2v2h-2zm0 4h2v2h-2zm0 19h2v2h-2zm1 -24h2v2h-2zm0 5h2v2h-2zm0 6h2v2h-2zm0 5h2v2h-2zm0 10h2v2h-2zm1 -38h2v2h-2zm0 8h2v2h-2zm0 4h2v2h-2zm0 7h2v2h-2zm0 9h2v2h-2zm1 -7h2v2h-2zm0 2h2v2h-2zm0 3h2v2h-2zm0 4h2v2h-2zm1 -30h2v2h-2zm0 15h2v2h-2zm0 6h2v2h-2zm0 33h2v2h-2zm1 -52h2v2h-2zm0 11h2v2h-2zm0 4h2v2h-2zm0 4h2v2h-2zm0 7h2v2h-2zm1 -18h2v2h-2zm0 5h2v2h-2zm0 6h2v2h-2zm0 9h2v2h-2zm0 17h2v2h-2zm1 -44h2v2h-2zm0 9h2v2h-2zm0 3h2v2h-2zm0 4h2v2h-2zm0 2h2v2h-2zm0 26h2v2h-2zm1 -30h2v2h-2zm0 4h2v2h-2zm0 2h2v2h-2zm0 10h2v2h-2zm0 5h2v2h-2zm1 -26h2v2h-2zm0 9h2v2h-2zm0 2h2v2h-2zm0 3h2v2h-2zm1 -14h2v2h-2zm0 7h2v2h-2zm0 4h2v2h-2zm0 3h2v2h-2zm0 25h2v2h-2zm1 -43h2v2h-2zm0 7h2v2h-2zm0 2h2v2h-2zm0 4h2v2h-2zm0 7h2v2h-2zm0 19h2v2h-2zm1 -37h2v2h-2zm0 11h2v2h-2zm0 5h2v2h-2zm0 4h2v2h-2zm0 11h2v2h-2zm1 -35h2v2h-2zm0 13h2v2h-2zm0 7h2v2h-2zm0 2h2v2h-2zm0 2h2v2h-2zm0 11h2v2h-2zm1 -42h2v2h-2zm0 11h2v2h-2zm0 13h2v2h-2zm0 3h2v2h-2zm0 2h2v2h-2zm0 10h2v2h-2zm1 -28h2v2h-2zm0 3h2v2h-2zm0 13h2v2h-2zm0 7h2v2h-2zm1 -16h2v2h-2zm0 6h2v2h-2zm0 3h2v2h-2zm0 2h2v2h-2zm0 2h2v2h-2zm1 -27h2v2h-2zm0 10h2v2h-2zm0 10h2v2h-2zm0 21h2v2h-2zm1 -41h2v2h-2zm0 18h2v2h-2zm0 2h2v2h-2zm0 21h2v2h-2zm1 -38h2v2h-2zm0 11h2v2h-2zm0 4h2v2h-2zm0 2h2v2h-2zm0 7h2v2h-2zm1 -22h2v2h-2zm0 5h2v2h-2zm0 10h2v2h-2zm0 13h2v2h-2zm0 8h2v2h-2zm1 -16h2v2h-2zm0 2h2v2h-2zm0 6h2v2h-2zm0 5h2v2h-2zm1 -20h2v2h-2zm0 2h2v2h-2zm0 3h2v2h-2zm0 7h2v2h-2zm0 8h2v2h-2zm0 6h2v2h-2zm1 -34h2v2h-2zm0 8h2v2h-2zm0 15h2v2h-2zm0 8h2v2h-2zm0 7h2v2h-2zm1 -30h2v2h-2zm0 2h2v2h-2zm0 13h2v2h-2zm0 2h2v2h-2zm1 -28h2v2h-2zm0 11h2v2h-2zm0 2h2v2h-2zm0 3h2v2h-2zm0 18h2v2h-2zm1 -29h2v2h-2zm0 11h2v2h-2zm0 2h2v2h-2zm0 2h2v2h-2zm0 8h2v2h-2zm1 -32h2v2h-2zm0 9h2v2h-2zm0 4h2v2h-2zm0 4h2v2h-2zm0 7h2v2h-2zm1 -20h2v2h-2zm0 7h2v2h-2zm0 2h2v2h-2zm0 4h2v2h-2zm0 5h2v2h-2zm0 13h2v2h-2zm1 -22h2v2h-2zm0 4h2v2h-2zm0 7h2v2h-2zm0 6h2v2h-2zm1 -23h2v2h-2zm0 4h2v2h-2zm0 9h2v2h-2zm0 10h2v2h-2zm1 -15h2v2h-2zm0 2h2v2h-2zm0 18h2v2h-2zm0 6h2v2h-2zm1 -32h2v2h-2zm0 8h2v2h-2zm0 3h2v2h-2zm0 4h2v2h-2zm0 8h2v2h-2zm1 -26h2v2h-2zm0 3h2v2h-2zm0 6h2v2h-2zm0 5h2v2h-2zm1 -27h2v2h-2zm0 22h2v2h-2zm0 5h2v2h-2zm0 4h2v2h-2zm0 3h2v2h-2zm0 5h2v2h-2zm1 -35h2v2h-2zm0 3h2v2h-2zm0 22h2v2h-2zm0 2h2v2h-2zm0 3h2v2h-2zm0 8h2v2h-2zm1 -33h2v2h-2zm0 11h2v2h-2zm0 2h2v2h-2zm0 2h2v2h-2zm1 -11h2v2h-2zm0 3h2v2h-2zm0 6h2v2h-2zm0 7h2v2h-2zm0 8h2v2h-2zm0 8h2v2h-2zm1 -41h2v2h-2zm0 5h2v2h-2zm0 20h2v2h-2zm0 2h2v2h-2zm0 6h2v2h-2zm1 -15h2v2h-2zm0 5h2v2h-2zm0 10h2v2h-2zm0 26h2v2h-2zm1 -41h2v2h-2zm0 2h2v2h-2zm0 5h2v2h-2zm0 5h2v2h-2zm0 5h2v2h-2zm0 9h2v2h-2zm1 -44h2v2h-2zm0 18h2v2h-2zm0 5h2v2h-2zm0 2h2v2h-2zm0 2h2v2h-2zm0 3h2v2h-2zm1 -16h2v2h-2zm0 13h2v2h-2zm0 3h2v2h-2zm0 5h2v2h-2zm1 -33h2v2h-2zm0 1h2v2h-2zm0 6h2v2h-2zm0 16h2v2h-2zm0 2h2v2h-2zm0 6h2v2h-2zm1 -21h2v2h-2zm0 8h2v2h-2zm0 3h2v2h-2zm0 2h2v2h-2zm1 -15h2v2h-2zm0 2h2v2h-2zm0 4h2v2h-2zm0 7h2v2h-2zm1 -7h2v2h-2zm0 2h2v2h-2zm0 7h2v2h-2zm0 10h2v2h-2zm0 3h2v2h-2zm0 3h2v2h-2zm1 -34h2v2h-2zm0 5h2v2h-2zm0 13h2v2h-2zm0 2h2v2h-2zm0 3h2v2h-2zm1 -33h2v2h-2zm0 8h2v2h-2zm0 9h2v2h-2zm0 2h2v2h-2zm0 17h2v2h-2zm1 -33h2v2h-2zm0 12h2v2h-2zm0 2h2v2h-2zm0 6h2v2h-2zm0 5h2v2h-2zm0 26h2v2h-2zm1 -49h2v2h-2zm0 10h2v2h-2zm0 8h2v2h-2zm0 5h2v2h-2zm0 5h2v2h-2zm0 39h2v2h-2zm1 -59h2v2h-2zm0 6h2v2h-2zm0 4h2v2h-2zm0 3h2v2h-2zm0 15h2v2h-2zm1 -42h2v2h-2zm0 11h2v2h-2zm0 2h2v2h-2zm0 11h2v2h-2zm0 13h2v2h-2zm0 5h2v2h-2zm1 -24h2v2h-2zm0 4h2v2h-2zm0 2h2v2h-2zm0 24h2v2h-2zm1 -37h2v2h-2zm0 11h2v2h-2zm0 2h2v2h-2zm0 3h2v2h-2zm0 21h2v2h-2zm1 -37h2v2h-2zm0 3h2v2h-2zm0 2h2v2h-2zm0 11h2v2h-2zm0 7h2v2h-2zm0 11h2v2h-2zm1 -31h2v2h-2zm0 8h2v2h-2zm0 7h2v2h-2zm0 5h2v2h-2zm0 8h2v2h-2zm1 -31h2v2h-2zm0 7h2v2h-2zm0 2h2v2h-2zm0 17h2v2h-2zm1 -30h2v2h-2zm0 2h2v2h-2zm0 9h2v2h-2zm0 9h2v2h-2zm0 2h2v2h-2zm0 26h2v2h-2zm1 -39h2v2h-2zm0 6h2v2h-2zm0 2h2v2h-2zm0 5h2v2h-2zm0 30h2v2h-2zm1 -43h2v2h-2zm0 6h2v2h-2zm0 12h2v2h-2zm0 8h2v2h-2zm1 -31h2v2h-2zm0 11h2v2h-2zm0 5h2v2h-2zm0 4h2v2h-2zm1 -13h2v2h-2zm0 2h2v2h-2zm0 7h2v2h-2zm0 2h2v2h-2zm0 2h2v2h-2zm1 -31h2v2h-2zm0 18h2v2h-2zm0 4h2v2h-2zm0 2h2v2h-2zm0 10h2v2h-2zm1 -23h2v2h-2zm0 5h2v2h-2zm0 6h2v2h-2zm0 2h2v2h-2zm0 35h2v2h-2zm1 -46h2v2h-2zm0 7h2v2h-2zm0 2h2v2h-2zm0 2h2v2h-2zm0 13h2v2h-2zm0 2h2v2h-2zm1 -35h2v2h-2zm0 7h2v2h-2zm0 13h2v2h-2zm0 5h2v2h-2zm0 8h2v2h-2zm1 -23h2v2h-2zm0 2h2v2h-2zm0 4h2v2h-2zm0 2h2v2h-2zm0 7h2v2h-2zm1 -28h2v2h-2zm0 6h2v2h-2zm0 11h2v2h-2zm0 4h2v2h-2zm0 5h2v2h-2zm0 7h2v2h-2zm1 -21h2v2h-2zm0 1h2v2h-2zm0 6h2v2h-2zm0 11h2v2h-2zm0 14h2v2h-2zm1 -44h2v2h-2zm0 13h2v2h-2zm0 8h2v2h-2zm0 2h2v2h-2zm0 3h2v2h-2zm0 7h2v2h-2zm1 -14h2v2h-2zm0 7h2v2h-2zm0 7h2v2h-2zm0 3h2v2h-2zm0 8h2v2h-2zm0 7h2v2h-2zm1 -41h2v2h-2zm0 3h2v2h-2zm0 6h2v2h-2zm0 14h2v2h-2zm1 -28h2v2h-2zm0 5h2v2h-2zm0 5h2v2h-2zm0 2h2v2h-2zm0 6h2v2h-2zm0 7h2v2h-2zm1 -27h2v2h-2zm0 14h2v2h-2zm0 2h2v2h-2zm0 4h2v2h-2zm0 3h2v2h-2zm0 7h2v2h-2zm1 -21h2v2h-2zm0 1h2v2h-2zm0 10h2v2h-2zm0 5h2v2h-2zm0 8h2v2h-2zm1 -24h2v2h-2zm0 3h2v2h-2zm0 2h2v2h-2zm0 11h2v2h-2zm0 10h2v2h-2zm0 9h2v2h-2zm1 -39h2v2h-2zm0 4h2v2h-2zm0 7h2v2h-2zm0 2h2v2h-2zm0 7h2v2h-2zm1 -18h2v2h-2zm0 9h2v2h-2zm0 7h2v2h-2zm0 2h2v2h-2zm0 5h2v2h-2zm0 3h2v2h-2zm1 -17h2v2h-2zm0 2h2v2h-2zm0 2h2v2h-2zm0 5h2v2h-2zm1 -13h2v2h-2zm0 6h2v2h-2zm0 9h2v2h-2zm0 3h2v2h-2zm0 3h2v2h-2zm1 -28h2v2h-2zm0 2h2v2h-2zm0 5h2v2h-2zm0 6h2v2h-2zm0 7h2v2h-2zm0 10h2v2h-2zm1 -19h2v2h-2zm0 2h2v2h-2zm0 7h2v2h-2zm1 -9h2v2h-2zm0 4h2v2h-2zm0 7h2v2h-2zm0 8h2v2h-2zm1 -39h2v2h-2zm0 13h2v2h-2zm0 5h2v2h-2zm0 9h2v2h-2zm0 2h2v2h-2zm1 -25h2v2h-2zm0 5h2v2h-2zm0 13h2v2h-2zm0 9h2v2h-2zm0 6h2v2h-2zm1 -31h2v2h-2zm0 5h2v2h-2zm0 2h2v2h-2zm0 24h2v2h-2zm0 2h2v2h-2zm0 6h2v2h-2zm1 -34h2v2h-2zm0 7h2v2h-2zm0 4h2v2h-2zm0 20h2v2h-2zm0 3h2v2h-2zm1 -45h2v2h-2zm0 1h2v2h-2zm0 21h2v2h-2zm0 5h2v2h-2zm0 18h2v2h-2zm1 -36h2v2h-2zm0 7h2v2h-2zm0 6h2v2h-2zm0 5h2v2h-2zm0 4h2v2h-2zm1 -15h2v2h-2zm0 6h2v2h-2zm0 2h2v2h-2zm0 3h2v2h-2zm0 10h2v2h-2zm1 -26h2v2h-2zm0 13h2v2h-2zm0 3h2v2h-2zm0 2h2v2h-2zm0 5h2v2h-2zm1 -20h2v2h-2zm0 2h2v2h-2zm0 4h2v2h-2zm0 2h2v2h-2zm0 12h2v2h-2zm1 -36h2v2h-2zm0 6h2v2h-2zm0 5h2v2h-2zm0 9h2v2h-2zm0 9h2v2h-2zm1 -26h2v2h-2zm0 12h2v2h-2zm0 16h2v2h-2zm0 5h2v2h-2zm0 8h2v2h-2zm1 -26h2v2h-2zm0 2h2v2h-2zm0 6h2v2h-2zm0 7h2v2h-2zm0 3h2v2h-2zm1 -28h2v2h-2zm0 16h2v2h-2zm0 7h2v2h-2zm0 2h2v2h-2zm0 17h2v2h-2zm1 -26h2v2h-2zm0 2h2v2h-2zm0 7h2v2h-2zm0 3h2v2h-2zm0 14h2v2h-2zm1 -42h2v2h-2zm0 16h2v2h-2zm0 5h2v2h-2zm0 10h2v2h-2zm1 -21h2v2h-2zm0 6h2v2h-2zm0 5h2v2h-2zm0 10h2v2h-2zm0 8h2v2h-2zm1 -32h2v2h-2zm0 3h2v2h-2zm0 8h2v2h-2zm0 3h2v2h-2zm1 -11h2v2h-2zm0 2h2v2h-2zm0 4h2v2h-2zm0 2h2v2h-2zm0 5h2v2h-2zm0 2h2v2h-2zm1 -22h2v2h-2zm0 2h2v2h-2zm0 3h2v2h-2zm0 10h2v2h-2zm0 5h2v2h-2zm0 16h2v2h-2zm1 -50h2v2h-2zm0 14h2v2h-2zm0 5h2v2h-2zm0 25h2v2h-2zm1 -33h2v2h-2zm0 5h2v2h-2zm0 7h2v2h-2zm0 6h2v2h-2zm0 3h2v2h-2zm1 -13h2v2h-2zm0 4h2v2h-2zm0 2h2v2h-2zm0 2h2v2h-2zm1 -18h2v2h-2zm0 12h2v2h-2zm0 8h2v2h-2zm0 10h2v2h-2zm0 3h2v2h-2zm1 -28h2v2h-2zm0 5h2v2h-2zm0 13h2v2h-2zm0 4h2v2h-2zm0 6h2v2h-2zm1 -24h2v2h-2zm0 7h2v2h-2zm0 14h2v2h-2zm0 3h2v2h-2zm0 2h2v2h-2zm1 -26h2v2h-2zm0 9h2v2h-2zm0 2h2v2h-2zm1 -23h2v2h-2zm0 15h2v2h-2zm0 8h2v2h-2zm0 5h2v2h-2zm0 10h2v2h-2zm1 -32h2v2h-2zm0 13h2v2h-2zm0 4h2v2h-2zm0 3h2v2h-2zm0 2h2v2h-2zm0 2h2v2h-2zm1 -17h2v2h-2zm0 8h2v2h-2zm0 12h2v2h-2zm0 3h2v2h-2zm1 -21h2v2h-2zm0 4h2v2h-2zm0 9h2v2h-2zm0 8h2v2h-2zm1 -30h2v2h-2zm0 6h2v2h-2zm0 11h2v2h-2zm0 10h2v2h-2zm0 21h2v2h-2zm1 -42h2v2h-2zm0 3h2v2h-2zm0 6h2v2h-2zm0 2h2v2h-2zm0 3h2v2h-2zm1 -9h2v2h-2zm0 4h2v2h-2zm0 2h2v2h-2zm0 3h2v2h-2zm0 12h2v2h-2zm0 3h2v2h-2zm1 -36h2v2h-2zm0 7h2v2h-2zm0 5h2v2h-2zm0 4h2v2h-2zm0 2h2v2h-2zm1 -13h2v2h-2zm0 3h2v2h-2zm0 8h2v2h-2zm0 2h2v2h-2zm0 15h2v2h-2zm1 -23h2v2h-2zm0 4h2v2h-2zm0 2h2v2h-2zm0 5h2v2h-2zm0 12h2v2h-2zm0 9h2v2h-2zm1 -37h2v2h-2zm0 5h2v2h-2zm0 4h2v2h-2zm0 4h2v2h-2zm0 15h2v2h-2zm0 16h2v2h-2zm1 -51h2v2h-2zm0 12h2v2h-2zm0 2h2v2h-2zm0 2h2v2h-2zm0 7h2v2h-2zm1 -23h2v2h-2zm0 9h2v2h-2zm0 1h2v2h-2zm0 6h2v2h-2zm0 14h2v2h-2zm1 -20h2v2h-2zm0 10h2v2h-2zm0 3h2v2h-2zm0 12h2v2h-2zm1 -41h2v2h-2zm0 11h2v2h-2zm0 2h2v2h-2zm0 16h2v2h-2zm0 2h2v2h-2zm1 -15h2v2h-2zm0 2h2v2h-2zm0 2h2v2h-2zm0 4h2v2h-2zm0 7h2v2h-2zm0 2h2v2h-2zm1 -33h2v2h-2zm0 2h2v2h-2zm0 7h2v2h-2zm0 17h2v2h-2zm0 5h2v2h-2zm0 10h2v2h-2zm1 -36h2v2h-2zm0 19h2v2h-2zm0 12h2v2h-2zm0 11h2v2h-2zm1 -29h2v2h-2zm0 8h2v2h-2zm0 7h2v2h-2zm0 3h2v2h-2zm0 11h2v2h-2zm1 -50h2v2h-2zm0 23h2v2h-2zm0 11h2v2h-2zm0 13h2v2h-2zm1 -35h2v2h-2zm0 11h2v2h-2zm0 2h2v2h-2zm0 2h2v2h-2zm0 17h2v2h-2zm1 -28h2v2h-2zm0 11h2v2h-2zm0 2h2v2h-2zm0 3h2v2h-2zm0 7h2v2h-2zm0 3h2v2h-2zm1 -24h2v2h-2zm0 3h2v2h-2zm0 2h2v2h-2zm0 11h2v2h-2zm0 2h2v2h-2zm0 6h2v2h-2zm1 -19h2v2h-2zm0 2h2v2h-2zm0 4h2v2h-2zm0 15h2v2h-2zm0 9h2v2h-2zm1 -37h2v2h-2zm0 3h2v2h-2zm0 4h2v2h-2zm0 9h2v2h-2zm0 2h2v2h-2zm1 -13h2v2h-2zm0 2h2v2h-2zm0 6h2v2h-2zm0 7h2v2h-2zm0 3h2v2h-2zm0 5h2v2h-2zm1 -32h2v2h-2zm0 13h2v2h-2zm0 4h2v2h-2zm0 15h2v2h-2zm0 3h2v2h-2zm1 -41h2v2h-2zm0 15h2v2h-2zm0 2h2v2h-2zm0 6h2v2h-2zm0 5h2v2h-2zm0 10h2v2h-2zm0 57h2v2h-2zm1 -89h2v2h-2zm0 13h2v2h-2zm0 2h2v2h-2zm0 5h2v2h-2zm0 2h2v2h-2zm1 -28h2v2h-2zm0 13h2v2h-2zm0 2h2v2h-2zm0 8h2v2h-2zm0 21h2v2h-2zm1 -42h2v2h-2zm0 4h2v2h-2zm0 13h2v2h-2zm0 4h2v2h-2zm0 7h2v2h-2zm0 17h2v2h-2zm1 -48h2v2h-2zm0 3h2v2h-2zm0 6h2v2h-2zm0 5h2v2h-2zm0 6h2v2h-2zm0 7h2v2h-2zm1 -13h2v2h-2zm0 6h2v2h-2zm0 17h2v2h-2zm0 5h2v2h-2zm0 6h2v2h-2zm1 -39h2v2h-2zm0 9h2v2h-2zm0 4h2v2h-2zm0 2h2v2h-2zm0 7h2v2h-2zm0 21h2v2h-2zm1 -38h2v2h-2zm0 8h2v2h-2zm0 5h2v2h-2zm1 -14h2v2h-2zm0 5h2v2h-2zm0 9h2v2h-2zm0 15h2v2h-2zm0 13h2v2h-2zm1 -51h2v2h-2zm0 10h2v2h-2zm0 4h2v2h-2zm0 4h2v2h-2zm0 12h2v2h-2zm1 -30h2v2h-2zm0 9h2v2h-2zm0 11h2v2h-2zm0 10h2v2h-2zm0 3h2v2h-2zm1 -31h2v2h-2zm0 10h2v2h-2zm0 2h2v2h-2zm0 6h2v2h-2zm0 13h2v2h-2zm1 -30h2v2h-2zm0 9h2v2h-2zm0 23h2v2h-2zm0 6h2v2h-2zm1 -36h2v2h-2zm0 7h2v2h-2zm0 6h2v2h-2zm0 2h2v2h-2zm0 3h2v2h-2zm0 7h2v2h-2zm1 -31h2v2h-2zm0 4h2v2h-2zm0 20h2v2h-2zm0 2h2v2h-2zm0 8h2v2h-2zm1 -13h2v2h-2zm0 3h2v2h-2zm0 2h2v2h-2zm0 5h2v2h-2zm0 5h2v2h-2zm0 6h2v2h-2zm1 -36h2v2h-2zm0 5h2v2h-2zm0 4h2v2h-2zm0 2h2v2h-2zm0 2h2v2h-2zm0 15h2v2h-2zm1 -15h2v2h-2zm0 2h2v2h-2zm0 3h2v2h-2zm0 7h2v2h-2zm1 -30h2v2h-2zm0 2h2v2h-2zm0 1h2v2h-2zm0 9h2v2h-2zm0 11h2v2h-2zm0 2h2v2h-2zm1 -15h2v2h-2zm0 4h2v2h-2zm0 9h2v2h-2zm0 2h2v2h-2zm0 10h2v2h-2zm0 3h2v2h-2zm1 -36h2v2h-2zm0 7h2v2h-2zm0 11h2v2h-2zm0 3h2v2h-2zm1 -20h2v2h-2zm0 11h2v2h-2zm0 9h2v2h-2zm0 7h2v2h-2zm0 3h2v2h-2zm1 -17h2v2h-2zm0 4h2v2h-2zm0 7h2v2h-2zm0 6h2v2h-2zm0 5h2v2h-2zm1 -28h2v2h-2zm0 2h2v2h-2zm0 4h2v2h-2zm0 4h2v2h-2zm0 10h2v2h-2zm1 -25h2v2h-2zm0 5h2v2h-2zm0 8h2v2h-2zm0 7h2v2h-2zm0 8h2v2h-2zm1 -24h2v2h-2zm0 11h2v2h-2zm0 13h2v2h-2zm0 2h2v2h-2zm0 3h2v2h-2zm1 -38h2v2h-2zm0 16h2v2h-2zm0 7h2v2h-2zm0 10h2v2h-2zm0 5h2v2h-2zm1 -26h2v2h-2zm0 2h2v2h-2zm0 9h2v2h-2zm0 4h2v2h-2zm0 6h2v2h-2zm1 -34h2v2h-2zm0 8h2v2h-2zm0 2h2v2h-2zm0 5h2v2h-2zm0 2h2v2h-2zm0 2h2v2h-2zm1 -9h2v2h-2zm0 1h2v2h-2zm0 4h2v2h-2zm0 16h2v2h-2zm0 8h2v2h-2zm1 -26h2v2h-2zm0 4h2v2h-2zm0 4h2v2h-2zm0 3h2v2h-2zm0 4h2v2h-2zm0 6h2v2h-2zm1 -33h2v2h-2zm0 16h2v2h-2zm0 4h2v2h-2zm0 3h2v2h-2zm0 2h2v2h-2zm1 -22h2v2h-2zm0 4h2v2h-2zm0 2h2v2h-2zm0 9h2v2h-2zm0 23h2v2h-2zm1 -32h2v2h-2zm0 1h2v2h-2zm0 8h2v2h-2zm0 5h2v2h-2zm0 4h2v2h-2zm1 -18h2v2h-2zm0 5h2v2h-2zm0 9h2v2h-2zm0 7h2v2h-2zm0 8h2v2h-2zm1 -29h2v2h-2zm0 3h2v2h-2zm0 6h2v2h-2zm0 7h2v2h-2zm0 13h2v2h-2zm1 -41h2v2h-2zm0 13h2v2h-2zm0 8h2v2h-2zm0 17h2v2h-2zm0 6h2v2h-2zm1 -32h2v2h-2zm0 16h2v2h-2zm0 2h2v2h-2zm0 6h2v2h-2zm1 -34h2v2h-2zm0 1h2v2h-2zm0 5h2v2h-2zm0 11h2v2h-2zm0 4h2v2h-2zm1 -15h2v2h-2zm0 11h2v2h-2zm0 2h2v2h-2zm0 2h2v2h-2zm0 13h2v2h-2zm0 8h2v2h-2zm1 -29h2v2h-2zm0 6h2v2h-2zm0 20h2v2h-2zm0 6h2v2h-2zm1 -17h2v2h-2zm0 3h2v2h-2zm0 3h2v2h-2zm0 2h2v2h-2zm1 -26h2v2h-2zm0 1h2v2h-2zm0 4h2v2h-2zm0 13h2v2h-2zm0 6h2v2h-2zm1 -33h2v2h-2zm0 5h2v2h-2zm0 2h2v2h-2zm0 11h2v2h-2zm0 9h2v2h-2zm0 47h2v2h-2zm1 -71h2v2h-2zm0 20h2v2h-2zm0 2h2v2h-2zm0 2h2v2h-2zm0 8h2v2h-2zm1 -25h2v2h-2zm0 2h2v2h-2zm0 4h2v2h-2zm0 17h2v2h-2zm0 2h2v2h-2zm0 6h2v2h-2zm1 -32h2v2h-2zm0 7h2v2h-2zm0 2h2v2h-2zm0 5h2v2h-2zm0 10h2v2h-2zm1 -28h2v2h-2zm0 2h2v2h-2zm0 7h2v2h-2zm0 4h2v2h-2zm0 9h2v2h-2zm1 -36h2v2h-2zm0 18h2v2h-2zm0 3h2v2h-2zm0 6h2v2h-2zm0 5h2v2h-2zm0 7h2v2h-2zm1 -21h2v2h-2zm0 11h2v2h-2zm0 5h2v2h-2zm0 2h2v2h-2zm0 8h2v2h-2zm1 -33h2v2h-2zm0 16h2v2h-2zm0 9h2v2h-2zm1 -18h2v2h-2zm0 1h2v2h-2zm0 8h2v2h-2zm0 7h2v2h-2zm0 2h2v2h-2zm0 3h2v2h-2zm1 -28h2v2h-2zm0 3h2v2h-2zm0 11h2v2h-2zm0 2h2v2h-2zm0 9h2v2h-2zm0 11h2v2h-2zm1 -35h2v2h-2zm0 11h2v2h-2zm0 11h2v2h-2zm0 2h2v2h-2zm1 -24h2v2h-2zm0 13h2v2h-2zm0 2h2v2h-2zm0 9h2v2h-2zm0 14h2v2h-2zm1 -38h2v2h-2zm0 11h2v2h-2zm0 2h2v2h-2zm0 2h2v2h-2zm0 7h2v2h-2zm0 8h2v2h-2zm1 -23h2v2h-2zm0 2h2v2h-2zm0 11h2v2h-2zm0 2h2v2h-2zm1 -35h2v2h-2zm0 17h2v2h-2zm0 3h2v2h-2zm0 8h2v2h-2zm0 9h2v2h-2zm0 8h2v2h-2zm1 -28h2v2h-2zm0 2h2v2h-2zm0 9h2v2h-2zm0 17h2v2h-2zm0 3h2v2h-2zm0 6h2v2h-2zm1 -35h2v2h-2zm0 1h2v2h-2zm0 8h2v2h-2zm0 2h2v2h-2zm1 -6h2v2h-2zm0 4h2v2h-2zm0 2h2v2h-2zm0 10h2v2h-2zm0 3h2v2h-2zm0 15h2v2h-2zm1 -36h2v2h-2zm0 4h2v2h-2zm0 7h2v2h-2zm0 4h2v2h-2zm0 6h2v2h-2zm0 5h2v2h-2zm1 -29h2v2h-2zm0 5h2v2h-2zm0 13h2v2h-2zm0 3h2v2h-2zm0 5h2v2h-2zm1 -25h2v2h-2zm0 8h2v2h-2zm0 5h2v2h-2zm0 4h2v2h-2zm0 8h2v2h-2zm0 6h2v2h-2zm1 -38h2v2h-2zm0 15h2v2h-2zm0 9h2v2h-2zm0 8h2v2h-2zm0 16h2v2h-2zm1 -37h2v2h-2zm0 6h2v2h-2zm0 18h2v2h-2zm0 21h2v2h-2zm1 -60h2v2h-2zm0 13h2v2h-2zm0 13h2v2h-2zm0 13h2v2h-2zm0 13h2v2h-2zm1 -54h2v2h-2zm0 21h2v2h-2zm0 2h2v2h-2zm0 5h2v2h-2zm0 13h2v2h-2zm1 -39h2v2h-2zm0 8h2v2h-2zm0 2h2v2h-2zm0 11h2v2h-2zm1 -8h2v2h-2zm0 6h2v2h-2zm0 2h2v2h-2zm0 5h2v2h-2zm0 19h2v2h-2zm0 7h2v2h-2zm1 -37h2v2h-2zm0 4h2v2h-2zm0 2h2v2h-2zm0 3h2v2h-2zm0 4h2v2h-2zm1 -13h2v2h-2zm0 4h2v2h-2zm0 5h2v2h-2zm0 4h2v2h-2zm1 -15h2v2h-2zm0 8h2v2h-2zm0 3h2v2h-2zm0 4h2v2h-2zm0 8h2v2h-2zm1 -33h2v2h-2zm0 10h2v2h-2zm0 8h2v2h-2zm0 7h2v2h-2zm0 11h2v2h-2zm0 3h2v2h-2zm1 -41h2v2h-2zm0 14h2v2h-2zm0 2h2v2h-2zm0 22h2v2h-2zm1 -38h2v2h-2zm0 3h2v2h-2zm0 2h2v2h-2zm0 4h2v2h-2zm0 11h2v2h-2zm1 -15h2v2h-2zm0 9h2v2h-2zm0 9h2v2h-2zm0 2h2v2h-2zm1 -26h2v2h-2zm0 26h2v2h-2zm0 2h2v2h-2zm0 6h2v2h-2zm1 -23h2v2h-2zm0 2h2v2h-2zm0 2h2v2h-2zm0 11h2v2h-2zm0 8h2v2h-2zm0 2h2v2h-2zm1 -36h2v2h-2zm0 10h2v2h-2zm0 5h2v2h-2zm0 4h2v2h-2zm0 5h2v2h-2zm1 -24h2v2h-2zm0 6h2v2h-2zm0 7h2v2h-2zm0 4h2v2h-2zm0 17h2v2h-2zm1 -40h2v2h-2zm0 19h2v2h-2zm0 2h2v2h-2zm0 4h2v2h-2zm0 15h2v2h-2zm0 2h2v2h-2zm1 -33h2v2h-2zm0 7h2v2h-2zm0 3h2v2h-2zm0 2h2v2h-2zm0 6h2v2h-2zm1 -11h2v2h-2zm0 11h2v2h-2zm0 7h2v2h-2zm0 3h2v2h-2zm1 -18h2v2h-2zm0 2h2v2h-2zm0 2h2v2h-2zm0 2h2v2h-2zm0 7h2v2h-2zm0 10h2v2h-2zm1 -26h2v2h-2zm0 1h2v2h-2zm0 4h2v2h-2zm0 2h2v2h-2zm0 14h2v2h-2zm0 18h2v2h-2zm1 -30h2v2h-2zm0 2h2v2h-2zm0 5h2v2h-2zm0 2h2v2h-2zm0 11h2v2h-2zm1 -35h2v2h-2zm0 17h2v2h-2zm0 3h2v2h-2zm0 7h2v2h-2zm0 3h2v2h-2zm0 11h2v2h-2zm1 -35h2v2h-2zm0 1h2v2h-2zm0 17h2v2h-2zm0 6h2v2h-2zm1 -26h2v2h-2zm0 5h2v2h-2zm0 6h2v2h-2zm0 7h2v2h-2zm0 13h2v2h-2zm1 -33h2v2h-2zm0 4h2v2h-2zm0 1h2v2h-2zm0 2h2v2h-2zm0 4h2v2h-2zm0 32h2v2h-2zm1 -41h2v2h-2zm0 7h2v2h-2zm0 6h2v2h-2zm0 5h2v2h-2zm0 10h2v2h-2zm1 -21h2v2h-2zm0 4h2v2h-2zm0 5h2v2h-2zm0 18h2v2h-2zm0 10h2v2h-2zm1 -44h2v2h-2zm0 9h2v2h-2zm0 9h2v2h-2zm0 2h2v2h-2zm0 14h2v2h-2zm1 -41h2v2h-2zm0 12h2v2h-2zm0 2h2v2h-2zm0 6h2v2h-2zm0 3h2v2h-2zm1 -13h2v2h-2zm0 10h2v2h-2zm0 15h2v2h-2zm1 -30h2v2h-2zm0 9h2v2h-2zm0 4h2v2h-2zm0 2h2v2h-2zm0 10h2v2h-2zm1 -20h2v2h-2zm0 2h2v2h-2zm0 6h2v2h-2zm0 2h2v2h-2zm0 7h2v2h-2zm0 3h2v2h-2zm1 -25h2v2h-2zm0 11h2v2h-2zm0 2h2v2h-2zm0 9h2v2h-2zm1 -15h2v2h-2zm0 6h2v2h-2zm0 5h2v2h-2zm0 2h2v2h-2zm0 8h2v2h-2zm1 -23h2v2h-2zm0 4h2v2h-2zm0 11h2v2h-2zm0 8h2v2h-2zm1 -19h2v2h-2zm0 2h2v2h-2zm0 7h2v2h-2zm0 2h2v2h-2zm1 -23h2v2h-2zm0 3h2v2h-2zm0 2h2v2h-2zm0 18h2v2h-2zm0 19h2v2h-2zm1 -41h2v2h-2zm0 4h2v2h-2zm0 5h2v2h-2zm0 2h2v2h-2zm0 2h2v2h-2zm1 -14h2v2h-2zm0 3h2v2h-2zm0 7h2v2h-2zm0 11h2v2h-2zm0 7h2v2h-2zm1 -31h2v2h-2zm0 11h2v2h-2zm0 2h2v2h-2zm0 2h2v2h-2zm0 9h2v2h-2zm0 18h2v2h-2zm1 -36h2v2h-2zm0 7h2v2h-2zm0 8h2v2h-2zm0 13h2v2h-2zm1 -17h2v2h-2zm0 7h2v2h-2zm0 2h2v2h-2zm0 2h2v2h-2zm0 3h2v2h-2zm1 -25h2v2h-2zm0 5h2v2h-2zm0 10h2v2h-2zm0 5h2v2h-2zm0 2h2v2h-2zm0 3h2v2h-2zm1 -16h2v2h-2zm0 6h2v2h-2zm0 5h2v2h-2zm0 8h2v2h-2zm0 2h2v2h-2zm1 -17h2v2h-2zm0 7h2v2h-2zm0 2h2v2h-2zm0 3h2v2h-2zm0 3h2v2h-2zm1 -28h2v2h-2zm0 9h2v2h-2zm0 2h2v2h-2zm0 7h2v2h-2zm0 7h2v2h-2zm0 8h2v2h-2zm1 -29h2v2h-2zm0 1h2v2h-2zm0 2h2v2h-2zm0 15h2v2h-2zm0 11h2v2h-2zm0 3h2v2h-2zm1 -36h2v2h-2zm0 11h2v2h-2zm0 2h2v2h-2zm0 9h2v2h-2zm0 11h2v2h-2zm1 -28h2v2h-2zm0 13h2v2h-2zm0 2h2v2h-2zm0 13h2v2h-2zm1 -29h2v2h-2zm0 5h2v2h-2zm0 6h2v2h-2zm0 7h2v2h-2zm0 3h2v2h-2zm0 14h2v2h-2zm1 -30h2v2h-2zm0 2h2v2h-2zm0 4h2v2h-2zm0 10h2v2h-2zm0 11h2v2h-2zm1 -34h2v2h-2zm0 18h2v2h-2zm0 2h2v2h-2zm0 8h2v2h-2zm0 6h2v2h-2zm0 3h2v2h-2zm1 -34h2v2h-2zm0 6h2v2h-2zm0 4h2v2h-2zm0 3h2v2h-2zm0 7h2v2h-2zm1 -21h2v2h-2zm0 3h2v2h-2zm0 2h2v2h-2zm0 9h2v2h-2zm1 -11h2v2h-2zm0 2h2v2h-2zm0 2h2v2h-2zm0 2h2v2h-2zm0 17h2v2h-2zm1 -28h2v2h-2zm0 7h2v2h-2zm0 4h2v2h-2zm0 2h2v2h-2zm0 5h2v2h-2zm0 19h2v2h-2zm1 -41h2v2h-2zm0 13h2v2h-2zm0 4h2v2h-2zm0 18h2v2h-2zm1 -15h2v2h-2zm0 2h2v2h-2zm0 2h2v2h-2zm0 3h2v2h-2zm1 -36h2v2h-2zm0 5h2v2h-2zm0 4h2v2h-2zm0 27h2v2h-2zm0 5h2v2h-2zm1 -25h2v2h-2zm0 4h2v2h-2zm0 2h2v2h-2zm0 9h2v2h-2zm0 26h2v2h-2zm1 -37h2v2h-2zm0 2h2v2h-2zm0 2h2v2h-2zm0 5h2v2h-2zm0 7h2v2h-2zm0 5h2v2h-2zm1 -26h2v2h-2zm0 1h2v2h-2zm0 2h2v2h-2zm0 2h2v2h-2zm0 13h2v2h-2zm0 11h2v2h-2zm1 -33h2v2h-2zm0 13h2v2h-2zm0 2h2v2h-2zm0 10h2v2h-2zm1 -14h2v2h-2zm0 2h2v2h-2zm0 2h2v2h-2zm0 10h2v2h-2zm0 3h2v2h-2zm1 -23h2v2h-2zm0 10h2v2h-2zm0 3h2v2h-2zm0 10h2v2h-2zm0 2h2v2h-2zm0 3h2v2h-2zm1 -44h2v2h-2zm0 15h2v2h-2zm0 11h2v2h-2zm0 7h2v2h-2zm0 14h2v2h-2zm1 -36h2v2h-2zm0 9h2v2h-2zm0 9h2v2h-2zm0 2h2v2h-2zm0 8h2v2h-2zm1 -36h2v2h-2zm0 15h2v2h-2zm0 4h2v2h-2zm0 7h2v2h-2zm0 4h2v2h-2zm1 -22h2v2h-2zm0 2h2v2h-2zm0 11h2v2h-2zm0 5h2v2h-2zm1 -7h2v2h-2zm0 9h2v2h-2zm0 5h2v2h-2zm0 3h2v2h-2zm0 8h2v2h-2zm1 -39h2v2h-2zm0 1h2v2h-2zm0 6h2v2h-2zm0 5h2v2h-2zm0 2h2v2h-2zm0 4h2v2h-2zm1 -23h2v2h-2zm0 13h2v2h-2zm0 15h2v2h-2zm0 2h2v2h-2zm0 17h2v2h-2zm1 -30h2v2h-2zm0 4h2v2h-2zm0 5h2v2h-2zm0 2h2v2h-2zm0 8h2v2h-2zm1 -37h2v2h-2zm0 4h2v2h-2zm0 3h2v2h-2zm0 15h2v2h-2zm0 12h2v2h-2zm0 18h2v2h-2zm1 -46h2v2h-2zm0 5h2v2h-2zm0 5h2v2h-2zm0 4h2v2h-2zm0 4h2v2h-2zm0 7h2v2h-2zm1 -17h2v2h-2zm0 6h2v2h-2zm0 4h2v2h-2zm0 24h2v2h-2zm1 -47h2v2h-2zm0 8h2v2h-2zm0 2h2v2h-2zm0 5h2v2h-2zm0 4h2v2h-2zm1 -4h2v2h-2zm0 6h2v2h-2zm0 9h2v2h-2zm0 3h2v2h-2zm0 3h2v2h-2zm1 -30h2v2h-2zm0 20h2v2h-2zm0 4h2v2h-2zm0 6h2v2h-2zm0 2h2v2h-2zm1 -39h2v2h-2zm0 4h2v2h-2zm0 12h2v2h-2zm0 13h2v2h-2zm0 26h2v2h-2zm1 -37h2v2h-2zm0 11h2v2h-2zm0 10h2v2h-2zm0 6h2v2h-2zm0 3h2v2h-2zm0 7h2v2h-2zm1 -42h2v2h-2zm0 5h2v2h-2zm0 4h2v2h-2zm0 12h2v2h-2zm0 5h2v2h-2zm1 -23h2v2h-2zm0 2h2v2h-2zm0 2h2v2h-2zm0 2h2v2h-2zm0 12h2v2h-2zm1 -18h2v2h-2zm0 6h2v2h-2zm0 5h2v2h-2zm0 7h2v2h-2zm0 3h2v2h-2zm0 2h2v2h-2zm1 -21h2v2h-2zm0 2h2v2h-2zm0 4h2v2h-2zm0 3h2v2h-2zm0 21h2v2h-2zm1 -44h2v2h-2zm0 10h2v2h-2zm0 2h2v2h-2zm0 18h2v2h-2zm0 11h2v2h-2zm0 3h2v2h-2zm1 -30h2v2h-2zm0 9h2v2h-2zm0 2h2v2h-2zm1 -9h2v2h-2zm0 4h2v2h-2zm0 5h2v2h-2zm0 5h2v2h-2zm1 -31h2v2h-2zm0 13h2v2h-2zm0 6h2v2h-2zm0 9h2v2h-2zm0 3h2v2h-2zm0 11h2v2h-2zm1 -41h2v2h-2zm0 5h2v2h-2zm0 20h2v2h-2zm0 10h2v2h-2zm1 -28h2v2h-2zm0 7h2v2h-2zm0 6h2v2h-2zm0 7h2v2h-2zm0 32h2v2h-2zm1 -60h2v2h-2zm0 10h2v2h-2zm0 3h2v2h-2zm0 8h2v2h-2zm0 5h2v2h-2zm0 26h2v2h-2zm1 -49h2v2h-2zm0 5h2v2h-2zm0 11h2v2h-2zm0 9h2v2h-2zm0 3h2v2h-2zm0 18h2v2h-2zm1 -36h2v2h-2zm0 2h2v2h-2zm0 2h2v2h-2zm0 9h2v2h-2zm0 5h2v2h-2zm1 -34h2v2h-2zm0 16h2v2h-2zm0 4h2v2h-2zm0 2h2v2h-2zm0 12h2v2h-2zm1 -20h2v2h-2zm0 4h2v2h-2zm0 9h2v2h-2zm0 2h2v2h-2zm0 8h2v2h-2zm0 5h2v2h-2zm1 -29h2v2h-2zm0 11h2v2h-2zm0 3h2v2h-2zm0 7h2v2h-2zm0 14h2v2h-2zm1 -32h2v2h-2zm0 4h2v2h-2zm0 7h2v2h-2zm0 2h2v2h-2zm0 19h2v2h-2zm1 -41h2v2h-2zm0 9h2v2h-2zm0 4h2v2h-2zm0 7h2v2h-2zm0 10h2v2h-2zm1 -15h2v2h-2zm0 5h2v2h-2zm0 15h2v2h-2zm1 -48h2v2h-2zm0 13h2v2h-2zm0 11h2v2h-2zm0 16h2v2h-2zm0 3h2v2h-2zm0 2h2v2h-2zm1 -25h2v2h-2zm0 2h2v2h-2zm0 2h2v2h-2zm0 11h2v2h-2zm0 2h2v2h-2zm0 6h2v2h-2zm1 -30h2v2h-2zm0 4h2v2h-2zm0 18h2v2h-2zm0 2h2v2h-2zm1 -28h2v2h-2zm0 8h2v2h-2zm0 9h2v2h-2zm0 9h2v2h-2zm0 10h2v2h-2zm0 13h2v2h-2zm1 -46h2v2h-2zm0 1h2v2h-2zm0 4h2v2h-2zm0 23h2v2h-2zm0 3h2v2h-2zm0 15h2v2h-2zm1 -55h2v2h-2zm0 21h2v2h-2zm0 6h2v2h-2zm0 10h2v2h-2zm0 14h2v2h-2zm1 -37h2v2h-2zm0 3h2v2h-2zm0 2h2v2h-2zm0 4h2v2h-2zm0 2h2v2h-2zm0 7h2v2h-2zm1 -16h2v2h-2zm0 9h2v2h-2zm0 2h2v2h-2zm0 13h2v2h-2zm1 -26h2v2h-2zm0 3h2v2h-2zm0 2h2v2h-2zm0 6h2v2h-2zm0 7h2v2h-2zm1 -13h2v2h-2zm0 2h2v2h-2zm0 2h2v2h-2zm0 4h2v2h-2zm0 5h2v2h-2zm0 10h2v2h-2zm1 -35h2v2h-2zm0 27h2v2h-2zm0 6h2v2h-2zm0 2h2v2h-2zm0 6h2v2h-2zm1 -32h2v2h-2zm0 3h2v2h-2zm0 6h2v2h-2zm0 7h2v2h-2zm0 2h2v2h-2zm1 -25h2v2h-2zm0 7h2v2h-2zm0 7h2v2h-2zm0 7h2v2h-2zm0 51h2v2h-2zm1 -56h2v2h-2zm0 2h2v2h-2zm0 3h2v2h-2zm1 -16h2v2h-2zm0 7h2v2h-2zm0 13h2v2h-2zm0 3h2v2h-2zm0 14h2v2h-2zm1 -41h2v2h-2zm0 4h2v2h-2zm0 5h2v2h-2zm0 32h2v2h-2zm1 -37h2v2h-2zm0 2h2v2h-2zm0 1h2v2h-2zm0 15h2v2h-2zm0 13h2v2h-2zm1 -29h2v2h-2zm0 14h2v2h-2zm0 2h2v2h-2zm0 5h2v2h-2zm0 14h2v2h-2zm1 -39h2v2h-2zm0 9h2v2h-2zm0 6h2v2h-2zm0 5h2v2h-2zm0 8h2v2h-2zm1 -21h2v2h-2zm0 2h2v2h-2zm0 4h2v2h-2zm0 5h2v2h-2zm0 32h2v2h-2zm1 -50h2v2h-2zm0 13h2v2h-2zm0 5h2v2h-2zm0 7h2v2h-2zm0 11h2v2h-2zm1 -39h2v2h-2zm0 10h2v2h-2zm0 2h2v2h-2zm0 11h2v2h-2zm0 23h2v2h-2zm1 -38h2v2h-2zm0 10h2v2h-2zm0 3h2v2h-2zm0 2h2v2h-2zm0 5h2v2h-2zm1 -21h2v2h-2zm0 11h2v2h-2zm0 3h2v2h-2zm0 2h2v2h-2zm0 5h2v2h-2zm1 -34h2v2h-2zm0 11h2v2h-2zm0 2h2v2h-2zm0 5h2v2h-2zm0 11h2v2h-2zm0 5h2v2h-2zm1 -14h2v2h-2zm0 7h2v2h-2zm0 2h2v2h-2zm0 5h2v2h-2zm0 3h2v2h-2zm0 2h2v2h-2zm1 -38h2v2h-2zm0 12h2v2h-2zm0 5h2v2h-2zm0 2h2v2h-2zm1 -4h2v2h-2zm0 2h2v2h-2zm0 2h2v2h-2zm0 2h2v2h-2zm0 15h2v2h-2zm0 5h2v2h-2zm1 -29h2v2h-2zm0 5h2v2h-2zm0 11h2v2h-2zm0 8h2v2h-2zm1 -26h2v2h-2zm0 11h2v2h-2zm0 2h2v2h-2zm0 3h2v2h-2zm0 18h2v2h-2zm1 -36h2v2h-2zm0 4h2v2h-2zm0 1h2v2h-2zm0 8h2v2h-2zm0 2h2v2h-2zm0 18h2v2h-2zm1 -15h2v2h-2zm0 4h2v2h-2zm0 8h2v2h-2zm0 6h2v2h-2zm0 3h2v2h-2zm1 -45h2v2h-2zm0 13h2v2h-2zm0 4h2v2h-2zm0 9h2v2h-2zm0 8h2v2h-2zm1 -24h2v2h-2zm0 11h2v2h-2zm0 3h2v2h-2zm0 2h2v2h-2zm0 5h2v2h-2zm0 5h2v2h-2zm1 -28h2v2h-2zm0 3h2v2h-2zm0 2h2v2h-2zm0 8h2v2h-2zm0 5h2v2h-2zm0 5h2v2h-2zm1 -31h2v2h-2zm0 6h2v2h-2zm0 25h2v2h-2zm0 11h2v2h-2zm1 -50h2v2h-2zm0 8h2v2h-2zm0 8h2v2h-2zm0 7h2v2h-2zm0 6h2v2h-2zm0 10h2v2h-2zm1 -20h2v2h-2zm0 4h2v2h-2zm0 2h2v2h-2zm0 4h2v2h-2zm0 5h2v2h-2zm0 8h2v2h-2zm1 -34h2v2h-2zm0 10h2v2h-2zm0 16h2v2h-2zm0 2h2v2h-2zm0 3h2v2h-2zm1 -23h2v2h-2zm0 2h2v2h-2zm0 14h2v2h-2zm0 4h2v2h-2zm0 3h2v2h-2zm0 8h2v2h-2zm1 -18h2v2h-2zm0 3h2v2h-2zm0 2h2v2h-2zm0 5h2v2h-2zm1 -20h2v2h-2zm0 6h2v2h-2zm0 7h2v2h-2zm0 4h2v2h-2zm0 3h2v2h-2zm1 -12h2v2h-2zm0 2h2v2h-2zm0 5h2v2h-2zm0 5h2v2h-2zm0 5h2v2h-2zm1 -23h2v2h-2zm0 2h2v2h-2zm0 13h2v2h-2zm0 3h2v2h-2zm0 14h2v2h-2zm1 -35h2v2h-2zm0 1h2v2h-2zm0 8h2v2h-2zm0 5h2v2h-2zm0 4h2v2h-2zm1 -15h2v2h-2zm0 4h2v2h-2zm0 7h2v2h-2zm0 2h2v2h-2zm0 2h2v2h-2zm1 -20h2v2h-2zm0 7h2v2h-2zm0 2h2v2h-2zm0 9h2v2h-2zm0 13h2v2h-2zm0 3h2v2h-2zm1 -21h2v2h-2zm0 3h2v2h-2zm0 4h2v2h-2zm0 3h2v2h-2zm0 11h2v2h-2zm1 -32h2v2h-2zm0 9h2v2h-2zm0 12h2v2h-2zm0 8h2v2h-2zm0 3h2v2h-2zm0 3h2v2h-2zm1 -39h2v2h-2zm0 7h2v2h-2zm0 6h2v2h-2zm1 -15h2v2h-2zm0 2h2v2h-2zm0 4h2v2h-2zm0 26h2v2h-2zm0 29h2v2h-2zm1 -52h2v2h-2zm0 4h2v2h-2zm0 4h2v2h-2zm0 7h2v2h-2zm0 8h2v2h-2zm1 -30h2v2h-2zm0 2h2v2h-2zm0 11h2v2h-2zm0 5h2v2h-2zm0 4h2v2h-2zm1 -27h2v2h-2zm0 12h2v2h-2zm0 13h2v2h-2zm0 2h2v2h-2zm0 3h2v2h-2zm1 -18h2v2h-2zm0 2h2v2h-2zm0 11h2v2h-2zm0 5h2v2h-2zm0 3h2v2h-2zm1 -24h2v2h-2zm0 1h2v2h-2zm0 15h2v2h-2zm0 2h2v2h-2zm0 3h2v2h-2zm0 3h2v2h-2zm1 -26h2v2h-2zm0 7h2v2h-2zm0 9h2v2h-2zm0 7h2v2h-2zm1 -27h2v2h-2zm0 17h2v2h-2zm0 5h2v2h-2zm0 2h2v2h-2zm0 8h2v2h-2zm1 -26h2v2h-2zm0 1h2v2h-2zm0 8h2v2h-2zm0 5h2v2h-2zm0 25h2v2h-2zm1 -36h2v2h-2zm0 4h2v2h-2zm0 2h2v2h-2zm0 9h2v2h-2zm0 3h2v2h-2zm1 -34h2v2h-2zm0 6h2v2h-2zm0 7h2v2h-2zm0 7h2v2h-2zm0 14h2v2h-2zm1 -27h2v2h-2zm0 6h2v2h-2zm0 5h2v2h-2zm0 6h2v2h-2zm0 15h2v2h-2zm0 3h2v2h-2zm1 -42h2v2h-2zm0 1h2v2h-2zm0 21h2v2h-2zm0 5h2v2h-2zm0 15h2v2h-2zm1 -41h2v2h-2zm0 12h2v2h-2zm0 3h2v2h-2zm0 2h2v2h-2zm0 13h2v2h-2zm0 8h2v2h-2zm1 -38h2v2h-2zm0 17h2v2h-2zm0 2h2v2h-2zm0 2h2v2h-2zm0 20h2v2h-2zm1 -33h2v2h-2zm0 5h2v2h-2zm0 2h2v2h-2zm0 2h2v2h-2zm0 21h2v2h-2zm1 -17h2v2h-2zm0 5h2v2h-2zm0 2h2v2h-2zm0 5h2v2h-2zm1 -25h2v2h-2zm0 5h2v2h-2zm0 2h2v2h-2zm0 11h2v2h-2zm0 12h2v2h-2zm1 -28h2v2h-2zm0 3h2v2h-2zm0 4h2v2h-2zm0 6h2v2h-2zm0 13h2v2h-2zm1 -31h2v2h-2zm0 12h2v2h-2zm0 2h2v2h-2zm0 14h2v2h-2zm0 3h2v2h-2zm0 5h2v2h-2zm1 -38h2v2h-2zm0 9h2v2h-2zm0 9h2v2h-2zm0 5h2v2h-2zm0 4h2v2h-2zm1 -18h2v2h-2zm0 7h2v2h-2zm0 2h2v2h-2zm0 12h2v2h-2zm1 -21h2v2h-2zm0 7h2v2h-2zm0 4h2v2h-2zm0 13h2v2h-2zm0 22h2v2h-2zm1 -48h2v2h-2zm0 11h2v2h-2zm0 2h2v2h-2zm0 3h2v2h-2zm0 15h2v2h-2zm1 -29h2v2h-2zm0 11h2v2h-2zm0 15h2v2h-2zm0 6h2v2h-2zm1 -41h2v2h-2zm0 18h2v2h-2zm0 2h2v2h-2zm0 5h2v2h-2zm0 2h2v2h-2zm0 6h2v2h-2zm1 -21h2v2h-2zm0 6h2v2h-2zm0 5h2v2h-2zm0 7h2v2h-2zm0 8h2v2h-2zm1 -33h2v2h-2zm0 13h2v2h-2zm0 15h2v2h-2zm1 -24h2v2h-2zm0 5h2v2h-2zm0 2h2v2h-2zm0 14h2v2h-2zm1 -31h2v2h-2zm0 13h2v2h-2zm0 2h2v2h-2zm0 2h2v2h-2zm0 2h2v2h-2zm1 -29h2v2h-2zm0 25h2v2h-2zm0 2h2v2h-2zm0 22h2v2h-2zm1 -36h2v2h-2zm0 21h2v2h-2zm0 4h2v2h-2zm0 6h2v2h-2zm1 -26h2v2h-2zm0 16h2v2h-2zm0 4h2v2h-2zm0 3h2v2h-2zm0 3h2v2h-2zm0 2h2v2h-2zm1 -23h2v2h-2zm0 4h2v2h-2zm0 4h2v2h-2zm0 3h2v2h-2zm0 2h2v2h-2zm1 -15h2v2h-2zm0 2h2v2h-2zm0 18h2v2h-2zm0 3h2v2h-2zm0 5h2v2h-2zm1 -24h2v2h-2zm0 13h2v2h-2zm0 3h2v2h-2zm1 -34h2v2h-2zm0 6h2v2h-2zm0 5h2v2h-2zm0 3h2v2h-2zm0 10h2v2h-2zm1 -20h2v2h-2zm0 2h2v2h-2zm0 14h2v2h-2zm0 17h2v2h-2zm0 8h2v2h-2zm1 -55h2v2h-2zm0 26h2v2h-2zm0 8h2v2h-2zm0 5h2v2h-2zm0 5h2v2h-2zm1 -27h2v2h-2zm0 7h2v2h-2zm0 10h2v2h-2zm0 21h2v2h-2zm0 3h2v2h-2zm1 -41h2v2h-2zm0 6h2v2h-2zm0 7h2v2h-2zm0 4h2v2h-2zm0 7h2v2h-2zm1 -24h2v2h-2zm0 15h2v2h-2zm0 2h2v2h-2zm0 7h2v2h-2zm0 6h2v2h-2zm1 -30h2v2h-2zm0 2h2v2h-2zm0 4h2v2h-2zm0 1h2v2h-2zm0 2h2v2h-2zm1 -2h2v2h-2zm0 4h2v2h-2zm0 9h2v2h-2zm0 4h2v2h-2zm0 3h2v2h-2zm1 -23h2v2h-2zm0 3h2v2h-2zm0 8h2v2h-2zm0 5h2v2h-2zm0 2h2v2h-2zm1 -36h2v2h-2zm0 27h2v2h-2zm0 7h2v2h-2zm0 10h2v2h-2zm1 -26h2v2h-2zm0 2h2v2h-2zm0 5h2v2h-2zm0 11h2v2h-2zm0 2h2v2h-2zm1 -20h2v2h-2zm0 2h2v2h-2zm0 1h2v2h-2zm0 10h2v2h-2zm0 3h2v2h-2zm0 7h2v2h-2zm1 -18h2v2h-2zm0 2h2v2h-2zm0 4h2v2h-2zm0 2h2v2h-2zm0 21h2v2h-2zm1 -25h2v2h-2zm0 2h2v2h-2zm0 7h2v2h-2zm0 2h2v2h-2zm0 6h2v2h-2zm1 -36h2v2h-2zm0 12h2v2h-2zm0 9h2v2h-2zm0 2h2v2h-2zm0 13h2v2h-2zm0 2h2v2h-2zm1 -23h2v2h-2zm0 2h2v2h-2zm0 2h2v2h-2zm0 7h2v2h-2zm0 4h2v2h-2zm1 -30h2v2h-2zm0 6h2v2h-2zm0 2h2v2h-2zm0 11h2v2h-2zm0 2h2v2h-2zm0 9h2v2h-2zm1 -28h2v2h-2zm0 4h2v2h-2zm0 2h2v2h-2zm0 11h2v2h-2zm0 9h2v2h-2zm0 13h2v2h-2zm1 -22h2v2h-2zm0 2h2v2h-2zm0 7h2v2h-2zm1 -18h2v2h-2zm0 5h2v2h-2zm0 2h2v2h-2zm0 6h2v2h-2zm0 24h2v2h-2zm1 -47h2v2h-2zm0 21h2v2h-2zm0 2h2v2h-2zm0 3h2v2h-2zm0 21h2v2h-2zm1 -50h2v2h-2zm0 18h2v2h-2zm0 2h2v2h-2zm0 13h2v2h-2zm0 17h2v2h-2zm1 -39h2v2h-2zm0 13h2v2h-2zm0 7h2v2h-2zm0 10h2v2h-2zm0 16h2v2h-2zm1 -49h2v2h-2zm0 8h2v2h-2zm0 2h2v2h-2zm0 8h2v2h-2zm0 5h2v2h-2zm1 -13h2v2h-2zm0 4h2v2h-2zm0 4h2v2h-2zm0 3h2v2h-2zm0 7h2v2h-2zm1 -28h2v2h-2zm0 1h2v2h-2zm0 11h2v2h-2zm0 9h2v2h-2zm0 12h2v2h-2zm0 3h2v2h-2zm1 -38h2v2h-2zm0 10h2v2h-2zm0 8h2v2h-2zm0 15h2v2h-2zm0 11h2v2h-2zm1 -35h2v2h-2zm0 5h2v2h-2zm0 11h2v2h-2zm0 13h2v2h-2zm1 -28h2v2h-2zm0 2h2v2h-2zm0 8h2v2h-2zm0 5h2v2h-2zm0 5h2v2h-2zm1 -20h2v2h-2zm0 2h2v2h-2zm0 8h2v2h-2zm0 5h2v2h-2zm0 2h2v2h-2zm0 21h2v2h-2zm1 -38h2v2h-2zm0 4h2v2h-2zm0 2h2v2h-2zm0 2h2v2h-2zm0 5h2v2h-2zm1 -14h2v2h-2zm0 1h2v2h-2zm0 2h2v2h-2zm0 4h2v2h-2zm0 2h2v2h-2zm0 23h2v2h-2zm1 -42h2v2h-2zm0 10h2v2h-2zm0 11h2v2h-2zm0 7h2v2h-2zm0 3h2v2h-2zm0 14h2v2h-2zm1 -41h2v2h-2zm0 15h2v2h-2zm0 5h2v2h-2zm0 10h2v2h-2zm0 2h2v2h-2zm1 -36h2v2h-2zm0 17h2v2h-2zm0 9h2v2h-2zm0 5h2v2h-2zm0 3h2v2h-2zm0 5h2v2h-2zm1 -31h2v2h-2zm0 7h2v2h-2zm0 2h2v2h-2zm0 2h2v2h-2zm0 20h2v2h-2zm0 6h2v2h-2zm1 -44h2v2h-2zm0 10h2v2h-2zm0 4h2v2h-2zm0 4h2v2h-2zm0 5h2v2h-2zm1 -24h2v2h-2zm0 10h2v2h-2zm0 5h2v2h-2zm0 6h2v2h-2zm0 31h2v2h-2zm1 -51h2v2h-2zm0 10h2v2h-2zm0 15h2v2h-2zm0 2h2v2h-2zm0 8h2v2h-2zm0 3h2v2h-2zm1 -31h2v2h-2zm0 7h2v2h-2zm0 6h2v2h-2zm0 3h2v2h-2zm0 7h2v2h-2zm1 -34h2v2h-2zm0 11h2v2h-2zm0 2h2v2h-2zm0 11h2v2h-2zm0 3h2v2h-2zm0 4h2v2h-2zm1 -17h2v2h-2zm0 2h2v2h-2zm0 2h2v2h-2zm0 2h2v2h-2zm0 4h2v2h-2zm0 10h2v2h-2zm1 -27h2v2h-2zm0 11h2v2h-2zm0 2h2v2h-2zm0 4h2v2h-2zm0 10h2v2h-2zm1 -27h2v2h-2zm0 7h2v2h-2zm0 6h2v2h-2zm0 9h2v2h-2zm0 23h2v2h-2zm1 -32h2v2h-2zm0 2h2v2h-2zm0 2h2v2h-2zm0 3h2v2h-2zm0 2h2v2h-2zm1 -22h2v2h-2zm0 11h2v2h-2zm0 6h2v2h-2zm0 7h2v2h-2zm0 11h2v2h-2zm1 -47h2v2h-2zm0 16h2v2h-2zm0 2h2v2h-2zm0 1h2v2h-2zm0 15h2v2h-2zm0 23h2v2h-2zm1 -43h2v2h-2zm0 7h2v2h-2zm0 4h2v2h-2zm0 2h2v2h-2zm0 7h2v2h-2zm0 10h2v2h-2zm1 -25h2v2h-2zm0 6h2v2h-2zm0 4h2v2h-2zm0 10h2v2h-2zm0 21h2v2h-2zm1 -51h2v2h-2zm0 18h2v2h-2zm0 5h2v2h-2zm0 2h2v2h-2zm0 10h2v2h-2zm1 -21h2v2h-2zm0 2h2v2h-2zm0 2h2v2h-2zm0 7h2v2h-2zm0 10h2v2h-2zm1 -19h2v2h-2zm0 2h2v2h-2zm0 7h2v2h-2zm0 10h2v2h-2zm0 3h2v2h-2zm1 -20h2v2h-2zm0 5h2v2h-2zm0 10h2v2h-2zm0 8h2v2h-2zm1 -38h2v2h-2zm0 11h2v2h-2zm0 2h2v2h-2zm0 4h2v2h-2zm0 24h2v2h-2zm1 -41h2v2h-2zm0 15h2v2h-2zm0 7h2v2h-2zm0 2h2v2h-2zm0 8h2v2h-2zm1 -25h2v2h-2zm0 2h2v2h-2zm0 2h2v2h-2zm0 2h2v2h-2zm0 2h2v2h-2zm0 12h2v2h-2zm1 -30h2v2h-2zm0 12h2v2h-2zm0 6h2v2h-2zm0 5h2v2h-2zm0 4h2v2h-2zm1 -15h2v2h-2zm0 11h2v2h-2zm0 4h2v2h-2zm0 8h2v2h-2zm1 -39h2v2h-2zm0 16h2v2h-2zm0 4h2v2h-2zm0 9h2v2h-2zm0 30h2v2h-2zm1 -52h2v2h-2zm0 2h2v2h-2zm0 5h2v2h-2zm0 8h2v2h-2zm0 7h2v2h-2zm1 -9h2v2h-2zm0 4h2v2h-2zm0 13h2v2h-2zm1 -30h2v2h-2zm0 11h2v2h-2zm0 2h2v2h-2zm0 2h2v2h-2zm0 5h2v2h-2zm0 7h2v2h-2zm1 -33h2v2h-2zm0 5h2v2h-2zm0 3h2v2h-2zm0 2h2v2h-2zm0 9h2v2h-2zm1 -7h2v2h-2zm0 14h2v2h-2zm0 7h2v2h-2zm0 18h2v2h-2zm0 11h2v2h-2zm1 -69h2v2h-2zm0 9h2v2h-2zm0 11h2v2h-2zm0 4h2v2h-2zm0 2h2v2h-2zm1 -9h2v2h-2zm0 13h2v2h-2zm0 15h2v2h-2zm0 9h2v2h-2zm0 4h2v2h-2zm1 -38h2v2h-2zm0 4h2v2h-2zm0 6h2v2h-2zm0 13h2v2h-2zm1 -17h2v2h-2zm0 2h2v2h-2zm0 2h2v2h-2zm0 3h2v2h-2zm0 2h2v2h-2zm0 10h2v2h-2zm1 -23h2v2h-2zm0 2h2v2h-2zm0 4h2v2h-2zm0 5h2v2h-2zm0 4h2v2h-2zm1 -4h2v2h-2zm0 12h2v2h-2zm0 3h2v2h-2zm1 -42h2v2h-2zm0 6h2v2h-2zm0 5h2v2h-2zm0 16h2v2h-2zm0 2h2v2h-2zm0 5h2v2h-2zm1 -21h2v2h-2zm0 5h2v2h-2zm0 9h2v2h-2zm0 25h2v2h-2zm1 -38h2v2h-2zm0 6h2v2h-2zm0 7h2v2h-2zm0 7h2v2h-2zm0 3h2v2h-2zm1 -21h2v2h-2zm0 2h2v2h-2zm0 4h2v2h-2zm0 2h2v2h-2zm0 24h2v2h-2zm1 -30h2v2h-2zm0 4h2v2h-2zm0 5h2v2h-2zm0 4h2v2h-2zm0 3h2v2h-2zm1 -25h2v2h-2zm0 13h2v2h-2zm0 2h2v2h-2zm0 3h2v2h-2zm0 12h2v2h-2zm1 -30h2v2h-2zm0 2h2v2h-2zm0 9h2v2h-2zm0 11h2v2h-2zm0 3h2v2h-2zm1 -27h2v2h-2zm0 4h2v2h-2zm0 7h2v2h-2zm0 9h2v2h-2zm0 10h2v2h-2zm1 -23h2v2h-2zm0 4h2v2h-2zm0 2h2v2h-2zm0 7h2v2h-2zm0 10h2v2h-2zm1 -30h2v2h-2zm0 9h2v2h-2zm0 11h2v2h-2zm0 2h2v2h-2zm0 2h2v2h-2zm0 17h2v2h-2zm1 -41h2v2h-2zm0 4h2v2h-2zm0 2h2v2h-2zm0 1h2v2h-2zm0 13h2v2h-2zm1 -13h2v2h-2zm0 8h2v2h-2zm0 2h2v2h-2zm0 7h2v2h-2zm0 3h2v2h-2zm1 -16h2v2h-2zm0 9h2v2h-2zm0 4h2v2h-2zm0 8h2v2h-2zm1 -30h2v2h-2zm0 9h2v2h-2zm0 2h2v2h-2zm0 7h2v2h-2zm0 10h2v2h-2zm0 46h2v2h-2zm1 -59h2v2h-2zm0 3h2v2h-2zm0 12h2v2h-2zm1 -17h2v2h-2zm0 7h2v2h-2zm0 13h2v2h-2zm1 -29h2v2h-2zm0 1h2v2h-2zm0 8h2v2h-2zm0 2h2v2h-2zm0 5h2v2h-2zm1 -20h2v2h-2zm0 15h2v2h-2zm0 3h2v2h-2zm0 2h2v2h-2zm0 5h2v2h-2zm1 -14h2v2h-2zm0 4h2v2h-2zm0 5h2v2h-2zm0 26h2v2h-2zm1 -37h2v2h-2zm0 4h2v2h-2zm0 2h2v2h-2zm0 7h2v2h-2zm0 3h2v2h-2zm0 18h2v2h-2zm1 -32h2v2h-2zm0 7h2v2h-2zm0 2h2v2h-2zm0 8h2v2h-2zm0 2h2v2h-2zm1 -30h2v2h-2zm0 4h2v2h-2zm0 9h2v2h-2zm0 5h2v2h-2zm0 15h2v2h-2zm1 -24h2v2h-2zm0 6h2v2h-2zm0 5h2v2h-2zm1 -22h2v2h-2zm0 6h2v2h-2zm0 1h2v2h-2zm0 6h2v2h-2zm0 2h2v2h-2zm0 9h2v2h-2zm1 -24h2v2h-2zm0 7h2v2h-2zm0 2h2v2h-2zm0 8h2v2h-2zm0 3h2v2h-2zm1 -20h2v2h-2zm0 4h2v2h-2zm0 20h2v2h-2zm0 8h2v2h-2zm0 3h2v2h-2zm1 -31h2v2h-2zm0 2h2v2h-2zm0 5h2v2h-2zm0 2h2v2h-2zm0 9h2v2h-2zm0 30h2v2h-2zm1 -52h2v2h-2zm0 17h2v2h-2zm0 3h2v2h-2zm0 2h2v2h-2zm1 -18h2v2h-2zm0 18h2v2h-2zm0 8h2v2h-2zm0 2h2v2h-2zm0 6h2v2h-2zm1 -36h2v2h-2zm0 5h2v2h-2zm0 2h2v2h-2zm0 2h2v2h-2zm0 2h2v2h-2zm0 7h2v2h-2zm1 -29h2v2h-2zm0 13h2v2h-2zm0 9h2v2h-2zm0 9h2v2h-2zm0 5h2v2h-2zm1 -33h2v2h-2zm0 2h2v2h-2zm0 11h2v2h-2zm0 6h2v2h-2zm0 9h2v2h-2zm0 23h2v2h-2zm1 -43h2v2h-2zm0 4h2v2h-2zm0 1h2v2h-2zm0 15h2v2h-2zm1 -22h2v2h-2zm0 6h2v2h-2zm0 3h2v2h-2zm0 15h2v2h-2zm0 6h2v2h-2zm1 -28h2v2h-2zm0 15h2v2h-2zm0 5h2v2h-2zm0 5h2v2h-2zm1 -23h2v2h-2zm0 9h2v2h-2zm0 11h2v2h-2zm0 6h2v2h-2zm1 -30h2v2h-2zm0 11h2v2h-2zm0 2h2v2h-2zm0 9h2v2h-2zm0 2h2v2h-2zm1 -15h2v2h-2zm0 6h2v2h-2zm0 5h2v2h-2zm0 2h2v2h-2zm1 -18h2v2h-2zm0 3h2v2h-2zm0 4h2v2h-2zm0 4h2v2h-2zm0 5h2v2h-2zm0 10h2v2h-2zm1 -30h2v2h-2zm0 2h2v2h-2zm0 2h2v2h-2zm0 5h2v2h-2zm0 21h2v2h-2zm1 -30h2v2h-2zm0 13h2v2h-2zm0 2h2v2h-2zm0 2h2v2h-2zm0 13h2v2h-2zm1 -34h2v2h-2zm0 10h2v2h-2zm0 3h2v2h-2zm0 4h2v2h-2zm0 7h2v2h-2zm0 7h2v2h-2zm1 -23h2v2h-2zm0 5h2v2h-2zm0 4h2v2h-2zm0 4h2v2h-2zm0 13h2v2h-2zm1 -31h2v2h-2zm0 14h2v2h-2zm0 2h2v2h-2zm0 5h2v2h-2zm0 7h2v2h-2zm0 5h2v2h-2zm1 -30h2v2h-2zm0 2h2v2h-2zm0 5h2v2h-2zm0 8h2v2h-2zm0 3h2v2h-2zm0 4h2v2h-2zm1 -7h2v2h-2zm0 3h2v2h-2zm0 2h2v2h-2zm0 8h2v2h-2zm1 -23h2v2h-2zm0 2h2v2h-2zm0 2h2v2h-2zm0 11h2v2h-2zm0 2h2v2h-2zm0 3h2v2h-2zm1 -23h2v2h-2zm0 9h2v2h-2zm0 4h2v2h-2zm0 3h2v2h-2zm0 10h2v2h-2zm1 -26h2v2h-2zm0 9h2v2h-2zm0 4h2v2h-2zm0 3h2v2h-2zm1 -18h2v2h-2zm0 4h2v2h-2zm0 1h2v2h-2zm0 2h2v2h-2zm0 11h2v2h-2zm1 -18h2v2h-2zm0 2h2v2h-2zm0 2h2v2h-2zm0 7h2v2h-2zm0 7h2v2h-2zm0 7h2v2h-2zm1 -27h2v2h-2zm0 7h2v2h-2zm0 8h2v2h-2zm0 17h2v2h-2zm0 3h2v2h-2zm1 -31h2v2h-2zm0 3h2v2h-2zm0 6h2v2h-2zm0 2h2v2h-2zm0 7h2v2h-2zm1 -32h2v2h-2zm0 17h2v2h-2zm0 2h2v2h-2zm0 8h2v2h-2zm0 10h2v2h-2zm0 11h2v2h-2zm1 -34h2v2h-2zm0 3h2v2h-2zm0 23h2v2h-2zm0 15h2v2h-2zm1 -34h2v2h-2zm0 2h2v2h-2zm0 7h2v2h-2zm0 2h2v2h-2zm0 10h2v2h-2zm0 9h2v2h-2zm1 -48h2v2h-2zm0 22h2v2h-2zm0 2h2v2h-2zm0 5h2v2h-2zm0 10h2v2h-2zm1 -21h2v2h-2zm0 2h2v2h-2zm0 2h2v2h-2zm0 2h2v2h-2zm0 13h2v2h-2zm1 -24h2v2h-2zm0 11h2v2h-2zm0 7h2v2h-2zm0 6h2v2h-2zm0 2h2v2h-2zm0 3h2v2h-2zm1 -38h2v2h-2zm0 12h2v2h-2zm0 2h2v2h-2zm0 4h2v2h-2zm0 2h2v2h-2zm1 -13h2v2h-2zm0 2h2v2h-2zm0 3h2v2h-2zm0 2h2v2h-2zm0 19h2v2h-2zm1 -23h2v2h-2zm0 2h2v2h-2zm0 4h2v2h-2zm0 4h2v2h-2zm0 10h2v2h-2zm0 11h2v2h-2zm1 -41h2v2h-2zm0 14h2v2h-2zm0 4h2v2h-2zm0 2h2v2h-2zm0 10h2v2h-2zm1 -31h2v2h-2zm0 11h2v2h-2zm0 17h2v2h-2zm0 3h2v2h-2zm0 18h2v2h-2zm1 -43h2v2h-2zm0 2h2v2h-2zm0 2h2v2h-2zm0 5h2v2h-2zm0 19h2v2h-2zm1 -31h2v2h-2zm0 12h2v2h-2zm0 4h2v2h-2zm0 7h2v2h-2zm0 2h2v2h-2zm0 3h2v2h-2zm1 -10h2v2h-2zm0 3h2v2h-2zm0 2h2v2h-2zm0 16h2v2h-2zm1 -42h2v2h-2zm0 6h2v2h-2zm0 9h2v2h-2zm0 2h2v2h-2zm0 4h2v2h-2zm0 13h2v2h-2zm1 -30h2v2h-2zm0 7h2v2h-2zm0 6h2v2h-2zm0 7h2v2h-2zm0 2h2v2h-2zm0 5h2v2h-2zm1 -10h2v2h-2zm0 3h2v2h-2zm0 32h2v2h-2zm1 -46h2v2h-2zm0 1h2v2h-2zm0 13h2v2h-2zm0 4h2v2h-2zm0 6h2v2h-2zm1 -34h2v2h-2zm0 8h2v2h-2zm0 5h2v2h-2zm0 2h2v2h-2zm0 4h2v2h-2zm0 20h2v2h-2zm1 -31h2v2h-2zm0 7h2v2h-2zm0 2h2v2h-2zm0 2h2v2h-2zm1 -8h2v2h-2zm0 8h2v2h-2zm0 2h2v2h-2zm0 10h2v2h-2zm1 -20h2v2h-2zm0 6h2v2h-2zm0 7h2v2h-2zm0 10h2v2h-2zm0 5h2v2h-2zm0 3h2v2h-2zm1 -50h2v2h-2zm0 23h2v2h-2zm0 2h2v2h-2zm0 2h2v2h-2zm0 7h2v2h-2zm1 -16h2v2h-2zm0 5h2v2h-2zm0 6h2v2h-2zm0 18h2v2h-2zm0 13h2v2h-2zm1 -39h2v2h-2zm0 6h2v2h-2zm0 2h2v2h-2zm0 13h2v2h-2zm0 5h2v2h-2zm1 -24h2v2h-2zm0 4h2v2h-2zm0 5h2v2h-2zm0 2h2v2h-2zm0 19h2v2h-2zm0 30h2v2h-2zm1 -56h2v2h-2zm0 2h2v2h-2zm0 3h2v2h-2zm0 10h2v2h-2zm1 -19h2v2h-2zm0 2h2v2h-2zm0 9h2v2h-2zm0 2h2v2h-2zm0 8h2v2h-2zm1 -28h2v2h-2zm0 11h2v2h-2zm0 7h2v2h-2zm0 5h2v2h-2zm1 -14h2v2h-2zm0 2h2v2h-2zm0 2h2v2h-2zm0 5h2v2h-2zm0 2h2v2h-2zm1 -22h2v2h-2zm0 22h2v2h-2zm0 3h2v2h-2zm0 3h2v2h-2zm0 5h2v2h-2zm1 -38h2v2h-2zm0 10h2v2h-2zm0 8h2v2h-2zm0 2h2v2h-2zm0 3h2v2h-2zm1 -13h2v2h-2zm0 4h2v2h-2zm0 6h2v2h-2zm0 3h2v2h-2zm0 2h2v2h-2zm0 2h2v2h-2zm1 -11h2v2h-2zm0 4h2v2h-2zm0 5h2v2h-2zm0 2h2v2h-2zm1 -27h2v2h-2zm0 5h2v2h-2zm0 5h2v2h-2zm0 17h2v2h-2zm0 6h2v2h-2zm1 -24h2v2h-2zm0 3h2v2h-2zm0 8h2v2h-2zm0 10h2v2h-2zm0 11h2v2h-2zm1 -39h2v2h-2zm0 7h2v2h-2zm0 3h2v2h-2zm0 21h2v2h-2zm1 -21h2v2h-2zm0 4h2v2h-2zm0 9h2v2h-2zm0 8h2v2h-2zm0 5h2v2h-2zm1 -36h2v2h-2zm0 7h2v2h-2zm0 5h2v2h-2zm0 2h2v2h-2zm0 9h2v2h-2zm1 -11h2v2h-2zm0 6h2v2h-2zm0 3h2v2h-2zm0 4h2v2h-2zm1 -22h2v2h-2zm0 4h2v2h-2zm0 1h2v2h-2zm0 4h2v2h-2zm0 2h2v2h-2zm1 -6h2v2h-2zm0 4h2v2h-2zm0 6h2v2h-2zm0 13h2v2h-2zm0 11h2v2h-2zm1 -45h2v2h-2zm0 11h2v2h-2zm0 2h2v2h-2zm0 2h2v2h-2zm0 4h2v2h-2zm1 -2h2v2h-2zm0 7h2v2h-2zm0 2h2v2h-2zm0 2h2v2h-2zm0 3h2v2h-2zm1 -25h2v2h-2zm0 4h2v2h-2zm0 1h2v2h-2zm0 2h2v2h-2zm0 32h2v2h-2zm1 -42h2v2h-2zm0 1h2v2h-2zm0 9h2v2h-2zm0 11h2v2h-2zm0 4h2v2h-2zm0 6h2v2h-2zm1 -24h2v2h-2zm0 7h2v2h-2zm0 7h2v2h-2zm0 2h2v2h-2zm1 -9h2v2h-2zm0 4h2v2h-2zm0 5h2v2h-2zm0 13h2v2h-2zm1 -29h2v2h-2zm0 7h2v2h-2zm0 7h2v2h-2zm0 2h2v2h-2zm0 5h2v2h-2zm1 -21h2v2h-2zm0 7h2v2h-2zm0 9h2v2h-2zm0 2h2v2h-2zm0 14h2v2h-2zm1 -39h2v2h-2zm0 7h2v2h-2zm0 5h2v2h-2zm0 6h2v2h-2zm0 18h2v2h-2zm1 -26h2v2h-2zm0 2h2v2h-2zm0 6h2v2h-2zm0 7h2v2h-2zm0 14h2v2h-2zm1 -34h2v2h-2zm0 5h2v2h-2zm0 8h2v2h-2zm0 5h2v2h-2zm0 2h2v2h-2zm1 -17h2v2h-2zm0 17h2v2h-2zm0 8h2v2h-2zm0 6h2v2h-2zm0 3h2v2h-2zm1 -30h2v2h-2zm0 2h2v2h-2zm0 2h2v2h-2zm0 2h2v2h-2zm0 15h2v2h-2zm1 -26h2v2h-2zm0 9h2v2h-2zm0 12h2v2h-2z"/></g>
    <!-- baseline -->
    <path d="M113 589.5H1877" stroke="#000" stroke-width="1"/>
    <!-- model curves -->
    <path d="M144.00 588.5L154.00 588.5L164.00 588.5L174.00 588.5L184.00 588.5L190.00 588.5L190.25 588.5L190.50 588.5L190.75 588.5L191.00 588.5L191.25 588.5L191.50 588.5L191.75 588.5L192.00 588.5L192.25 588.5L192.50 588.5L192.75 588.5L193.00 588.5L193.25 588.5L193.50 588.5L193.75 588.5L194.00 588.5L194.25 588.5L194.50 588.5L194.75 588.5L195.00 588.5L195.25 588.5L195.50 588.5L195.75 588.5L196.00 588.5L196.25 588.5L196.50 588.5L196.75 588.5L197.00 588.5L197.25 588.5L197.50 588.5L197.75 588.5L198.00 588.5L198.25 588.5L198.50 588.5L198.75 588.5L199.00 588.5L199.25 588.4L199.50 588.4L199.75 588.4L200.00 588.4L200.25 588.4L200.50 588.4L200.75 588.0L201.00 587.0L201.25 585.7L201.50 583.5L201.75 580.0L202.00 575.6L202.25 570.4L202.50 564.6L202.75 558.4L203.00 552.0L203.25 544.7L203.50 535.9L203.75 526.1L204.00 515.6L204.25 505.0L204.50 493.9L204.75 481.9L205.00 469.4L205.25 457.0L205.50 445.0L205.75 433.5L206.00 422.2L206.25 411.1L206.50 400.0L206.75 389.2L207.00 378.8L207.25 368.4L207.50 357.9L207.75 346.8L208.00 335.0L208.25 321.8L208.50 307.3L208.75 292.1L209.00 277.1L209.25 262.8L209.50 250.0L209.75 238.3L210.00 227.0L210.25 216.4L210.50 206.8L210.75 198.5L211.00 191.5L211.25 185.3L211.50 179.7L211.75 174.5L212.00 169.6L212.25 164.8L212.50 160.0L212.75 155.1L213.00 150.1L213.25 145.1L213.50 140.3L213.75 135.8L214.00 131.7L214.25 128.0L214.50 125.0L214.75 122.4L215.00 119.8L215.25 117.5L215.50 115.3L215.75 113.4L216.00 111.8L216.25 110.4L216.50 109.5L216.75 108.8L217.00 108.1L217.25 107.7L217.50 107.5L217.75 107.6L218.00 108.0L218.25 108.5L218.50 109.1L218.75 109.8L219.00 110.5L219.25 111.3L219.50 112.3L219.75 113.5L220.00 114.9L220.25 116.3L220.50 117.8L220.75 119.4L221.00 121.0L221.25 122.7L221.50 124.6L221.75 126.7L222.00 128.8L222.25 131.1L222.50 133.4L222.75 135.8L223.00 138.1L223.25 140.5L223.50 142.7L223.75 144.9L224.00 147.0L224.25 149.0L224.50 150.9L224.75 152.9L225.00 154.8L225.25 156.7L225.50 158.5L225.75 160.4L226.00 162.2L226.25 164.0L226.50 165.8L226.75 167.6L227.00 169.4L227.25 171.1L227.50 172.9L227.75 174.7L228.00 176.5L228.25 178.2L228.50 180.0L228.75 181.8L229.00 183.6L229.25 185.3L229.50 187.1L229.75 188.9L230.00 190.6L230.25 192.4L230.50 194.1L230.75 195.9L231.00 197.6L231.25 199.3L231.50 201.0L231.75 202.7L232.00 204.4L232.25 206.1L232.50 207.7L232.75 209.4L233.00 211.0L233.25 212.6L233.50 214.3L233.75 215.9L234.00 217.6L234.25 219.2L234.50 220.9L234.75 222.5L235.00 224.0L235.25 225.5L235.50 226.9L235.75 228.3L236.00 229.5L236.25 230.7L236.50 231.8L236.75 232.9L237.00 234.0L237.25 235.1L237.50 236.1L237.75 237.1L238.00 238.0L238.25 239.0L238.50 239.9L238.75 240.8L239.00 241.7L239.25 242.6L239.50 243.4L239.75 244.2L240.00 245.1L240.25 245.9L240.50 246.6L240.75 247.4L241.00 248.2L241.25 248.9L241.50 249.7L241.75 250.4L242.00 251.2L242.25 251.9L242.50 252.6L242.75 253.4L243.00 254.1L243.25 254.8L243.50 255.5L243.75 256.2L244.00 256.9L244.25 257.5L244.50 258.2L244.75 258.8L245.00 259.5L245.25 260.1L245.50 260.7L245.75 261.3L246.00 261.9L246.25 262.5L246.50 263.1L246.75 263.6L247.00 264.2L247.25 264.7L247.50 265.2L247.75 265.8L248.00 266.2L248.25 266.7L248.50 267.2L248.75 267.6L249.00 268.1L249.25 268.5L249.50 268.9L249.75 269.4L250.00 269.8L250.25 270.2L250.50 270.6L250.75 271.0L251.00 271.4L251.25 271.7L251.50 272.1L251.75 272.5L252.00 272.8L252.25 273.2L252.50 273.6L252.75 273.9L253.00 274.2L253.25 274.6L253.50 274.9L253.75 275.2L254.00 275.6L254.25 275.9L254.50 276.2L254.75 276.5L255.00 276.8L255.25 277.1L255.50 277.4L255.75 277.7L256.00 278.0L256.25 278.3L256.50 278.6L256.75 278.9L257.00 279.2L257.25 279.5L257.50 279.8L257.75 280.1L258.00 280.4L258.25 280.7L258.50 280.9L258.75 281.2L259.00 281.5L259.25 281.8L259.50 282.0L259.75 282.3L260.00 282.6L260.25 282.8L260.50 283.1L260.75 283.4L261.00 283.6L261.25 283.9L261.50 284.1L261.75 284.4L262.00 284.6L262.25 284.9L262.50 285.1L262.75 285.4L263.00 285.6L263.25 285.9L263.50 286.1L263.75 286.3L264.00 286.6L264.25 286.8L264.50 287.0L264.75 287.3L265.00 287.5L265.25 287.7L265.50 287.9L265.75 288.2L266.00 288.4L266.25 288.6L266.50 288.8L266.75 289.0L267.00 289.3L267.25 289.5L267.50 289.7L267.75 289.9L268.00 290.1L268.25 290.3L268.50 290.5L268.75 290.7L269.00 290.9L269.25 291.2L269.50 291.4L269.75 291.6L270.00 291.8L270.25 292.0L270.50 292.2L270.75 292.4L271.00 292.5L271.25 292.7L271.50 292.9L271.75 293.1L272.00 293.3L272.25 293.5L272.50 293.7L272.75 293.9L273.00 294.1L273.25 294.3L273.50 294.5L273.75 294.6L274.00 294.8L274.25 295.0L274.50 295.2L274.75 295.4L275.00 295.5L275.25 295.7L275.50 295.9L275.75 296.1L276.00 296.3L276.25 296.4L276.50 296.6L276.75 296.8L277.00 297.0L277.25 297.1L277.50 297.3L277.75 297.5L278.00 297.6L278.25 297.8L278.50 298.0L278.75 298.2L279.00 298.3L279.25 298.5L279.50 298.7L279.75 298.8L280.00 299.0L280.25 299.1L280.50 299.3L280.75 299.5L281.00 299.6L281.25 299.8L281.50 300.0L281.75 300.1L282.00 300.3L282.25 300.4L282.50 300.6L282.75 300.8L283.00 300.9L283.25 301.1L283.50 301.2L283.75 301.4L284.00 301.5L284.25 301.7L284.50 301.9L284.75 302.0L285.00 302.2L285.25 302.3L285.50 302.5L285.75 302.6L286.00 302.8L286.25 302.9L286.50 303.1L286.75 303.2L287.00 303.4L287.25 303.5L287.50 303.7L287.75 303.8L288.00 304.0L288.25 304.2L288.50 304.3L288.75 304.4L289.00 304.6L289.25 304.7L289.50 304.9L289.75 305.0L290.00 305.2L290.25 305.3L290.50 305.5L290.75 305.6L291.00 305.8L291.25 305.9L291.50 306.1L291.75 306.2L292.00 306.3L292.25 306.5L292.50 306.6L292.75 306.8L293.00 306.9L293.25 307.0L293.50 307.2L293.75 307.3L294.00 307.4L294.25 307.6L294.50 307.7L294.75 307.9L295.00 308.0L295.25 308.1L295.50 308.3L295.75 308.4L296.00 308.5L296.25 308.7L296.50 308.8L296.75 308.9L297.00 309.1L297.25 309.2L297.50 309.3L297.75 309.5L298.00 309.6L298.25 309.7L298.50 309.9L298.75 310.0L299.00 310.1L299.25 310.2L299.50 310.4L299.75 310.5L300.00 310.6L304.00 312.7L308.00 314.7L312.00 316.7L316.00 318.8L320.00 320.9L324.00 323.0L328.00 325.1L332.00 327.2L336.00 329.3L340.00 331.4L344.00 333.5L348.00 335.7L352.00 337.8L356.00 340.0L360.00 342.2L364.00 344.3L368.00 346.5L372.00 348.6L376.00 350.7L380.00 352.8L384.00 354.9L388.00 357.0L392.00 359.1L396.00 361.2L400.00 363.3L404.00 365.4L408.00 367.4L412.00 369.5L416.00 371.6L420.00 373.6L424.00 375.7L428.00 377.7L432.00 379.8L436.00 381.8L440.00 383.8L444.00 385.9L448.00 387.9L452.00 389.9L456.00 392.0L460.00 394.0L464.00 396.0L468.00 398.0L472.00 400.0L476.00 402.0L480.00 404.0L484.00 406.0L488.00 408.0L492.00 410.0L496.00 412.0L500.00 413.9L504.00 415.9L508.00 417.9L512.00 419.8L516.00 421.8L520.00 423.8L524.00 425.7L528.00 427.7L532.00 429.6L536.00 431.6L540.00 433.5L544.00 435.4L548.00 437.4L552.00 439.3L556.00 441.3L560.00 443.2L564.00 445.1L568.00 447.1L572.00 449.0L576.00 450.9L580.00 452.8L584.00 454.7L588.00 456.6L592.00 458.4L596.00 460.3L600.00 462.2L604.00 464.0L608.00 465.8L612.00 467.7L616.00 469.5L620.00 471.2L624.00 473.0L628.00 474.8L632.00 476.6L636.00 478.4L640.00 480.1L644.00 481.9L648.00 483.7L652.00 485.4L656.00 487.2L660.00 488.9L664.00 490.6L668.00 492.3L672.00 494.1L676.00 495.7L680.00 497.4L684.00 499.1L688.00 500.7L692.00 502.4L696.00 504.0L700.00 505.6L704.00 507.2L708.00 508.7L712.00 510.2L716.00 511.8L720.00 513.2L724.00 514.7L728.00 516.2L732.00 517.7L736.00 519.1L740.00 520.6L744.00 522.0L748.00 523.4L752.00 524.9L756.00 526.3L760.00 527.7L764.00 529.1L768.00 530.4L772.00 531.8L776.00 533.1L780.00 534.4L784.00 535.7L788.00 537.0L792.00 538.2L796.00 539.4L800.00 540.6L804.00 541.8L808.00 543.0L812.00 544.1L816.00 545.2L820.00 546.2L824.00 547.3L828.00 548.3L832.00 549.4L836.00 550.4L840.00 551.4L844.00 552.4L848.00 553.3L852.00 554.3L856.00 555.2L860.00 556.2L864.00 557.1L868.00 558.0L872.00 558.9L876.00 559.7L880.00 560.6L884.00 561.4L888.00 562.2L892.00 563.0L896.00 563.8L900.00 564.6L904.00 565.3L908.00 566.0L912.00 566.7L916.00 567.4L920.00 568.0L924.00 568.6L928.00 569.2L932.00 569.8L936.00 570.4L940.00 571.0L944.00 571.6L948.00 572.2L952.00 572.7L956.00 573.2L960.00 573.8L964.00 574.3L968.00 574.7L972.00 575.2L976.00 575.7L980.00 576.1L984.00 576.5L988.00 576.9L992.00 577.3L996.00 577.7L1000.00 578.0L1004.00 578.3L1008.00 578.6L1012.00 579.0L1016.00 579.3L1020.00 579.5L1024.00 579.8L1028.00 580.1L1032.00 580.4L1036.00 580.7L1040.00 580.9L1044.00 581.2L1048.00 581.4L1052.00 581.6L1056.00 581.9L1060.00 582.1L1064.00 582.3L1068.00 582.5L1072.00 582.7L1076.00 582.9L1080.00 583.1L1084.00 583.3L1088.00 583.5L1092.00 583.7L1096.00 583.8L1100.00 584.0L1104.00 584.2L1108.00 584.3L1112.00 584.5L1116.00 584.6L1120.00 584.8L1124.00 584.9L1128.00 585.1L1132.00 585.2L1136.00 585.3L1140.00 585.5L1144.00 585.6L1148.00 585.7L1152.00 585.8L1156.00 586.0L1160.00 586.1L1164.00 586.2L1168.00 586.3L1172.00 586.4L1176.00 586.5L1180.00 586.6L1184.00 586.7L1188.00 586.8L1192.00 586.9L1196.00 586.9L1200.00 587.0L1204.00 587.1L1208.00 587.1L1212.00 587.2L1216.00 587.3L1220.00 587.3L1224.00 587.4L1228.00 587.5L1232.00 587.5L1236.00 587.6L1240.00 587.6L1244.00 587.7L1248.00 587.7L1252.00 587.8L1256.00 587.8L1260.00 587.9L1264.00 587.9L1268.00 588.0L1272.00 588.0L1276.00 588.1L1280.00 588.1L1284.00 588.1L1288.00 588.2L1292.00 588.2L1296.00 588.2L1300.00 588.3L1360.00 588.5L1420.00 588.5L1480.00 588.5L1540.00 588.5L1600.00 588.5L1660.00 588.5L1720.00 588.5L1722.00 588.5" stroke="#00f" stroke-width="2" stroke-linejoin="round"/>
    <path d="M144.00 588.5L154.00 588.5L164.00 588.5L174.00 588.5L184.00 588.5L190.00 588.5L190.25 588.5L190.50 588.5L190.75 588.5L191.00 588.5L191.25 588.5L191.50 588.5L191.75 588.5L192.00 588.5L192.25 588.5L192.50 588.5L192.75 588.5L193.00 588.5L193.25 588.5L193.50 588.5L193.75 588.5L194.00 588.5L194.25 588.5L194.50 588.5L194.75 588.5L195.00 588.4L195.25 588.4L195.50 588.4L195.75 588.4L196.00 588.4L196.25 588.4L196.50 588.3L196.75 587.5L197.00 586.0L197.25 580.8L197.50 570.5L197.75 558.2L198.00 547.0L198.25 537.6L198.50 528.5L198.75 519.4L199.00 510.2L199.25 500.5L199.50 490.0L199.75 478.5L200.00 466.1L200.25 453.1L200.50 440.0L200.75 426.2L201.00 411.7L201.25 397.7L201.50 385.0L201.75 374.3L202.00 364.8L202.25 355.4L202.50 345.0L202.75 332.9L203.00 320.0L203.25 306.9L203.50 293.6L203.75 280.0L204.00 265.7L204.25 251.1L204.50 238.0L204.75 226.7L205.00 216.4L205.25 206.9L205.50 198.0L205.75 189.7L206.00 182.0L206.25 174.8L206.50 168.0L206.75 161.4L207.00 155.0L207.25 149.1L207.50 144.0L207.75 139.6L208.00 135.6L208.25 131.9L208.50 128.5L208.75 125.2L209.00 122.1L209.25 119.0L209.50 115.9L209.75 112.9L210.00 110.0L210.25 107.3L210.50 104.8L210.75 102.5L211.00 100.3L211.25 98.3L211.50 96.4L211.75 94.8L212.00 93.5L212.25 92.4L212.50 91.5L212.75 90.8L213.00 90.5L213.25 90.7L213.50 91.1L213.75 91.8L214.00 92.5L214.25 93.5L214.50 95.0L214.75 96.9L215.00 98.9L215.25 101.0L215.50 103.0L215.75 105.0L216.00 107.1L216.25 109.3L216.50 111.5L216.75 113.8L217.00 116.1L217.25 118.5L217.50 120.8L217.75 123.2L218.00 125.5L218.25 127.8L218.50 130.0L218.75 132.2L219.00 134.4L219.25 136.5L219.50 138.7L219.75 140.8L220.00 142.9L220.25 145.1L220.50 147.2L220.75 149.3L221.00 151.4L221.25 153.5L221.50 155.6L221.75 157.7L222.00 159.8L222.25 161.9L222.50 164.0L222.75 166.1L223.00 168.2L223.25 170.3L223.50 172.4L223.75 174.5L224.00 176.6L224.25 178.7L224.50 180.8L224.75 182.9L225.00 185.0L225.25 187.1L225.50 189.3L225.75 191.4L226.00 193.5L226.25 195.7L226.50 197.8L226.75 200.0L227.00 202.1L227.25 204.3L227.50 206.4L227.75 208.6L228.00 210.7L228.25 212.8L228.50 215.0L228.75 217.1L229.00 219.2L229.25 221.3L229.50 223.4L229.75 225.5L230.00 227.5L230.25 229.6L230.50 231.6L230.75 233.7L231.00 235.8L231.25 237.9L231.50 240.0L231.75 242.1L232.00 244.2L232.25 246.2L232.50 248.3L232.75 250.4L233.00 252.4L233.25 254.4L233.50 256.4L233.75 258.3L234.00 260.2L234.25 262.1L234.50 263.9L234.75 265.7L235.00 267.4L235.25 269.0L235.50 270.6L235.75 272.2L236.00 273.8L236.25 275.4L236.50 276.9L236.75 278.4L237.00 279.9L237.25 281.4L237.50 282.8L237.75 284.2L238.00 285.7L238.25 287.1L238.50 288.4L238.75 289.8L239.00 291.1L239.25 292.5L239.50 293.8L239.75 295.1L240.00 296.3L240.25 297.6L240.50 298.9L240.75 300.1L241.00 301.3L241.25 302.5L241.50 303.7L241.75 304.9L242.00 306.1L242.25 307.3L242.50 308.4L242.75 309.6L243.00 310.7L243.25 311.9L243.50 313.0L243.75 314.1L244.00 315.2L244.25 316.3L244.50 317.4L244.75 318.5L245.00 319.6L245.25 320.6L245.50 321.7L245.75 322.7L246.00 323.8L246.25 324.8L246.50 325.8L246.75 326.7L247.00 327.7L247.25 328.6L247.50 329.6L247.75 330.5L248.00 331.3L248.25 332.2L248.50 333.0L248.75 333.9L249.00 334.7L249.25 335.4L249.50 336.2L249.75 337.0L250.00 337.7L250.25 338.4L250.50 339.1L250.75 339.8L251.00 340.5L251.25 341.2L251.50 341.9L251.75 342.6L252.00 343.3L252.25 343.9L252.50 344.6L252.75 345.2L253.00 345.8L253.25 346.4L253.50 347.1L253.75 347.7L254.00 348.3L254.25 348.8L254.50 349.4L254.75 350.0L255.00 350.5L255.25 351.1L255.50 351.6L255.75 352.2L256.00 352.7L256.25 353.2L256.50 353.7L256.75 354.2L257.00 354.7L257.25 355.2L257.50 355.7L257.75 356.2L258.00 356.6L258.25 357.1L258.50 357.5L258.75 358.0L259.00 358.4L259.25 358.8L259.50 359.3L259.75 359.7L260.00 360.1L260.25 360.6L260.50 361.0L260.75 361.4L261.00 361.8L261.25 362.2L261.50 362.6L261.75 363.0L262.00 363.4L262.25 363.8L262.50 364.2L262.75 364.5L263.00 364.9L263.25 365.3L263.50 365.7L263.75 366.0L264.00 366.4L264.25 366.7L264.50 367.1L264.75 367.4L265.00 367.8L265.25 368.1L265.50 368.5L265.75 368.8L266.00 369.1L266.25 369.5L266.50 369.8L266.75 370.1L267.00 370.4L267.25 370.7L267.50 371.0L267.75 371.4L268.00 371.7L268.25 372.0L268.50 372.3L268.75 372.5L269.00 372.8L269.25 373.1L269.50 373.4L269.75 373.7L270.00 374.0L270.25 374.2L270.50 374.5L270.75 374.8L271.00 375.0L271.25 375.3L271.50 375.6L271.75 375.8L272.00 376.1L272.25 376.3L272.50 376.6L272.75 376.9L273.00 377.1L273.25 377.3L273.50 377.6L273.75 377.8L274.00 378.1L274.25 378.3L274.50 378.6L274.75 378.8L275.00 379.0L275.25 379.3L275.50 379.5L275.75 379.7L276.00 380.0L276.25 380.2L276.50 380.4L276.75 380.6L277.00 380.9L277.25 381.1L277.50 381.3L277.75 381.5L278.00 381.7L278.25 382.0L278.50 382.2L278.75 382.4L279.00 382.6L279.25 382.8L279.50 383.0L279.75 383.2L280.00 383.4L280.25 383.6L280.50 383.8L280.75 384.0L281.00 384.2L281.25 384.4L281.50 384.6L281.75 384.8L282.00 385.0L282.25 385.2L282.50 385.4L282.75 385.6L283.00 385.8L283.25 386.0L283.50 386.1L283.75 386.3L284.00 386.5L284.25 386.7L284.50 386.9L284.75 387.0L285.00 387.2L285.25 387.4L285.50 387.6L285.75 387.8L286.00 387.9L286.25 388.1L286.50 388.3L286.75 388.5L287.00 388.6L287.25 388.8L287.50 389.0L287.75 389.1L288.00 389.3L288.25 389.5L288.50 389.6L288.75 389.8L289.00 390.0L289.25 390.1L289.50 390.3L289.75 390.4L290.00 390.6L290.25 390.8L290.50 390.9L290.75 391.1L291.00 391.2L291.25 391.4L291.50 391.5L291.75 391.7L292.00 391.8L292.25 392.0L292.50 392.1L292.75 392.3L293.00 392.4L293.25 392.6L293.50 392.7L293.75 392.9L294.00 393.0L294.25 393.2L294.50 393.3L294.75 393.4L295.00 393.6L295.25 393.7L295.50 393.9L295.75 394.0L296.00 394.1L296.25 394.3L296.50 394.4L296.75 394.6L297.00 394.7L297.25 394.8L297.50 395.0L297.75 395.1L298.00 395.2L298.25 395.4L298.50 395.5L298.75 395.6L299.00 395.8L299.25 395.9L299.50 396.0L299.75 396.1L300.00 396.3L304.00 398.2L308.00 400.1L312.00 401.8L316.00 403.4L320.00 404.9L324.00 406.5L328.00 408.0L332.00 409.6L336.00 411.2L340.00 412.9L344.00 414.5L348.00 416.2L352.00 417.9L356.00 419.8L360.00 421.7L364.00 423.7L368.00 425.8L372.00 428.0L376.00 430.1L380.00 432.1L384.00 434.0L388.00 435.9L392.00 437.6L396.00 439.3L400.00 441.0L404.00 442.6L408.00 444.2L412.00 445.8L416.00 447.4L420.00 449.0L424.00 450.5L428.00 452.1L432.00 453.8L436.00 455.4L440.00 457.1L444.00 458.8L448.00 460.5L452.00 462.1L456.00 463.8L460.00 465.5L464.00 467.2L468.00 468.9L472.00 470.6L476.00 472.3L480.00 473.9L484.00 475.6L488.00 477.2L492.00 478.9L496.00 480.5L500.00 482.1L504.00 483.7L508.00 485.3L512.00 486.9L516.00 488.4L520.00 490.0L524.00 491.5L528.00 493.1L532.00 494.6L536.00 496.0L540.00 497.5L544.00 498.9L548.00 500.4L552.00 501.9L556.00 503.3L560.00 504.7L564.00 506.2L568.00 507.6L572.00 509.1L576.00 510.5L580.00 511.9L584.00 513.3L588.00 514.7L592.00 516.0L596.00 517.4L600.00 518.7L604.00 520.0L608.00 521.3L612.00 522.6L616.00 523.8L620.00 525.0L624.00 526.2L628.00 527.4L632.00 528.6L636.00 529.7L640.00 530.9L644.00 532.0L648.00 533.2L652.00 534.3L656.00 535.4L660.00 536.5L664.00 537.6L668.00 538.7L672.00 539.8L676.00 540.8L680.00 541.9L684.00 542.9L688.00 543.9L692.00 544.9L696.00 545.8L700.00 546.8L704.00 547.7L708.00 548.6L712.00 549.5L716.00 550.4L720.00 551.2L724.00 552.1L728.00 552.9L732.00 553.7L736.00 554.5L740.00 555.3L744.00 556.1L748.00 556.9L752.00 557.7L756.00 558.4L760.00 559.2L764.00 559.9L768.00 560.6L772.00 561.3L776.00 562.0L780.00 562.7L784.00 563.4L788.00 564.0L792.00 564.7L796.00 565.3L800.00 565.9L804.00 566.5L808.00 567.1L812.00 567.7L816.00 568.2L820.00 568.8L824.00 569.3L828.00 569.8L832.00 570.3L836.00 570.8L840.00 571.3L844.00 571.8L848.00 572.3L852.00 572.8L856.00 573.3L860.00 573.7L864.00 574.2L868.00 574.6L872.00 575.1L876.00 575.5L880.00 575.9L884.00 576.3L888.00 576.7L892.00 577.1L896.00 577.5L900.00 577.8L904.00 578.2L908.00 578.5L912.00 578.9L916.00 579.2L920.00 579.5L924.00 579.8L928.00 580.1L932.00 580.3L936.00 580.6L940.00 580.9L944.00 581.1L948.00 581.3L952.00 581.6L956.00 581.8L960.00 582.0L964.00 582.2L968.00 582.4L972.00 582.7L976.00 582.9L980.00 583.1L984.00 583.3L988.00 583.5L992.00 583.7L996.00 583.8L1000.00 584.0L1004.00 584.1L1008.00 584.3L1012.00 584.4L1016.00 584.6L1020.00 584.7L1024.00 584.9L1028.00 585.0L1032.00 585.1L1036.00 585.2L1040.00 585.4L1044.00 585.5L1048.00 585.6L1052.00 585.7L1056.00 585.8L1060.00 585.9L1064.00 586.0L1068.00 586.1L1072.00 586.2L1076.00 586.3L1080.00 586.4L1084.00 586.5L1088.00 586.6L1092.00 586.7L1096.00 586.7L1100.00 586.8L1104.00 586.9L1108.00 586.9L1112.00 587.0L1116.00 587.1L1120.00 587.1L1124.00 587.2L1128.00 587.2L1132.00 587.3L1136.00 587.3L1140.00 587.4L1144.00 587.4L1148.00 587.5L1152.00 587.5L1156.00 587.6L1160.00 587.6L1164.00 587.7L1168.00 587.7L1172.00 587.8L1176.00 587.8L1180.00 587.8L1184.00 587.9L1188.00 587.9L1192.00 587.9L1196.00 588.0L1200.00 588.0L1204.00 588.0L1208.00 588.1L1212.00 588.1L1216.00 588.1L1220.00 588.1L1224.00 588.2L1228.00 588.2L1232.00 588.2L1236.00 588.3L1240.00 588.3L1244.00 588.3L1248.00 588.3L1252.00 588.3L1256.00 588.4L1260.00 588.4L1264.00 588.4L1268.00 588.4L1272.00 588.4L1276.00 588.5L1280.00 588.5L1284.00 588.5L1288.00 588.5L1292.00 588.5L1296.00 588.5L1300.00 588.5L1360.00 588.5L1420.00 588.5L1480.00 588.5L1540.00 588.5L1600.00 588.5L1660.00 588.5L1720.00 588.5L1722.00 588.5" stroke="#0f0" stroke-width="2" stroke-linejoin="round"/>
    <!-- ROI lines -->
    <path d="M144.5 90V787M1722.5 90V787" stroke="#000" stroke-width="1"/>
    <!-- y axis -->
    <path d="M79.5 90V788M76 90.5h4M76 131.5h4M76 787.5h4M77 96.5h3M77 103.5h3M77 111.5h3M77 120.5h3M77 144.5h3M77 161.5h3M77 185.5h3M77 226.5h3" stroke="#000" stroke-width="1"/>
    <!-- x axis (main) -->
    <path d="M113 820.5H1878 M113.5 820v4M465.5 820v4M818.5 820v4M1171.5 820v4M1524.5 820v4M1877.5 820v4 M183.5 820v3M254.5 820v3M324.5 820v3M395.5 820v3M536.5 820v3M606.5 820v3M677.5 820v3M748.5 820v3M889.5 820v3M959.5 820v3M1030.5 820v3M1100.5 820v3M1241.5 820v3M1312.5 820v3M1383.5 820v3M1453.5 820v3M1594.5 820v3M1665.5 820v3M1735.5 820v3M1806.5 820v3" stroke="#000" stroke-width="1"/>
    <!-- residual grid -->
    <path d="M83 897.5H1905M83 914.5H1905M83 932.5H1905M83 949.5H1905M83 967.5H1905" stroke="#b2b2b2" stroke-width="1" stroke-dasharray="4 2"/>
    <path d="M79.5 897V968M76 897.5h4M76 914.5h4M76 932.5h4M76 949.5h4M76 967.5h4 M77 901.5h3M77 904.5h3M77 908.5h3M77 911.5h3M77 918.5h3M77 922.5h3M77 925.5h3M77 929.5h3M77 936.5h3M77 939.5h3M77 943.5h3M77 946.5h3M77 953.5h3M77 957.5h3M77 960.5h3M77 964.5h3" stroke="#000" stroke-width="1"/>
    <path d="M143 914V914H144V914H145V920H146V922H147V917H148V917H149V923H150V925H151V919H152V918H153V918H154V918H155V908H156V908H157V908H158V914H159V913H160V913H161V917H162V917H163V917H164V911H165V911H166V919H167V920H168V921H169V921H170V923H171V918H172V918H173V921H174V921H175V911H176V911H177V908H178V908H179V912H180V919H181V921H182V915H183V911H184V911H185V916H186V905H187V905H188V908H189V908H190V916H191V922H192V922H193V919H194V919H195V923H196V923H197V919H198V919H199V915H200V915H201V914H202V914H203V918H204V920H205V914H206V914H207V897H208V897H209V914H210V916H211V916H212V920H213V915H214V915H215V921H216V905H217V905H218V913H219V909H220V905H221V905H222V905H223V916H224V916H225V924H226V922H227V922H228V911H229V911H230V912H231V917H232V922H233V915H234V912H235V912H236V915H237V920H238V921H239V918H240V918H241V917H242V917H243V920H244V920H245V915H246V910H247V910H248V921H249V921H250V918H251V918H252V922H253V913H254V913H255V918H256V914H257V914H258V914H259V914H260V916H261V916H262V918H263V920H264V920H265V921H266V922H267V915H268V915H269V915H270V917H271V919H272V920H273V920H274V920H275V919H276V916H277V916H278V921H279V912H280V910H281V910H282V916H283V922H284V922H285V913H286V913H287V919H288V914H289V914H290V920H291V914H292V914H293V915H294V911H295V911H296V913H297V913H298V922H299V922H300V920H301V920H302V915H303V915H304V918H305V917H306V917H307V919H308V919H309V914H310V914H311V917H312V917H313V917H314V919H315V916H316V912H317V912H318V914H319V914H320V927H321V915H322V915H323V918H324V920H325V918H326V914H327V914H328V915H329V918H330V915H331V915H332V914H333V914H334V918H335V918H336V916H337V916H338V920H339V914H340V914H341V917H342V918H343V909H344V909H345V917H346V909H347V909H348V917H349V911H350V911H351V916H352V910H353V910H354V910H355V913H356V913H357V913H358V907H359V907H360V922H361V916H362V916H363V918H364V912H365V912H366V918H367V919H368V910H369V910H370V922H371V922H372V923H373V921H374V917H375V915H376V915H377V915H378V917H379V919H380V923H381V919H382V902H383V902H384V913H385V913H386V919H387V919H388V913H389V913H390V905H391V905H392V912H393V912H394V918H395V918H396V911H397V911H398V914H399V914H400V921H401V913H402V913H403V922H404V920H405V920H406V920H407V917H408V917H409V915H410V915H411V908H412V908H413V913H414V920H415V916H416V911H417V911H418V916H419V916H420V921H421V924H422V918H423V917H424V895H425V895H426V919H427V915H428V915H429V917H430V917H431V918H432V919H433V915H434V910H435V907H436V907H437V909H438V909H439V918H440V918H441V912H442V912H443V921H444V925H445V922H446V922H447V916H448V910H449V910H450V918H451V908H452V908H453V919H454V919H455V920H456V917H457V917H458V919H459V916H460V913H461V913H462V917H463V917H464V923H465V912H466V912H467V912H468V912H469V909H470V909H471V912H472V920H473V920H474V916H475V916H476V920H477V920H478V909H479V909H480V909H481V922H482V922H483V924H484V920H485V918H486V918H487V906H488V906H489V906H490V910H491V910H492V921H493V908H494V908H495V914H496V914H497V914H498V919H499V915H500V915H501V910H502V910H503V916H504V916H505V917H506V917H507V917H508V919H509V915H510V915H511V922H512V920H513V920H514V920H515V923H516V925H517V914H518V912H519V912H520V915H521V915H522V915H523V915H524V911H525V911H526V907H527V907H528V918H529V915H530V907H531V907H532V919H533V911H534V911H535V911H536V915H537V915H538V913H539V911H540V911H541V916H542V920H543V920H544V920H545V920H546V920H547V915H548V913H549V913H550V924H551V907H552V907H553V911H554V911H555V913H556V914H557V922H558V920H559V912H560V912H561V914H562V917H563V920H564V913H565V913H566V919H567V911H568V911H569V905H570V905H571V921H572V917H573V917H574V919H575V919H576V915H577V915H578V915H579V911H580V901H581V901H582V922H583V904H584V904H585V914H586V919H587V914H588V914H589V914H590V913H591V913H592V915H593V915H594V915H595V912H596V912H597V918H598V919H599V914H600V914H601V915H602V916H603V916H604V919H605V919H606V913H607V912H608V912H609V912H610V915H611V914H612V914H613V924H614V922H615V922H616V919H617V917H618V916H619V916H620V916H621V916H622V916H623V916H624V923H625V913H626V913H627V919H628V910H629V910H630V915H631V914H632V914H633V913H634V913H635V913H636V918H637V918H638V901H639V901H640V923H641V917H642V917H643V916H644V916H645V916H646V916H647V914H648V914H649V914H650V914H651V922H652V910H653V910H654V909H655V909H656V909H657V909H658V916H659V916H660V916H661V926H662V926H663V926H664V924H665V924H666V926H667V914H668V914H669V927H670V907H671V907H672V907H673V925H674V925H675V915H676V915H677V926H678V925H679V917H680V917H681V920H682V920H683V920H684V925H685V922H686V922H687V924H688V921H689V916H690V914H691V914H692V921H693V920H694V920H695V920H696V916H697V916H698V908H699V908H700V923H701V921H702V900H703V900H704V900H705V923H706V914H707V914H708V921H709V918H710V918H711V913H712V913H713V906H714V906H715V915H716V915H717V915H718V910H719V910H720V915H721V921H722V914H723V914H724V922H725V914H726V914H727V914H728V921H729V919H730V919H731V922H732V914H733V914H734V916H735V915H736V915H737V918H738V913H739V913H740V918H741V922H742V922H743V923H744V923H745V906H746V906H747V920H748V918H749V917H750V913H751V913H752V915H753V900H754V900H755V900H756V907H757V907H758V912H759V914H760V914H761V914H762V921H763V913H764V913H765V915H766V915H767V912H768V912H769V912H770V918H771V919H772V917H773V910H774V910H775V910H776V921H777V916H778V916H779V918H780V921H781V921H782V921H783V917H784V917H785V920H786V916H787V916H788V923H789V916H790V916H791V916H792V909H793V909H794V909H795V922H796V917H797V917H798V918H799V918H800V913H801V913H802V922H803V917H804V907H805V907H806V924H807V923H808V913H809V913H810V921H811V927H812V927H813V917H814V917H815V919H816V919H817V921H818V907H819V907H820V907H821V921H822V920H823V910H824V910H825V912H826V918H827V918H828V919H829V919H830V919H831V919H832V924H833V922H834V922H835V920H836V916H837V916H838V917H839V917H840V913H841V913H842V919H843V916H844V915H845V915H846V915H847V919H848V906H849V906H850V918H851V920H852V920H853V915H854V912H855V912H856V909H857V909H858V909H859V916H860V917H861V917H862V918H863V915H864V915H865V908H866V907H867V907H868V914H869V910H870V910H871V906H872V906H873V906H874V924H875V914H876V913H877V913H878V917H879V917H880V919H881V919H882V920H883V920H884V923H885V917H886V917H887V910H888V910H889V925H890V917H891V917H892V914H893V914H894V922H895V918H896V918H897V915H898V915H899V917H900V917H901V922H902V912H903V912H904V914H905V916H906V914H907V914H908V910H909V910H910V910H911V911H912V921H913V917H914V917H915V911H916V911H917V915H918V909H919V902H920V902H921V919H922V919H923V924H924V919H925V919H926V913H927V910H928V910H929V925H930V914H931V914H932V916H933V916H934V916H935V907H936V907H937V909H938V909H939V912H940V918H941V918H942V913H943V912H944V912H945V912H946V916H947V916H948V916H949V924H950V924H951V918H952V918H953V920H954V921H955V916H956V916H957V921H958V926H959V921H960V908H961V908H962V917H963V917H964V922H965V917H966V917H967V917H968V926H969V918H970V918H971V918H972V913H973V907H974V907H975V912H976V912H977V912H978V916H979V919H980V919H981V911H982V911H983V911H984V912H985V916H986V916H987V920H988V915H989V915H990V926H991V914H992V914H993V922H994V922H995V921H996V918H997V917H998V911H999V911H1000V915H1001V915H1002V918H1003V918H1004V919H1005V919H1006V916H1007V916H1008V916H1009V919H1010V919H1011V918H1012V918H1013V912H1014V912H1015V913H1016V913H1017V920H1018V919H1019V919H1020V919H1021V906H1022V906H1023V906H1024V910H1025V910H1026V912H1027V915H1028V919H1029V911H1030V911H1031V912H1032V912H1033V920H1034V920H1035V912H1036V912H1037V917H1038V914H1039V914H1040V912H1041V912H1042V912H1043V904H1044V904H1045V923H1046V919H1047V919H1048V917H1049V917H1050V917H1051V917H1052V911H1053V911H1054V911H1055V913H1056V913H1057V913H1058V916H1059V918H1060V918H1061V918H1062V907H1063V907H1064V919H1065V919H1066V919H1067V915H1068V915H1069V920H1070V920H1071V925H1072V916H1073V916H1074V917H1075V917H1076V909H1077V909H1078V911H1079V915H1080V921H1081V913H1082V913H1083V913H1084V911H1085V911H1086V911H1087V917H1088V919H1089V915H1090V915H1091V920H1092V923H1093V914H1094V914H1095V911H1096V911H1097V911H1098V923H1099V906H1100V906H1101V917H1102V918H1103V918H1104V919H1105V919H1106V921H1107V920H1108V920H1109V920H1110V913H1111V913H1112V915H1113V915H1114V915H1115V915H1116V922H1117V917H1118V917H1119V918H1120V922H1121V911H1122V911H1123V914H1124V909H1125V909H1126V909H1127V920H1128V920H1129V920H1130V917H1131V917H1132V915H1133V915H1134V914H1135V912H1136V912H1137V919H1138V915H1139V902H1140V902H1141V902H1142V920H1143V920H1144V924H1145V927H1146V923H1147V922H1148V920H1149V920H1150V915H1151V915H1152V923H1153V922H1154V917H1155V917H1156V920H1157V917H1158V911H1159V911H1160V915H1161V921H1162V921H1163V915H1164V915H1165V919H1166V910H1167V910H1168V915H1169V915H1170V915H1171V910H1172V910H1173V921H1174V915H1175V915H1176V919H1177V914H1178V914H1179V908H1180V908H1181V928H1182V920H1183V920H1184V929H1185V914H1186V914H1187V912H1188V912H1189V910H1190V910H1191V926H1192V917H1193V904H1194V904H1195V910H1196V910H1197V917H1198V917H1199V918H1200V925H1201V907H1202V907H1203V912H1204V912H1205V924H1206V913H1207V913H1208V917H1209V912H1210V912H1211V921H1212V921H1213V921H1214V919H1215V919H1216V922H1217V916H1218V916H1219V915H1220V915H1221V916H1222V922H1223V916H1224V910H1225V910H1226V908H1227V908H1228V922H1229V908H1230V908H1231V922H1232V918H1233V918H1234V919H1235V917H1236V917H1237V909H1238V909H1239V917H1240V917H1241V918H1242V918H1243V918H1244V921H1245V916H1246V916H1247V925H1248V923H1249V918H1250V913H1251V913H1252V918H1253V918H1254V918H1255V918H1256V922H1257V919H1258V918H1259V914H1260V914H1261V913H1262V913H1263V918H1264V919H1265V919H1266V916H1267V916H1268V923H1269V919H1270V919H1271V919H1272V919H1273V919H1274V920H1275V913H1276V913H1277V913H1278V923H1279V917H1280V914H1281V914H1282V916H1283V916H1284V918H1285V915H1286V915H1287V917H1288V918H1289V920H1290V917H1291V917H1292V914H1293V914H1294V917H1295V917H1296V912H1297V912H1298V912H1299V912H1300V919H1301V914H1302V914H1303V919H1304V923H1305V915H1306V915H1307V916H1308V916H1309V920H1310V922H1311V922H1312V919H1313V915H1314V915H1315V915H1316V921H1317V918H1318V918H1319V919H1320V918H1321V913H1322V913H1323V913H1324V917H1325V917H1326V912H1327V912H1328V912H1329V916H1330V914H1331V914H1332V919H1333V919H1334V923H1335V926H1336V925H1337V914H1338V914H1339V914H1340V912H1341V912H1342V915H1343V915H1344V917H1345V917H1346V911H1347V910H1348V910H1349V919H1350V919H1351V925H1352V927H1353V924H1354V922H1355V920H1356V920H1357V918H1358V911H1359V911H1360V916H1361V910H1362V910H1363V917H1364V918H1365V920H1366V925H1367V925H1368V925H1369V913H1370V913H1371V917H1372V917H1373V923H1374V912H1375V912H1376V915H1377V905H1378V905H1379V924H1380V907H1381V907H1382V922H1383V906H1384V906H1385V916H1386V910H1387V910H1388V918H1389V912H1390V912H1391V912H1392V911H1393V911H1394V913H1395V917H1396V917H1397V919H1398V919H1399V919H1400V916H1401V916H1402V916H1403V915H1404V915H1405V915H1406V915H1407V915H1408V920H1409V920H1410V915H1411V915H1412V914H1413V914H1414V919H1415V922H1416V924H1417V915H1418V912H1419V904H1420V904H1421V904H1422V914H1423V914H1424V918H1425V914H1426V914H1427V917H1428V916H1429V915H1430V915H1431V911H1432V911H1433V912H1434V911H1435V911H1436V923H1437V925H1438V920H1439V920H1440V921H1441V921H1442V920H1443V920H1444V920H1445V918H1446V918H1447V918H1448V922H1449V922H1450V916H1451V911H1452V911H1453V915H1454V915H1455V921H1456V919H1457V915H1458V915H1459V919H1460V919H1461V919H1462V921H1463V913H1464V913H1465V915H1466V915H1467V918H1468V918H1469V923H1470V925H1471V924H1472V924H1473V922H1474V914H1475V914H1476V912H1477V912H1478V912H1479V924H1480V917H1481V917H1482V915H1483V915H1484V918H1485V920H1486V917H1487V914H1488V914H1489V914H1490V920H1491V909H1492V909H1493V914H1494V914H1495V916H1496V916H1497V922H1498V922H1499V915H1500V909H1501V909H1502V914H1503V914H1504V922H1505V921H1506V913H1507V913H1508V921H1509V916H1510V916H1511V914H1512V914H1513V921H1514V920H1515V920H1516V917H1517V917H1518V917H1519V912H1520V912H1521V915H1522V919H1523V910H1524V910H1525V910H1526V917H1527V915H1528V915H1529V915H1530V909H1531V909H1532V921H1533V921H1534V911H1535V911H1536V922H1537V923H1538V917H1539V917H1540V914H1541V914H1542V921H1543V921H1544V923H1545V921H1546V919H1547V919H1548V920H1549V920H1550V919H1551V917H1552V901H1553V901H1554V905H1555V918H1556V921H1557V920H1558V914H1559V909H1560V909H1561V916H1562V918H1563V912H1564V912H1565V912H1566V921H1567V914H1568V914H1569V921H1570V906H1571V906H1572V916H1573V916H1574V916H1575V916H1576V919H1577V920H1578V920H1579V925H1580V925H1581V914H1582V914H1583V917H1584V923H1585V919H1586V919H1587V912H1588V912H1589V916H1590V916H1591V919H1592V924H1593V921H1594V921H1595V918H1596V918H1597V919H1598V907H1599V907H1600V915H1601V920H1602V923H1603V919H1604V914H1605V908H1606V908H1607V915H1608V915H1609V922H1610V921H1611V920H1612V920H1613V924H1614V924H1615V917H1616V917H1617V919H1618V915H1619V915H1620V923H1621V923H1622V919H1623V916H1624V915H1625V911H1626V911H1627V911H1628V911H1629V920H1630V904H1631V904H1632V910H1633V925H1634V918H1635V918H1636V915H1637V913H1638V913H1639V921H1640V914H1641V914H1642V915H1643V915H1644V917H1645V915H1646V915H1647V912H1648V907H1649V907H1650V922H1651V922H1652V919H1653V919H1654V918H1655V917H1656V917H1657V918H1658V918H1659V918H1660V915H1661V915H1662V918H1663V918H1664V913H1665V913H1666V913H1667V915H1668V913H1669V913H1670V923H1671V923H1672V923H1673V913H1674V913H1675V922H1676V918H1677V918H1678V916H1679V916H1680V911H1681V909H1682V903H1683V903H1684V903H1685V919H1686V925H1687V922H1688V921H1689V919H1690V909H1691V909H1692V909H1693V912H1694V923H1695V913H1696V913H1697V913H1698V919H1699V914H1700V914H1701V912H1702V912H1703V918H1704V918H1705V916H1706V916H1707V919H1708V919H1709V908H1710V908H1711V920H1712V910H1713V910H1714V917H1715V914H1716V914H1717V918H1718V920H1719V912H1720V912H1721V920H1722V924H1723V956H1722V942H1721V939H1720V939H1719V940H1718V940H1717V944H1716V945H1715V945H1714V940H1713V944H1712V944H1711V944H1710V947H1709V947H1708V940H1707V941H1706V949H1705V955H1704V955H1703V944H1702V943H1701V937H1700V943H1699V943H1698V935H1697V948H1696V948H1695V946H1694V945H1693V943H1692V943H1691V941H1690V941H1689V944H1688V948H1687V948H1686V945H1685V941H1684V943H1683V944H1682V944H1681V941H1680V942H1679V942H1678V940H1677V940H1676V939H1675V935H1674V942H1673V948H1672V948H1671V943H1670V943H1669V940H1668V942H1667V947H1666V947H1665V942H1664V941H1663V937H1662V943H1661V943H1660V938H1659V951H1658V951H1657V948H1656V948H1655V947H1654V947H1653V942H1652V949H1651V951H1650V951H1649V936H1648V947H1647V947H1646V948H1645V948H1644V948H1643V943H1642V943H1641V939H1640V940H1639V943H1638V943H1637V953H1636V953H1635V953H1634V950H1633V940H1632V944H1631V944H1630V947H1629V947H1628V947H1627V944H1626V948H1625V948H1624V948H1623V945H1622V945H1621V949H1620V949H1619V946H1618V952H1617V952H1616V941H1615V941H1614V953H1613V953H1612V944H1611V944H1610V944H1609V942H1608V942H1607V948H1606V948H1605V948H1604V947H1603V946H1602V951H1601V951H1600V948H1599V948H1598V937H1597V939H1596V939H1595V948H1594V948H1593V946H1592V941H1591V941H1590V942H1589V942H1588V942H1587V948H1586V948H1585V943H1584V947H1583V947H1582V947H1581V944H1580V945H1579V945H1578V943H1577V943H1576V942H1575V950H1574V950H1573V943H1572V943H1571V951H1570V952H1569V952H1568V949H1567V949H1566V949H1565V945H1564V945H1563V953H1562V953H1561V953H1560V942H1559V953H1558V953H1557V943H1556V941H1555V940H1554V946H1553V946H1552V939H1551V945H1550V945H1549V945H1548V945H1547V945H1546V942H1545V945H1544V945H1543V949H1542V949H1541V945H1540V945H1539V938H1538V938H1537V944H1536V944H1535V952H1534V952H1533V942H1532V946H1531V946H1530V946H1529V940H1528V938H1527V952H1526V952H1525V952H1524V946H1523V947H1522V947H1521V931H1520V945H1519V957H1518V957H1517V947H1516V947H1515V943H1514V943H1513V940H1512V947H1511V947H1510V946H1509V947H1508V953H1507V953H1506V955H1505V963H1504V963H1503V940H1502V945H1501V945H1500V942H1499V945H1498V945H1497V945H1496V952H1495V957H1494V957H1493V936H1492V939H1491V940H1490V948H1489V948H1488V941H1487V943H1486V948H1485V948H1484V942H1483V946H1482V946H1481V946H1480V952H1479V952H1478V942H1477V948H1476V948H1475V941H1474V941H1473V942H1472V942H1471V946H1470V946H1469V941H1468V949H1467V949H1466V952H1465V952H1464V952H1463V942H1462V943H1461V950H1460V950H1459V950H1458V947H1457V943H1456V939H1455V936H1454V942H1453V942H1452V941H1451V950H1450V950H1449V943H1448V943H1447V943H1446V943H1445V943H1444V949H1443V949H1442V949H1441V941H1440V941H1439V945H1438V953H1437V953H1436V939H1435V939H1434V945H1433V945H1432V954H1431V954H1430V945H1429V945H1428V942H1427V940H1426V948H1425V948H1424V944H1423V946H1422V946H1421V944H1420V941H1419V941H1418V941H1417V938H1416V943H1415V943H1414V950H1413V950H1412V950H1411V955H1410V955H1409V941H1408V941H1407V956H1406V956H1405V939H1404V943H1403V952H1402V952H1401V957H1400V957H1399V957H1398V946H1397V950H1396V950H1395V944H1394V944H1393V944H1392V941H1391V937H1390V946H1389V958H1388V958H1387V946H1386V946H1385V946H1384V952H1383V952H1382V946H1381V946H1380V946H1379V945H1378V942H1377V940H1376V943H1375V949H1374V949H1373V943H1372V943H1371V950H1370V950H1369V945H1368V945H1367V941H1366V941H1365V946H1364V946H1363V945H1362V941H1361V952H1360V952H1359V950H1358V950H1357V950H1356V950H1355V942H1354V955H1353V955H1352V937H1351V943H1350V943H1349V953H1348V957H1347V957H1346V957H1345V942H1344V942H1343V946H1342V946H1341V942H1340V939H1339V950H1338V950H1337V959H1336V959H1335V953H1334V941H1333V946H1332V946H1331V945H1330V954H1329V954H1328V950H1327V950H1326V942H1325V945H1324V945H1323V944H1322V944H1321V943H1320V940H1319V941H1318V941H1317V951H1316V951H1315V945H1314V945H1313V938H1312V939H1311V946H1310V946H1309V955H1308V955H1307V941H1306V954H1305V954H1304V944H1303V942H1302V944H1301V944H1300V937H1299V944H1298V944H1297V947H1296V947H1295V944H1294V935H1293V946H1292V946H1291V940H1290V942H1289V944H1288V944H1287V944H1286V944H1285V947H1284V956H1283V956H1282V956H1281V947H1280V947H1279V947H1278V947H1277V947H1276V947H1275V947H1274V947H1273V949H1272V949H1271V942H1270V945H1269V945H1268V943H1267V943H1266V940H1265V943H1264V951H1263V951H1262V936H1261V937H1260V937H1259V948H1258V948H1257V948H1256V948H1255V946H1254V946H1253V942H1252V946H1251V946H1250V943H1249V950H1248V950H1247V939H1246V941H1245V949H1244V949H1243V949H1242V949H1241V934H1240V936H1239V947H1238V950H1237V950H1236V950H1235V937H1234V941H1233V941H1232V950H1231V950H1230V947H1229V947H1228V947H1227V944H1226V944H1225V941H1224V961H1223V961H1222V961H1221V950H1220V950H1219V947H1218V947H1217V946H1216V946H1215V945H1214V945H1213V942H1212V950H1211V950H1210V950H1209V949H1208V967H1207V967H1206V947H1205V947H1204V943H1203V943H1202V943H1201V945H1200V945H1199V938H1198V935H1197V938H1196V943H1195V943H1194V952H1193V952H1192V946H1191V946H1190V944H1189V946H1188V946H1187V946H1186V945H1185V945H1184V945H1183V943H1182V947H1181V947H1180V943H1179V942H1178V937H1177V937H1176V943H1175V943H1174V943H1173V943H1172V941H1171V941H1170V948H1169V948H1168V948H1167V948H1166V944H1165V947H1164V947H1163V954H1162V954H1161V950H1160V950H1159V940H1158V945H1157V945H1156V946H1155V946H1154V946H1153V946H1152V953H1151V953H1150V951H1149V951H1148V951H1147V949H1146V949H1145V942H1144V949H1143V949H1142V943H1141V947H1140V949H1139V949H1138V943H1137V943H1136V948H1135V948H1134V946H1133V946H1132V938H1131V945H1130V945H1129V945H1128V943H1127V943H1126V942H1125V941H1124V952H1123V952H1122V950H1121V950H1120V950H1119V941H1118V945H1117V945H1116V946H1115V946H1114V941H1113V946H1112V946H1111V938H1110V940H1109V944H1108V944H1107V941H1106V938H1105V949H1104V949H1103V949H1102V944H1101V944H1100V958H1099V958H1098V958H1097V940H1096V941H1095V941H1094V947H1093V947H1092V945H1091V945H1090V940H1089V940H1088V936H1087V941H1086V941H1085V947H1084V947H1083V956H1082V956H1081V945H1080V950H1079V950H1078V950H1077V943H1076V943H1075V939H1074V947H1073V962H1072V962H1071V952H1070V944H1069V944H1068V949H1067V949H1066V942H1065V940H1064V941H1063V942H1062V942H1061V945H1060V945H1059V945H1058V945H1057V937H1056V938H1055V953H1054V953H1053V946H1052V946H1051V946H1050V937H1049V943H1048V943H1047V942H1046V943H1045V943H1044V943H1043V943H1042V943H1041V937H1040V937H1039V935H1038V946H1037V946H1036V945H1035V945H1034V945H1033V944H1032V944H1031V950H1030V950H1029V948H1028V947H1027V947H1026V945H1025V939H1024V939H1023V938H1022V951H1021V951H1020V943H1019V962H1018V962H1017V946H1016V943H1015V950H1014V950H1013V950H1012V946H1011V940H1010V944H1009V944H1008V939H1007V942H1006V942H1005V941H1004V939H1003V949H1002V949H1001V949H1000V936H999V943H998V943H997V940H996V940H995V955H994V955H993V942H992V946H991V946H990V942H989V942H988V942H987V939H986V943H985V943H984V942H983V942H982V941H981V941H980V942H979V949H978V949H977V939H976V944H975V944H974V942H973V942H972V940H971V941H970V948H969V953H968V953H967V945H966V945H965V945H964V940H963V949H962V949H961V944H960V946H959V953H958V953H957V949H956V949H955V952H954V952H953V952H952V942H951V942H950V951H949V951H948V945H947V958H946V958H945V942H944V943H943V943H942V943H941V957H940V957H939V941H938V946H937V946H936V943H935V948H934V948H933V950H932V950H931V942H930V946H929V946H928V953H927V953H926V953H925V947H924V946H923V945H922V945H921V949H920V949H919V944H918V946H917V946H916V938H915V938H914V936H913V939H912V939H911V939H910V951H909V951H908V951H907V946H906V950H905V950H904V938H903V948H902V948H901V946H900V946H899V949H898V949H897V943H896V940H895V940H894V947H893V947H892V947H891V939H890V940H889V940H888V938H887V940H886V945H885V945H884V956H883V956H882V944H881V942H880V942H879V942H878V947H877V947H876V945H875V945H874V949H873V949H872V946H871V946H870V935H869V942H868V942H867V942H866V942H865V946H864V946H863V946H862V940H861V940H860V942H859V942H858V948H857V948H856V948H855V943H854V955H853V955H852V955H851V944H850V942H849V940H848V945H847V945H846V945H845V943H844V950H843V950H842V950H841V957H840V957H839V946H838V946H837V940H836V940H835V939H834V937H833V942H832V942H831V942H830V946H829V946H828V942H827V948H826V948H825V948H824V948H823V943H822V943H821V943H820V943H819V940H818V940H817V945H816V948H815V952H814V952H813V945H812V940H811V958H810V958H809V955H808V955H807V944H806V944H805V952H804V953H803V953H802V941H801V941H800V938H799V941H798V943H797V948H796V948H795V945H794V945H793V939H792V943H791V943H790V947H789V947H788V947H787V943H786V945H785V957H784V957H783V956H782V956H781V949H780V940H779V939H778V940H777V942H776V942H775V942H774V938H773V941H772V943H771V955H770V955H769V946H768V946H767V943H766V943H765V940H764V941H763V942H762V943H761V949H760V949H759V949H758V944H757V939H756V940H755V945H754V945H753V946H752V948H751V948H750V948H749V949H748V949H747V946H746V946H745V954H744V954H743V941H742V941H741V937H740V941H739V941H738V939H737V939H736V946H735V946H734V946H733V942H732V943H731V949H730V953H729V953H728V946H727V943H726V943H725V958H724V958H723V942H722V941H721V950H720V950H719V949H718V949H717V949H716V940H715V939H714V939H713V940H712V941H711V941H710V949H709V949H708V942H707V946H706V946H705V952H704V952H703V950H702V946H701V946H700V940H699V947H698V947H697V940H696V950H695V950H694V950H693V940H692V943H691V943H690V937H689V942H688V942H687V942H686V944H685V944H684V953H683V953H682V942H681V943H680V943H679V941H678V945H677V945H676V941H675V941H674V946H673V949H672V949H671V944H670V948H669V949H668V949H667V942H666V944H665V944H664V941H663V945H662V945H661V944H660V940H659V940H658V937H657V941H656V948H655V948H654V949H653V949H652V949H651V951H650V951H649V946H648V945H647V945H646V952H645V952H644V954H643V954H642V954H641V953H640V953H639V940H638V945H637V955H636V955H635V942H634V943H633V943H632V948H631V948H630V949H629V949H628V949H627V946H626V947H625V947H624V943H623V943H622V943H621V948H620V948H619V950H618V950H617V949H616V944H615V942H614V942H613V942H612V947H611V947H610V942H609V939H608V942H607V954H606V954H605V954H604V943H603V943H602V941H601V939H600V947H599V947H598V939H597V939H596V948H595V948H594V948H593V952H592V952H591V952H590V939H589V946H588V946H587V940H586V949H585V949H584V947H583V947H582V946H581V946H580V947H579V947H578V934H577V941H576V941H575V940H574V940H573V950H572V950H571V946H570V941H569V941H568V939H567V944H566V953H565V953H564V953H563V948H562V950H561V950H560V945H559V955H558V955H557V941H556V940H555V940H554V942H553V943H552V944H551V944H550V947H549V951H548V951H547V951H546V944H545V939H544V942H543V944H542V957H541V957H540V936H539V945H538V945H537V947H536V950H535V950H534V945H533V945H532V940H531V939H530V945H529V945H528V945H527V939H526V947H525V947H524V947H523V944H522V944H521V945H520V945H519V945H518V948H517V948H516V947H515V947H514V944H513V942H512V943H511V951H510V951H509V943H508V939H507V942H506V942H505V942H504V943H503V948H502V948H501V946H500V946H499V942H498V940H497V940H496V941H495V941H494V946H493V946H492V940H491V954H490V954H489V944H488V944H487V943H486V943H485V939H484V942H483V946H482V946H481V947H480V947H479V946H478V946H477V949H476V949H475V936H474V934H473V943H472V943H471V939H470V950H469V950H468V944H467V944H466V938H465V938H464V946H463V946H462V945H461V943H460V944H459V947H458V947H457V942H456V946H455V946H454V950H453V950H452V955H451V955H450V939H449V942H448V942H447V942H446V944H445V944H444V939H443V939H442V949H441V949H440V943H439V943H438V946H437V946H436V939H435V942H434V942H433V941H432V944H431V952H430V952H429V956H428V956H427V956H426V939H425V944H424V944H423V944H422V944H421V942H420V941H419V949H418V949H417V943H416V943H415V954H414V954H413V946H412V946H411V945H410V948H409V948H408V946H407V954H406V954H405V949H404V949H403V949H402V949H401V947H400V947H399V942H398V939H397V939H396V947H395V947H394V946H393V950H392V950H391V940H390V948H389V948H388V948H387V944H386V944H385V940H384V949H383V951H382V951H381V951H380V940H379V954H378V954H377V947H376V947H375V947H374V942H373V941H372V940H371V940H370V940H369V948H368V958H367V958H366V943H365V941H364V947H363V947H362V940H361V945H360V945H359V940H358V949H357V949H356V944H355V942H354V942H353V942H352V944H351V951H350V951H349V943H348V938H347V939H346V939H345V945H344V945H343V945H342V947H341V947H340V950H339V952H338V952H337V941H336V941H335V946H334V946H333V948H332V948H331V948H330V943H329V950H328V950H327V944H326V938H325V937H324V935H323V945H322V951H321V951H320V943H319V943H318V957H317V957H316V936H315V948H314V949H313V949H312V942H311V942H310V942H309V940H308V947H307V947H306V945H305V949H304V952H303V952H302V942H301V943H300V947H299V947H298V942H297V942H296V939H295V946H294V946H293V948H292V948H291V946H290V946H289V946H288V940H287V941H286V941H285V938H284V943H283V954H282V954H281V944H280V947H279V948H278V948H277V948H276V941H275V940H274V946H273V946H272V950H271V950H270V950H269V948H268V936H267V942H266V944H265V945H264V945H263V941H262V942H261V942H260V941H259V945H258V945H257V942H256V953H255V953H254V948H253V958H252V958H251V958H250V945H249V942H248V942H247V955H246V955H245V949H244V949H243V945H242V939H241V945H240V949H239V949H238V949H237V949H236V943H235V950H234V950H233V944H232V944H231V942H230V942H229V942H228V940H227V943H226V943H225V945H224V945H223V945H222V943H221V943H220V943H219V948H218V948H217V954H216V954H215V954H214V943H213V949H212V949H211V944H210V947H209V947H208V944H207V944H206V938H205V955H204V955H203V951H202V951H201V942H200V947H199V948H198V963H197V963H196V946H195V944H194V944H193V944H192V937H191V945H190V945H189V945H188V947H187V947H186V948H185V948H184V938H183V945H182V953H181V953H180V941H179V947H178V947H177V946H176V946H175V946H174V942H173V949H172V949H171V944H170V946H169V946H168V942H167V949H166V949H165V947H164V939H163V951H162V951H161V945H160V945H159V939H158V943H157V954H156V954H155V944H154V942H153V942H152V942H151V944H150V945H149V945H148V954H147V954H146V947H145V947H144V944H143Z" fill="#f00" stroke="none"/>
    <!-- x axis (residuals) -->
    <path d="M113 1000.5H1878 M113.5 1000v4M465.5 1000v4M818.5 1000v4M1171.5 1000v4M1524.5 1000v4M1877.5 1000v4 M183.5 1000v3M254.5 1000v3M324.5 1000v3M395.5 1000v3M536.5 1000v3M606.5 1000v3M677.5 1000v3M748.5 1000v3M889.5 1000v3M959.5 1000v3M1030.5 1000v3M1100.5 1000v3M1241.5 1000v3M1312.5 1000v3M1383.5 1000v3M1453.5 1000v3M1594.5 1000v3M1665.5 1000v3M1735.5 1000v3M1806.5 1000v3" stroke="#000" stroke-width="1"/>
  </g>
  <g text-anchor="end">
    <text x="68" y="94">126352</text>
    <text x="68" y="135">63176</text>
    <text x="72" y="791">1</text>
    <text x="72" y="901">4</text>
    <text x="72" y="918">2</text>
    <text x="72" y="936">0</text>
    <text x="72" y="953">-2</text>
    <text x="72" y="971">-4</text>
  </g>
  <g text-anchor="middle">
    <text x="113" y="836">0</text><text x="463" y="836">2000</text><text x="816" y="836">4000</text>
    <text x="1168.500" y="836">5999</text><text x="1521" y="836">7999</text><text x="1874.500" y="836">9999</text>
    <text x="113" y="1016">0</text><text x="463" y="1016">2000</text><text x="816" y="1016">4000</text>
    <text x="1168.500" y="1016">5999</text><text x="1521" y="1016">7999</text><text x="1874.500" y="1016">9999</text>
    <text x="985" y="1033">Channel [#]</text>
  </g>
  <text x="7" y="442">[#]</text>
  <text x="7" y="993">Conv. Level</text>
</svg>

<!-- Channels panel -->
<div class="abs panel" style="left:1102px;top:689px;width:500px;height:101px">
  <div class="abs" style="left:0;top:0;width:500px;height:1px;background:#1883d7"></div>
  <div class="abs ptitle" style="left:0;top:1px;width:500px;height:30px;padding:8px 0 0 8px;color:#000">Channels</div>
  <div class="abs" style="left:480px;top:8px;width:19px;height:19px;background:#c75050;color:#fff;font-size:10.500px;font-weight:bold;text-align:center;line-height:17px">x</div>
  <div class="abs lab" style="left:4px;top:49px;width:90px">(0)</div>
  <div class="abs lab" style="left:406px;top:49px;width:90px">(9999)</div>
  <div class="abs inp" style="left:4px;top:81px;width:90px">0</div>
  <div class="abs inp" style="left:406px;top:81px;width:90px">9999</div>
  <div class="abs" style="left:125px;top:65px;width:250px;height:2px;background:#bdbdbd"></div>
  <div class="abs knob" style="left:118px;top:59px"></div>
  <div class="abs knob" style="left:368px;top:59px"></div>
</div>

<!-- Counts panel -->
<div class="abs panel" style="left:1611px;top:340px;width:100px;height:451px">
  <div class="abs ptitle" style="left:0;top:0;width:100px;height:31px;padding:9px 0 0 8px;color:#999">Counts</div>
  <div class="abs" style="left:80px;top:8px;width:19px;height:19px;background:#e5e5e5;color:#f2f2f2;font-size:10.500px;font-weight:bold;text-align:center;line-height:17px">x</div>
  <div class="abs lab" style="left:0;top:39px;width:100px">(126352)</div>
  <div class="abs inp" style="left:6px;top:61px;width:88px">126352</div>
  <div class="abs" style="left:49px;top:110px;width:2px;height:262px;background:#bdbdbd"></div>
  <div class="abs knob" style="left:43.500px;top:103px"></div>
  <div class="abs knob" style="left:43.500px;top:365.400px"></div>
  <div class="abs inp" style="left:6px;top:405px;width:88px">1</div>
  <div class="abs lab" style="left:0;top:427.500px;width:100px">(1)</div>
</div>

<!-- taskbar -->
<div id="taskbar" class="abs">
<svg class="abs" style="left:0;top:0" width="1920" height="40" viewBox="0 1040 1920 40">
  <defs>
    <linearGradient id="gsh" x1="0" y1="0" x2="1" y2="1"><stop offset="0" stop-color="#ffffff"/><stop offset="1" stop-color="#b9bec4"/></linearGradient>
    <linearGradient id="gpal" x1="0" y1="0" x2="1" y2="1"><stop offset="0" stop-color="#e4f1fa"/><stop offset="1" stop-color="#7fb4da"/></linearGradient>
  </defs>
  <!-- start -->
  <path d="M15.800 1054.800L22.300 1053.700V1059.500H15.800ZM23.100 1053.600L32.200 1051.800V1059.500H23.100ZM15.800 1060.300H22.300V1066.400L15.800 1065.400ZM23.100 1060.300H32.200V1068.200L23.100 1066.500Z" fill="#fff"/>
  <!-- search -->
  <g fill="none" stroke="#fff" stroke-width="1.300"><circle cx="74.500" cy="1057.600" r="5.100"/><path d="M70.800 1061.300L64.300 1067.800"/></g>
  <!-- task view -->
  <g fill="none" stroke="#fff" stroke-width="1.300"><rect x="114.600" y="1053.600" width="11.400" height="12.800"/><path d="M112.600 1055.800H110.700V1064.400H112.600M128 1055.800H129.900V1064.400H128"/></g>
  <!-- edge -->
  <path fill-rule="evenodd" fill="#0b83e6" d="M160.900 1058.600C161.800 1053.500 166.500 1049 172.300 1049C178 1049 181.200 1053.500 181.200 1059V1062H168.200C168.500 1064.600 171 1066.200 173.800 1066.200C175.800 1066.200 177.600 1065.600 179 1064.400V1069.300C177.200 1070.300 175 1070.800 172.400 1070.800C167 1070.800 163.100 1067.200 163.100 1062C163.100 1058.800 164.800 1056.200 167.600 1054.600C164.800 1055 162.600 1056.400 160.900 1058.600ZM168.400 1057.400H174.300C174.300 1055.400 173.200 1054.100 171.400 1054.100C169.800 1054.100 168.700 1055.400 168.400 1057.400Z"/>
  <!-- explorer -->
  <path d="M209.200 1052.300q0-1.300 1.300-1.300h6.300l1.500 1.500h-9.100z" fill="#f3c64a"/>
  <rect x="209.200" y="1052.300" width="21.500" height="15.900" rx=".8" fill="#ffe692"/>
  <path d="M213.200 1069v-7.200q0-1 1-1h11.800q1 0 1 1v7.200h-3.700v-4.700h-6.500v4.700z" fill="#3bb3ee"/>
  <rect x="210.400" y="1051.700" width="3.600" height=".8" fill="#cfe9f7"/>
  <!-- red stopwatch app -->
  <g transform="translate(0 0)">
    <rect x="257" y="1047.900" width="24.200" height="24.100" rx="2.600" fill="#dc2352"/>
    <rect x="258" y="1048.900" width="22.200" height="22.100" rx="2" fill="#c9193f"/>
    <path d="M264.200 1054.800C258.200 1058 257.400 1064.200 262 1068.200C263.600 1069.500 265.400 1070.100 266.800 1070.100C262.600 1067.300 260.400 1061.300 264.200 1054.800Z" fill="#fff" opacity=".8"/>
    <circle cx="265.800" cy="1052" r="2.900" fill="#fff" opacity=".38"/>
    <circle cx="271.700" cy="1063" r="6.700" fill="none" stroke="#fff" stroke-width="1.200"/>
    <path d="M271.300 1058.100h1.100l-.1 6h-.9z" fill="#fff"/>
    <path d="M270.300 1053.700h3.100M271.800 1053.700v2.400M275.600 1056.100l1-.9" stroke="#fff" stroke-width=".9" fill="none"/>
  </g>
  <!-- blue stopwatch app (active) -->
  <g transform="translate(49 0)">
    <rect x="257" y="1047.900" width="24.200" height="24.100" rx="2.600" fill="#3f7ecb"/>
    <rect x="258" y="1048.900" width="22.200" height="22.100" rx="2" fill="#3270ba"/>
    <path d="M264.200 1054.800C258.200 1058 257.400 1064.200 262 1068.200C263.600 1069.500 265.400 1070.100 266.800 1070.100C262.600 1067.300 260.400 1061.300 264.200 1054.800Z" fill="#fff" opacity=".8"/>
    <circle cx="265.800" cy="1052" r="2.900" fill="#fff" opacity=".38"/>
    <circle cx="271.700" cy="1063" r="6.700" fill="none" stroke="#fff" stroke-width="1.200"/>
    <path d="M271.300 1058.100h1.100l-.1 6h-.9z" fill="#fff"/>
    <path d="M270.300 1053.700h3.100M271.800 1053.700v2.400M275.600 1056.100l1-.9" stroke="#fff" stroke-width=".9" fill="none"/>
  </g>
  <!-- shield -->
  <g transform="translate(367 1060) rotate(-14)">
    <path d="M0 -11.500C3.500 -9.200 6.500 -8.400 9 -8.400C9 0.500 6 7.500 0 11.500C-6 7.500 -9 0.500 -9 -8.400C-6.500 -8.400 -3.500 -9.200 0 -11.500Z" fill="url(#gsh)"/>
    <path d="M0 -9.300C2.600 -7.600 5 -6.900 7.200 -6.800C7.200 -4 6.900 -1.800 6.300 0H0Z" fill="#2fa32c"/>
    <path d="M0 0V9.300C-3 7 -5.200 3.800 -6.300 0Z" fill="#3dbb3a"/>
    <path d="M0 0H6.300C5.200 3.800 3 7 0 9.300Z" fill="#e9ecef"/>
  </g>
  <!-- keyboard keys -->
  <g stroke="#b7a4b8" stroke-width=".8" fill="#e9e7e9">
    <rect x="410.400" y="1048.200" width="11.400" height="10.800"/>
    <rect x="404.200" y="1059.200" width="11.500" height="12.400"/>
    <rect x="415.900" y="1059.200" width="11.700" height="12.400"/>
  </g>
  <g font-family="Liberation Sans, sans-serif" font-size="8.500" fill="#3c3c3c" text-anchor="middle">
    <text x="416.100" y="1056.800">N</text><text x="410" y="1068.800">S</text><text x="421.800" y="1068.800">K</text>
  </g>
  <!-- chrome -->
  <g transform="translate(465 1059.900)">
    <circle r="11" fill="#de4d3d"/>
    <path d="M0 0L-9.530 -5.500A11 11 0 0 0 5.500 9.530Z" fill="#1fa15d"/>
    <path d="M0 0L5.500 9.530A11 11 0 0 0 9.530 -5.500L0 -5.500Z" fill="#fdd142"/>
    <path d="M0 -5.500H9.530A11 11 0 0 0 -9.530 -5.500Z" fill="#de4d3d"/>
    <circle r="5.300" fill="#fff"/><circle r="4.200" fill="#4688f1"/>
  </g>
  <!-- sophos -->
  <path d="M503.800 1049.500H523.800V1061.500C523.800 1065.500 519 1068.500 513.800 1070.300C508.600 1068.500 503.800 1065.500 503.800 1061.500Z" fill="#fff" stroke="#1763bd" stroke-width="1.100"/>
  <text x="513.800" y="1065.200" font-family="Liberation Sans, sans-serif" font-weight="bold" font-size="15.500" fill="#1a6fcb" text-anchor="middle" transform="translate(513.800 0) scale(1.180 1) translate(-513.800 0)">S</text>
  <!-- paint -->
  <g>
    <path d="M551.200 1064.600C550.400 1058.400 555.600 1052.800 563.200 1052.600C569.600 1052.500 573.200 1056.600 572.600 1061C572 1066 566.800 1069.400 560.800 1069C557.800 1068.800 556.400 1067.200 557.200 1065.800C557.800 1064.600 556.800 1063.800 555.200 1064.400C553.600 1065.200 551.600 1066.200 551.200 1064.600Z" fill="url(#gpal)"/>
    <circle cx="554.900" cy="1060.800" r="1.700" fill="#e0433c"/><circle cx="558.800" cy="1057.500" r="1.700" fill="#4fb63a"/><circle cx="563.800" cy="1055.700" r="1.800" fill="#f4b321"/>
    <circle cx="560.900" cy="1062.700" r="1.300" fill="#0b0d22"/>
    <path d="M569.700 1054.600L562.400 1071.800" stroke="#e8872a" stroke-width="1.700"/>
    <path d="M568.800 1053.600L569.800 1049L574.400 1051.800L570.800 1054.800Z" fill="#e3c08a"/>
  </g>
  <!-- word -->
  <rect x="612" y="1051.400" width="11" height="16.700" fill="#fff"/>
  <path d="M614.500 1054h7M614.500 1056.400h7M614.500 1058.800h7M614.500 1061.200h7M614.500 1063.600h7M614.500 1066h7" stroke="#2b579a" stroke-width=".9"/>
  <path d="M600.800 1050.700L613.800 1048.500V1071.100L600.800 1068.900Z" fill="#2b579a"/>
  <text x="607.200" y="1063.800" font-family="Liberation Sans, sans-serif" font-weight="bold" font-size="10" fill="#fff" text-anchor="middle">W</text>
  <!-- running indicators -->
  <g fill="#86c3ef">
    <rect x="200" y="1078" width="31.300" height="2"/><rect x="298" y="1078" width="32" height="2"/>
    <rect x="445" y="1078" width="40" height="2"/><rect x="494" y="1078" width="40" height="2"/>
    <rect x="543" y="1078" width="40" height="2"/><rect x="592" y="1078" width="40" height="2"/>
  </g>
  <g fill="#6191b6"><rect x="232" y="1078" width="8" height="2"/><rect x="330.700" y="1078" width="7.300" height="2"/></g>
  <!-- tray -->
  <g fill="none" stroke="#fff" stroke-width="1.100">
    <path d="M1735 1063L1740.900 1057L1746.800 1063"/>
    <path d="M1761.900 1054.500H1772.600V1063.700H1760M1766 1063.700V1066.400M1762 1066.500H1769M1759.500 1058.600V1066.900M1757.400 1054.500H1761.800V1058.600H1757.400Z"/>
    <path d="M1781.200 1058.400H1783L1786 1054.800V1065.600L1783 1062.400H1781.200Z"/>
    <path d="M1788.200 1057.800A3.600 3.600 0 0 1 1788.200 1062.800M1790.600 1055.800A6.600 6.600 0 0 1 1790.600 1064.800M1793.200 1053.800A9.600 9.600 0 0 1 1793.200 1066.800"/>
    <path d="M1879.600 1052.700H1894.600V1064.400H1889.600L1887.100 1067L1884.600 1064.400H1879.600Z"/>
  </g>
  <path d="M1915.500 1040V1080" stroke="#6a6b78" stroke-width="1"/>
</svg>

  <div class="abs t" style="top:3px">11:54</div>
  <div class="abs t" style="top:21px">23.03.2018</div>
</div>
</body>
</html>
